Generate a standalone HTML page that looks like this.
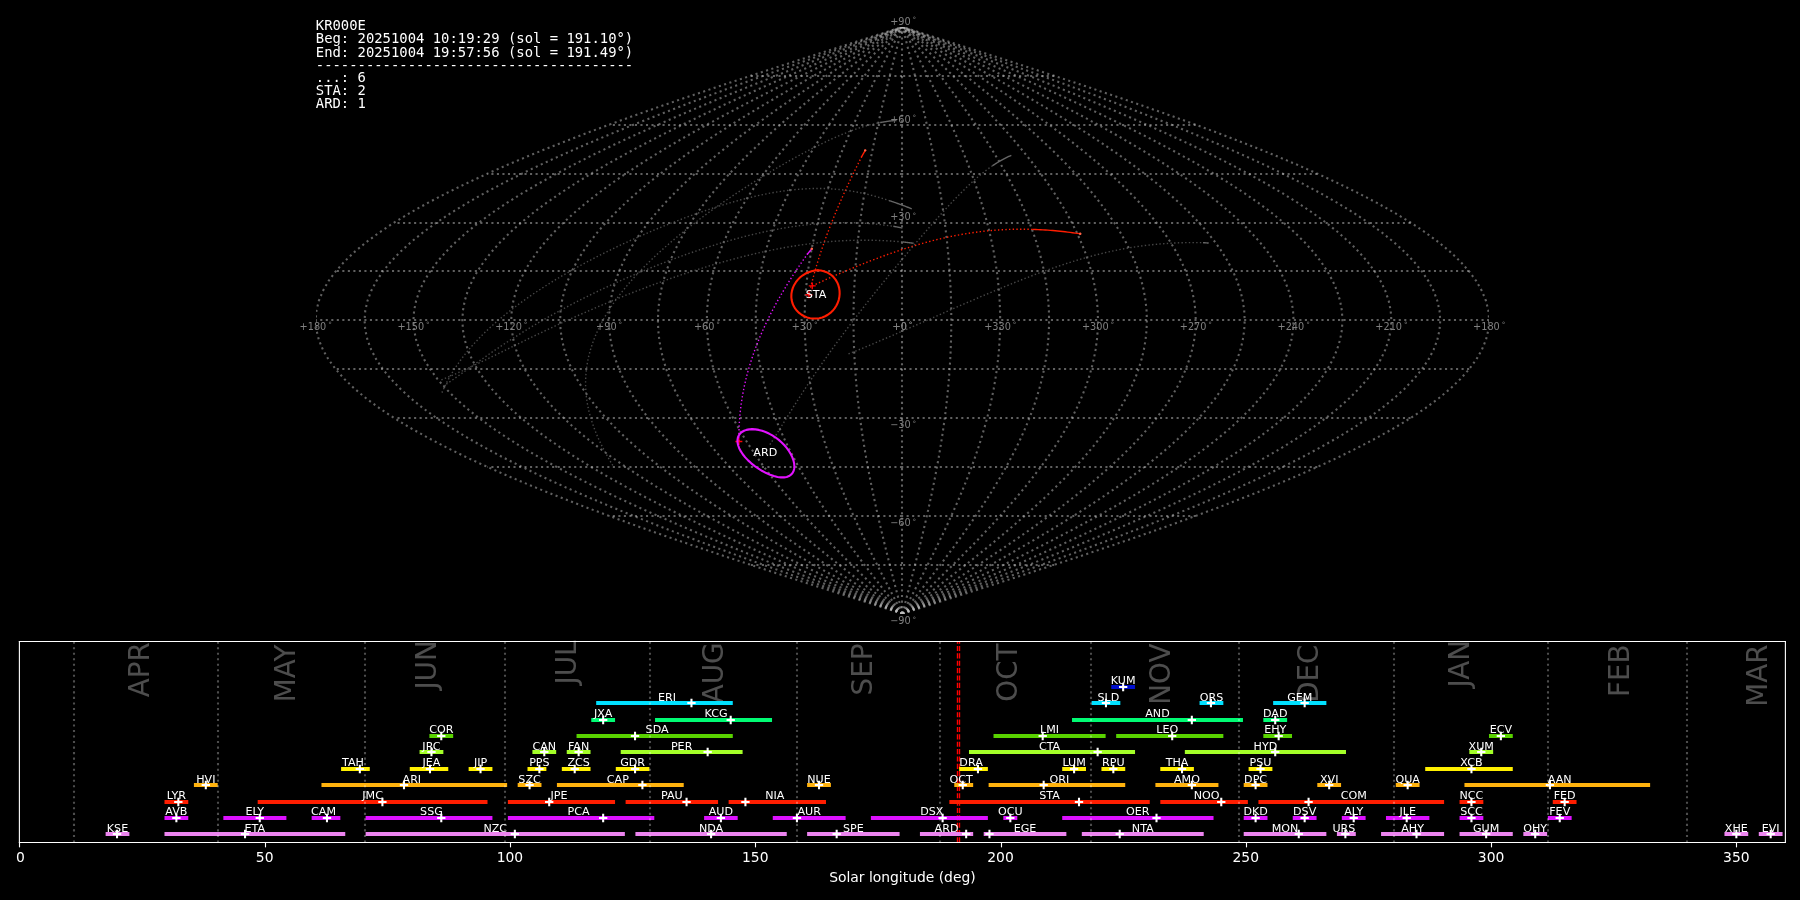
<!DOCTYPE html>
<html lang="en">
<head>
<meta charset="utf-8">
<title>Shower association</title>
<style>html,body{margin:0;padding:0;background:#000;overflow:hidden}svg{display:block;will-change:transform}</style>
</head>
<body>
<svg width="1800" height="900" viewBox="0 0 1296 648">
<defs>
<style type="text/css">*{stroke-linejoin: round; stroke-linecap: butt}</style>
</defs>
<g id="figure_1">
<g id="patch_1">
<path d="M 0 648 L 1296 648 L 1296 0 L 0 0 z
"/>
</g>
<g id="axes_1">
<g id="patch_2">
<path d="M 227.268 441.846 L 1072.188 441.846 L 1072.188 19.386 L 227.268 19.386 z
"/>
</g>
<g id="matplotlib.axis_1"/>
<g id="matplotlib.axis_2"/>
<g id="line2d_1">
<path d="M 649.44 441.846 L 649.44 434.805 L 649.44 427.764 L 649.44 420.723 L 649.44 413.682 L 649.44 406.641 L 649.44 399.6 L 649.44 392.559 L 649.44 385.518 L 649.44 378.477 L 649.44 371.436 L 649.44 364.395 L 649.44 357.354 L 649.44 350.313 L 649.44 343.272 L 649.44 336.231 L 649.44 329.19 L 649.44 322.149 L 649.44 315.108 L 649.44 308.067 L 649.44 301.026 L 649.44 293.985 L 649.44 286.944 L 649.44 279.903 L 649.44 272.862 L 649.44 265.821 L 649.44 258.78 L 649.44 251.739 L 649.44 244.698 L 649.44 237.657 L 649.44 230.616 L 649.44 223.575 L 649.44 216.534 L 649.44 209.493 L 649.44 202.452 L 649.44 195.411 L 649.44 188.37 L 649.44 181.329 L 649.44 174.288 L 649.44 167.247 L 649.44 160.206 L 649.44 153.165 L 649.44 146.124 L 649.44 139.083 L 649.44 132.042 L 649.44 125.001 L 649.44 117.96 L 649.44 110.919 L 649.44 103.878 L 649.44 96.837 L 649.44 89.796 L 649.44 82.755 L 649.44 75.714 L 649.44 68.673 L 649.44 61.632 L 649.44 54.591 L 649.44 47.55 L 649.44 40.509 L 649.44 33.468 L 649.44 26.427 L 649.44 19.386 " clip-path="url(#pd2f023da11)" style="fill: none; stroke-dasharray: 1.5,2.475; stroke-dashoffset: 0; stroke: #c0c0c0; stroke-opacity: 0.5; stroke-width: 1.5"/>
</g>
<g id="line2d_2">
<path d="M 649.728 441.846 L 647.885513 434.805 L 646.048075 427.764 L 644.220725 420.723 L 642.408469 413.682 L 640.616276 406.641 L 638.849057 399.6 L 637.111656 392.559 L 635.408836 385.518 L 633.745264 378.477 L 632.1255 371.436 L 630.553983 364.395 L 629.03502 357.354 L 627.572776 350.313 L 626.171257 343.272 L 624.834306 336.231 L 623.565586 329.19 L 622.368576 322.149 L 621.246557 315.108 L 620.202603 308.067 L 619.239576 301.026 L 618.360115 293.985 L 617.566632 286.944 L 616.861301 279.903 L 616.246055 272.862 L 615.722581 265.821 L 615.292314 258.78 L 614.956432 251.739 L 614.715857 244.698 L 614.571247 237.657 L 614.523 230.616 L 614.571247 223.575 L 614.715857 216.534 L 614.956432 209.493 L 615.292314 202.452 L 615.722581 195.411 L 616.246055 188.37 L 616.861301 181.329 L 617.566632 174.288 L 618.360115 167.247 L 619.239576 160.206 L 620.202603 153.165 L 621.246557 146.124 L 622.368576 139.083 L 623.565586 132.042 L 624.834306 125.001 L 626.171257 117.96 L 627.572776 110.919 L 629.03502 103.878 L 630.553983 96.837 L 632.1255 89.796 L 633.745264 82.755 L 635.408836 75.714 L 637.111656 68.673 L 638.849057 61.632 L 640.616276 54.591 L 642.408469 47.55 L 644.220725 40.509 L 646.048075 33.468 L 647.885513 26.427 L 649.728 19.386 " clip-path="url(#pd2f023da11)" style="fill: none; stroke-dasharray: 1.5,2.475; stroke-dashoffset: 0; stroke: #c0c0c0; stroke-opacity: 0.5; stroke-width: 1.5"/>
</g>
<g id="line2d_3">
<path d="M 649.728 441.846 L 646.043025 434.805 L 642.368151 427.764 L 638.713449 420.723 L 635.088938 413.682 L 631.504551 406.641 L 627.970113 399.6 L 624.495313 392.559 L 621.089673 385.518 L 617.762529 378.477 L 614.523 371.436 L 611.379966 364.395 L 608.34204 357.354 L 605.417551 350.313 L 602.614514 343.272 L 599.940612 336.231 L 597.403173 329.19 L 595.009153 322.149 L 592.765113 315.108 L 590.677205 308.067 L 588.751151 301.026 L 586.992231 293.985 L 585.405264 286.944 L 583.994602 279.903 L 582.764111 272.862 L 581.717163 265.821 L 580.856627 258.78 L 580.184864 251.739 L 579.703713 244.698 L 579.414494 237.657 L 579.318 230.616 L 579.414494 223.575 L 579.703713 216.534 L 580.184864 209.493 L 580.856627 202.452 L 581.717163 195.411 L 582.764111 188.37 L 583.994602 181.329 L 585.405264 174.288 L 586.992231 167.247 L 588.751151 160.206 L 590.677205 153.165 L 592.765113 146.124 L 595.009153 139.083 L 597.403173 132.042 L 599.940612 125.001 L 602.614514 117.96 L 605.417551 110.919 L 608.34204 103.878 L 611.379966 96.837 L 614.523 89.796 L 617.762529 82.755 L 621.089673 75.714 L 624.495313 68.673 L 627.970113 61.632 L 631.504551 54.591 L 635.088938 47.55 L 638.713449 40.509 L 642.368151 33.468 L 646.043025 26.427 L 649.728 19.386 " clip-path="url(#pd2f023da11)" style="fill: none; stroke-dasharray: 1.5,2.475; stroke-dashoffset: 0; stroke: #c0c0c0; stroke-opacity: 0.5; stroke-width: 1.5"/>
</g>
<g id="line2d_4">
<path d="M 649.728 441.846 L 644.200538 434.805 L 638.688226 427.764 L 633.206174 420.723 L 627.769407 413.682 L 622.392827 406.641 L 617.09117 399.6 L 611.878969 392.559 L 606.770509 385.518 L 601.779793 378.477 L 596.9205 371.436 L 592.205948 364.395 L 587.649061 357.354 L 583.262327 350.313 L 579.057771 343.272 L 575.046917 336.231 L 571.240759 329.19 L 567.649729 322.149 L 564.28367 315.108 L 561.151808 308.067 L 558.262727 301.026 L 555.624346 293.985 L 553.243896 286.944 L 551.127903 279.903 L 549.282166 272.862 L 547.711744 265.821 L 546.420941 258.78 L 545.413296 251.739 L 544.69157 244.698 L 544.257742 237.657 L 544.113 230.616 L 544.257742 223.575 L 544.69157 216.534 L 545.413296 209.493 L 546.420941 202.452 L 547.711744 195.411 L 549.282166 188.37 L 551.127903 181.329 L 553.243896 174.288 L 555.624346 167.247 L 558.262727 160.206 L 561.151808 153.165 L 564.28367 146.124 L 567.649729 139.083 L 571.240759 132.042 L 575.046917 125.001 L 579.057771 117.96 L 583.262327 110.919 L 587.649061 103.878 L 592.205948 96.837 L 596.9205 89.796 L 601.779793 82.755 L 606.770509 75.714 L 611.878969 68.673 L 617.09117 61.632 L 622.392827 54.591 L 627.769407 47.55 L 633.206174 40.509 L 638.688226 33.468 L 644.200538 26.427 L 649.728 19.386 " clip-path="url(#pd2f023da11)" style="fill: none; stroke-dasharray: 1.5,2.475; stroke-dashoffset: 0; stroke: #c0c0c0; stroke-opacity: 0.5; stroke-width: 1.5"/>
</g>
<g id="line2d_5">
<path d="M 649.728 441.846 L 642.358051 434.805 L 635.008302 427.764 L 627.698899 420.723 L 620.449876 413.682 L 613.281102 406.641 L 606.212227 399.6 L 599.262625 392.559 L 592.451346 385.518 L 585.797058 378.477 L 579.318 371.436 L 573.031931 364.395 L 566.956081 357.354 L 561.107103 350.313 L 555.501028 343.272 L 550.153223 336.231 L 545.078346 329.19 L 540.290306 322.149 L 535.802227 315.108 L 531.626411 308.067 L 527.774303 301.026 L 524.256461 293.985 L 521.082529 286.944 L 518.261204 279.903 L 515.800221 272.862 L 513.706325 265.821 L 511.985255 258.78 L 510.641728 251.739 L 509.679427 244.698 L 509.100989 237.657 L 508.908 230.616 L 509.100989 223.575 L 509.679427 216.534 L 510.641728 209.493 L 511.985255 202.452 L 513.706325 195.411 L 515.800221 188.37 L 518.261204 181.329 L 521.082529 174.288 L 524.256461 167.247 L 527.774303 160.206 L 531.626411 153.165 L 535.802227 146.124 L 540.290306 139.083 L 545.078346 132.042 L 550.153223 125.001 L 555.501028 117.96 L 561.107103 110.919 L 566.956081 103.878 L 573.031931 96.837 L 579.318 89.796 L 585.797058 82.755 L 592.451346 75.714 L 599.262625 68.673 L 606.212227 61.632 L 613.281102 54.591 L 620.449876 47.55 L 627.698899 40.509 L 635.008302 33.468 L 642.358051 26.427 L 649.728 19.386 " clip-path="url(#pd2f023da11)" style="fill: none; stroke-dasharray: 1.5,2.475; stroke-dashoffset: 0; stroke: #c0c0c0; stroke-opacity: 0.5; stroke-width: 1.5"/>
</g>
<g id="line2d_6">
<path d="M 649.728 441.846 L 640.515563 434.805 L 631.328377 427.764 L 622.191623 420.723 L 613.130345 413.682 L 604.169378 406.641 L 595.333284 399.6 L 586.646282 392.559 L 578.132182 385.518 L 569.814322 378.477 L 561.7155 371.436 L 553.857914 364.395 L 546.263101 357.354 L 538.951878 350.313 L 531.944285 343.272 L 525.259529 336.231 L 518.915932 329.19 L 512.930882 322.149 L 507.320784 315.108 L 502.101013 308.067 L 497.285878 301.026 L 492.888577 293.985 L 488.921161 286.944 L 485.394505 279.903 L 482.318277 272.862 L 479.700906 265.821 L 477.549569 258.78 L 475.87016 251.739 L 474.667283 244.698 L 473.944236 237.657 L 473.703 230.616 L 473.944236 223.575 L 474.667283 216.534 L 475.87016 209.493 L 477.549569 202.452 L 479.700906 195.411 L 482.318277 188.37 L 485.394505 181.329 L 488.921161 174.288 L 492.888577 167.247 L 497.285878 160.206 L 502.101013 153.165 L 507.320784 146.124 L 512.930882 139.083 L 518.915932 132.042 L 525.259529 125.001 L 531.944285 117.96 L 538.951878 110.919 L 546.263101 103.878 L 553.857914 96.837 L 561.7155 89.796 L 569.814322 82.755 L 578.132182 75.714 L 586.646282 68.673 L 595.333284 61.632 L 604.169378 54.591 L 613.130345 47.55 L 622.191623 40.509 L 631.328377 33.468 L 640.515563 26.427 L 649.728 19.386 " clip-path="url(#pd2f023da11)" style="fill: none; stroke-dasharray: 1.5,2.475; stroke-dashoffset: 0; stroke: #c0c0c0; stroke-opacity: 0.5; stroke-width: 1.5"/>
</g>
<g id="line2d_7">
<path d="M 649.728 441.846 L 638.673076 434.805 L 627.648453 427.764 L 616.684348 420.723 L 605.810814 413.682 L 595.057653 406.641 L 584.45434 399.6 L 574.029938 392.559 L 563.813019 385.518 L 553.831587 378.477 L 544.113 371.436 L 534.683897 364.395 L 525.570121 357.354 L 516.796654 350.313 L 508.387542 343.272 L 500.365835 336.231 L 492.753519 329.19 L 485.571459 322.149 L 478.83934 315.108 L 472.575616 308.067 L 466.797454 301.026 L 461.520692 293.985 L 456.759793 286.944 L 452.527807 279.903 L 448.836332 272.862 L 445.695488 265.821 L 443.113882 258.78 L 441.098592 251.739 L 439.65514 244.698 L 438.787483 237.657 L 438.498 230.616 L 438.787483 223.575 L 439.65514 216.534 L 441.098592 209.493 L 443.113882 202.452 L 445.695488 195.411 L 448.836332 188.37 L 452.527807 181.329 L 456.759793 174.288 L 461.520692 167.247 L 466.797454 160.206 L 472.575616 153.165 L 478.83934 146.124 L 485.571459 139.083 L 492.753519 132.042 L 500.365835 125.001 L 508.387542 117.96 L 516.796654 110.919 L 525.570121 103.878 L 534.683897 96.837 L 544.113 89.796 L 553.831587 82.755 L 563.813019 75.714 L 574.029938 68.673 L 584.45434 61.632 L 595.057653 54.591 L 605.810814 47.55 L 616.684348 40.509 L 627.648453 33.468 L 638.673076 26.427 L 649.728 19.386 " clip-path="url(#pd2f023da11)" style="fill: none; stroke-dasharray: 1.5,2.475; stroke-dashoffset: 0; stroke: #c0c0c0; stroke-opacity: 0.5; stroke-width: 1.5"/>
</g>
<g id="line2d_8">
<path d="M 649.728 441.846 L 636.830589 434.805 L 623.968528 427.764 L 611.177073 420.723 L 598.491282 413.682 L 585.945929 406.641 L 573.575397 399.6 L 561.413594 392.559 L 549.493855 385.518 L 537.848851 378.477 L 526.5105 371.436 L 515.509879 364.395 L 504.877141 357.354 L 494.641429 350.313 L 484.830799 343.272 L 475.47214 336.231 L 466.591105 329.19 L 458.212035 322.149 L 450.357897 315.108 L 443.050219 308.067 L 436.30903 301.026 L 430.152807 293.985 L 424.598425 286.944 L 419.661108 279.903 L 415.354387 272.862 L 411.690069 265.821 L 408.678196 258.78 L 406.327024 251.739 L 404.642997 244.698 L 403.630731 237.657 L 403.293 230.616 L 403.630731 223.575 L 404.642997 216.534 L 406.327024 209.493 L 408.678196 202.452 L 411.690069 195.411 L 415.354387 188.37 L 419.661108 181.329 L 424.598425 174.288 L 430.152807 167.247 L 436.30903 160.206 L 443.050219 153.165 L 450.357897 146.124 L 458.212035 139.083 L 466.591105 132.042 L 475.47214 125.001 L 484.830799 117.96 L 494.641429 110.919 L 504.877141 103.878 L 515.509879 96.837 L 526.5105 89.796 L 537.848851 82.755 L 549.493855 75.714 L 561.413594 68.673 L 573.575397 61.632 L 585.945929 54.591 L 598.491282 47.55 L 611.177073 40.509 L 623.968528 33.468 L 636.830589 26.427 L 649.728 19.386 " clip-path="url(#pd2f023da11)" style="fill: none; stroke-dasharray: 1.5,2.475; stroke-dashoffset: 0; stroke: #c0c0c0; stroke-opacity: 0.5; stroke-width: 1.5"/>
</g>
<g id="line2d_9">
<path d="M 649.728 441.846 L 634.988101 434.805 L 620.288604 427.764 L 605.669797 420.723 L 591.171751 413.682 L 576.834204 406.641 L 562.696454 399.6 L 548.797251 392.559 L 535.174692 385.518 L 521.866116 378.477 L 508.908 371.436 L 496.335862 364.395 L 484.184162 357.354 L 472.486205 350.313 L 461.274056 343.272 L 450.578446 336.231 L 440.428691 329.19 L 430.852611 322.149 L 421.876454 315.108 L 413.524821 308.067 L 405.820605 301.026 L 398.784923 293.985 L 392.437057 286.944 L 386.794409 279.903 L 381.872443 272.862 L 377.68465 265.821 L 374.24251 258.78 L 371.555456 251.739 L 369.630853 244.698 L 368.473978 237.657 L 368.088 230.616 L 368.473978 223.575 L 369.630853 216.534 L 371.555456 209.493 L 374.24251 202.452 L 377.68465 195.411 L 381.872443 188.37 L 386.794409 181.329 L 392.437057 174.288 L 398.784923 167.247 L 405.820605 160.206 L 413.524821 153.165 L 421.876454 146.124 L 430.852611 139.083 L 440.428691 132.042 L 450.578446 125.001 L 461.274056 117.96 L 472.486205 110.919 L 484.184162 103.878 L 496.335862 96.837 L 508.908 89.796 L 521.866116 82.755 L 535.174692 75.714 L 548.797251 68.673 L 562.696454 61.632 L 576.834204 54.591 L 591.171751 47.55 L 605.669797 40.509 L 620.288604 33.468 L 634.988101 26.427 L 649.728 19.386 " clip-path="url(#pd2f023da11)" style="fill: none; stroke-dasharray: 1.5,2.475; stroke-dashoffset: 0; stroke: #c0c0c0; stroke-opacity: 0.5; stroke-width: 1.5"/>
</g>
<g id="line2d_10">
<path d="M 649.728 441.846 L 633.145614 434.805 L 616.608679 427.764 L 600.162522 420.723 L 583.85222 413.682 L 567.72248 406.641 L 551.81751 399.6 L 536.180907 392.559 L 520.855528 385.518 L 505.88338 378.477 L 491.3055 371.436 L 477.161845 364.395 L 463.491182 357.354 L 450.330981 350.313 L 437.717313 343.272 L 425.684752 336.231 L 414.266278 329.19 L 403.493188 322.149 L 393.39501 315.108 L 383.999424 308.067 L 375.332181 301.026 L 367.417038 293.985 L 360.275689 286.944 L 353.92771 279.903 L 348.390498 272.862 L 343.679232 265.821 L 339.806823 258.78 L 336.783888 251.739 L 334.61871 244.698 L 333.317225 237.657 L 332.883 230.616 L 333.317225 223.575 L 334.61871 216.534 L 336.783888 209.493 L 339.806823 202.452 L 343.679232 195.411 L 348.390498 188.37 L 353.92771 181.329 L 360.275689 174.288 L 367.417038 167.247 L 375.332181 160.206 L 383.999424 153.165 L 393.39501 146.124 L 403.493188 139.083 L 414.266278 132.042 L 425.684752 125.001 L 437.717313 117.96 L 450.330981 110.919 L 463.491182 103.878 L 477.161845 96.837 L 491.3055 89.796 L 505.88338 82.755 L 520.855528 75.714 L 536.180907 68.673 L 551.81751 61.632 L 567.72248 54.591 L 583.85222 47.55 L 600.162522 40.509 L 616.608679 33.468 L 633.145614 26.427 L 649.728 19.386 " clip-path="url(#pd2f023da11)" style="fill: none; stroke-dasharray: 1.5,2.475; stroke-dashoffset: 0; stroke: #c0c0c0; stroke-opacity: 0.5; stroke-width: 1.5"/>
</g>
<g id="line2d_11">
<path d="M 649.728 441.846 L 631.303127 434.805 L 612.928755 427.764 L 594.655247 420.723 L 576.532689 413.682 L 558.610755 406.641 L 540.938567 399.6 L 523.564563 392.559 L 506.536365 385.518 L 489.900645 378.477 L 473.703 371.436 L 457.987828 364.395 L 442.798202 357.354 L 428.175756 350.313 L 414.16057 343.272 L 400.791058 336.231 L 388.103864 329.19 L 376.133764 322.149 L 364.913567 315.108 L 354.474027 308.067 L 344.843757 301.026 L 336.049153 293.985 L 328.114322 286.944 L 321.061011 279.903 L 314.908553 272.862 L 309.673813 265.821 L 305.371137 258.78 L 302.01232 251.739 L 299.606567 244.698 L 298.160472 237.657 L 297.678 230.616 L 298.160472 223.575 L 299.606567 216.534 L 302.01232 209.493 L 305.371137 202.452 L 309.673813 195.411 L 314.908553 188.37 L 321.061011 181.329 L 328.114322 174.288 L 336.049153 167.247 L 344.843757 160.206 L 354.474027 153.165 L 364.913567 146.124 L 376.133764 139.083 L 388.103864 132.042 L 400.791058 125.001 L 414.16057 117.96 L 428.175756 110.919 L 442.798202 103.878 L 457.987828 96.837 L 473.703 89.796 L 489.900645 82.755 L 506.536365 75.714 L 523.564563 68.673 L 540.938567 61.632 L 558.610755 54.591 L 576.532689 47.55 L 594.655247 40.509 L 612.928755 33.468 L 631.303127 26.427 L 649.728 19.386 " clip-path="url(#pd2f023da11)" style="fill: none; stroke-dasharray: 1.5,2.475; stroke-dashoffset: 0; stroke: #c0c0c0; stroke-opacity: 0.5; stroke-width: 1.5"/>
</g>
<g id="line2d_12">
<path d="M 649.728 441.846 L 629.460639 434.805 L 609.24883 427.764 L 589.147971 420.723 L 569.213158 413.682 L 549.499031 406.641 L 530.059624 399.6 L 510.94822 392.559 L 492.217201 385.518 L 473.917909 378.477 L 456.1005 371.436 L 438.81381 364.395 L 422.105222 357.354 L 406.020532 350.313 L 390.603827 343.272 L 375.897363 336.231 L 361.941451 329.19 L 348.774341 322.149 L 336.432124 315.108 L 324.948629 308.067 L 314.355332 301.026 L 304.681268 293.985 L 295.952954 286.944 L 288.194312 279.903 L 281.426609 272.862 L 275.668394 265.821 L 270.935451 258.78 L 267.240752 251.739 L 264.594423 244.698 L 263.00372 237.657 L 262.473 230.616 L 263.00372 223.575 L 264.594423 216.534 L 267.240752 209.493 L 270.935451 202.452 L 275.668394 195.411 L 281.426609 188.37 L 288.194312 181.329 L 295.952954 174.288 L 304.681268 167.247 L 314.355332 160.206 L 324.948629 153.165 L 336.432124 146.124 L 348.774341 139.083 L 361.941451 132.042 L 375.897363 125.001 L 390.603827 117.96 L 406.020532 110.919 L 422.105222 103.878 L 438.81381 96.837 L 456.1005 89.796 L 473.917909 82.755 L 492.217201 75.714 L 510.94822 68.673 L 530.059624 61.632 L 549.499031 54.591 L 569.213158 47.55 L 589.147971 40.509 L 609.24883 33.468 L 629.460639 26.427 L 649.728 19.386 " clip-path="url(#pd2f023da11)" style="fill: none; stroke-dasharray: 1.5,2.475; stroke-dashoffset: 0; stroke: #c0c0c0; stroke-opacity: 0.5; stroke-width: 1.5"/>
</g>
<g id="line2d_13">
<path d="M 649.728 441.846 L 627.618152 434.805 L 605.568905 427.764 L 583.640696 420.723 L 561.893627 413.682 L 540.387306 406.641 L 519.180681 399.6 L 498.331876 392.559 L 477.898038 385.518 L 457.935173 378.477 L 438.498 371.436 L 419.639793 364.395 L 401.412242 357.354 L 383.865308 350.313 L 367.047084 343.272 L 351.003669 336.231 L 335.779037 329.19 L 321.414917 322.149 L 307.950681 315.108 L 295.423232 308.067 L 283.866908 301.026 L 273.313384 293.985 L 263.791586 286.944 L 255.327613 279.903 L 247.944664 272.862 L 241.662975 265.821 L 236.499765 258.78 L 232.469184 251.739 L 229.58228 244.698 L 227.846967 237.657 L 227.268 230.616 L 227.846967 223.575 L 229.58228 216.534 L 232.469184 209.493 L 236.499765 202.452 L 241.662975 195.411 L 247.944664 188.37 L 255.327613 181.329 L 263.791586 174.288 L 273.313384 167.247 L 283.866908 160.206 L 295.423232 153.165 L 307.950681 146.124 L 321.414917 139.083 L 335.779037 132.042 L 351.003669 125.001 L 367.047084 117.96 L 383.865308 110.919 L 401.412242 103.878 L 419.639793 96.837 L 438.498 89.796 L 457.935173 82.755 L 477.898038 75.714 L 498.331876 68.673 L 519.180681 61.632 L 540.387306 54.591 L 561.893627 47.55 L 583.640696 40.509 L 605.568905 33.468 L 627.618152 26.427 L 649.728 19.386 " clip-path="url(#pd2f023da11)" style="fill: none; stroke-dasharray: 1.5,2.475; stroke-dashoffset: 0; stroke: #c0c0c0; stroke-opacity: 0.5; stroke-width: 1.5"/>
</g>
<g id="line2d_14">
<path d="M 649.728 441.846 L 671.837836 434.805 L 693.88707 427.764 L 715.815267 420.723 L 737.562324 413.682 L 759.068633 406.641 L 780.275247 399.6 L 801.12404 392.559 L 821.557867 385.518 L 841.52072 378.477 L 860.957883 371.436 L 879.816079 364.395 L 898.04362 357.354 L 915.590545 350.313 L 932.408759 343.272 L 948.452165 336.231 L 963.676789 329.19 L 978.0409 322.149 L 991.50513 315.108 L 1004.032571 308.067 L 1015.588889 301.026 L 1026.142407 293.985 L 1035.6642 286.944 L 1044.128168 279.903 L 1051.511113 272.862 L 1057.792798 265.821 L 1062.956006 258.78 L 1066.986585 251.739 L 1069.873487 244.698 L 1071.608799 237.657 L 1072.187765 230.616 L 1071.608799 223.575 L 1069.873487 216.534 L 1066.986585 209.493 L 1062.956006 202.452 L 1057.792798 195.411 L 1051.511113 188.37 L 1044.128168 181.329 L 1035.6642 174.288 L 1026.142407 167.247 L 1015.588889 160.206 L 1004.032571 153.165 L 991.50513 146.124 L 978.0409 139.083 L 963.676789 132.042 L 948.452165 125.001 L 932.408759 117.96 L 915.590545 110.919 L 898.04362 103.878 L 879.816079 96.837 L 860.957883 89.796 L 841.52072 82.755 L 821.557867 75.714 L 801.12404 68.673 L 780.275247 61.632 L 759.068633 54.591 L 737.562324 47.55 L 715.815267 40.509 L 693.88707 33.468 L 671.837836 26.427 L 649.728 19.386 " clip-path="url(#pd2f023da11)" style="fill: none; stroke-dasharray: 1.5,2.475; stroke-dashoffset: 0; stroke: #c0c0c0; stroke-opacity: 0.5; stroke-width: 1.5"/>
</g>
<g id="line2d_15">
<path d="M 649.728 441.846 L 669.995361 434.805 L 690.20717 427.764 L 710.308029 420.723 L 730.242842 413.682 L 749.956969 406.641 L 769.396376 399.6 L 788.50778 392.559 L 807.238799 385.518 L 825.538091 378.477 L 843.3555 371.436 L 860.64219 364.395 L 877.350778 357.354 L 893.435468 350.313 L 908.852173 343.272 L 923.558637 336.231 L 937.514549 329.19 L 950.681659 322.149 L 963.023876 315.108 L 974.507371 308.067 L 985.100668 301.026 L 994.774732 293.985 L 1003.503046 286.944 L 1011.261688 279.903 L 1018.029391 272.862 L 1023.787606 265.821 L 1028.520549 258.78 L 1032.215248 251.739 L 1034.861577 244.698 L 1036.45228 237.657 L 1036.983 230.616 L 1036.45228 223.575 L 1034.861577 216.534 L 1032.215248 209.493 L 1028.520549 202.452 L 1023.787606 195.411 L 1018.029391 188.37 L 1011.261688 181.329 L 1003.503046 174.288 L 994.774732 167.247 L 985.100668 160.206 L 974.507371 153.165 L 963.023876 146.124 L 950.681659 139.083 L 937.514549 132.042 L 923.558637 125.001 L 908.852173 117.96 L 893.435468 110.919 L 877.350778 103.878 L 860.64219 96.837 L 843.3555 89.796 L 825.538091 82.755 L 807.238799 75.714 L 788.50778 68.673 L 769.396376 61.632 L 749.956969 54.591 L 730.242842 47.55 L 710.308029 40.509 L 690.20717 33.468 L 669.995361 26.427 L 649.728 19.386 " clip-path="url(#pd2f023da11)" style="fill: none; stroke-dasharray: 1.5,2.475; stroke-dashoffset: 0; stroke: #c0c0c0; stroke-opacity: 0.5; stroke-width: 1.5"/>
</g>
<g id="line2d_16">
<path d="M 649.728 441.846 L 668.152873 434.805 L 686.527245 427.764 L 704.800753 420.723 L 722.923311 413.682 L 740.845245 406.641 L 758.517433 399.6 L 775.891437 392.559 L 792.919635 385.518 L 809.555355 378.477 L 825.753 371.436 L 841.468172 364.395 L 856.657798 357.354 L 871.280244 350.313 L 885.29543 343.272 L 898.664942 336.231 L 911.352136 329.19 L 923.322236 322.149 L 934.542433 315.108 L 944.981973 308.067 L 954.612243 301.026 L 963.406847 293.985 L 971.341678 286.944 L 978.394989 279.903 L 984.547447 272.862 L 989.782187 265.821 L 994.084863 258.78 L 997.44368 251.739 L 999.849433 244.698 L 1001.295528 237.657 L 1001.778 230.616 L 1001.295528 223.575 L 999.849433 216.534 L 997.44368 209.493 L 994.084863 202.452 L 989.782187 195.411 L 984.547447 188.37 L 978.394989 181.329 L 971.341678 174.288 L 963.406847 167.247 L 954.612243 160.206 L 944.981973 153.165 L 934.542433 146.124 L 923.322236 139.083 L 911.352136 132.042 L 898.664942 125.001 L 885.29543 117.96 L 871.280244 110.919 L 856.657798 103.878 L 841.468172 96.837 L 825.753 89.796 L 809.555355 82.755 L 792.919635 75.714 L 775.891437 68.673 L 758.517433 61.632 L 740.845245 54.591 L 722.923311 47.55 L 704.800753 40.509 L 686.527245 33.468 L 668.152873 26.427 L 649.728 19.386 " clip-path="url(#pd2f023da11)" style="fill: none; stroke-dasharray: 1.5,2.475; stroke-dashoffset: 0; stroke: #c0c0c0; stroke-opacity: 0.5; stroke-width: 1.5"/>
</g>
<g id="line2d_17">
<path d="M 649.728 441.846 L 666.310386 434.805 L 682.847321 427.764 L 699.293478 420.723 L 715.60378 413.682 L 731.73352 406.641 L 747.63849 399.6 L 763.275093 392.559 L 778.600472 385.518 L 793.57262 378.477 L 808.1505 371.436 L 822.294155 364.395 L 835.964818 357.354 L 849.125019 350.313 L 861.738687 343.272 L 873.771248 336.231 L 885.189722 329.19 L 895.962812 322.149 L 906.06099 315.108 L 915.456576 308.067 L 924.123819 301.026 L 932.038962 293.985 L 939.180311 286.944 L 945.52829 279.903 L 951.065502 272.862 L 955.776768 265.821 L 959.649177 258.78 L 962.672112 251.739 L 964.83729 244.698 L 966.138775 237.657 L 966.573 230.616 L 966.138775 223.575 L 964.83729 216.534 L 962.672112 209.493 L 959.649177 202.452 L 955.776768 195.411 L 951.065502 188.37 L 945.52829 181.329 L 939.180311 174.288 L 932.038962 167.247 L 924.123819 160.206 L 915.456576 153.165 L 906.06099 146.124 L 895.962812 139.083 L 885.189722 132.042 L 873.771248 125.001 L 861.738687 117.96 L 849.125019 110.919 L 835.964818 103.878 L 822.294155 96.837 L 808.1505 89.796 L 793.57262 82.755 L 778.600472 75.714 L 763.275093 68.673 L 747.63849 61.632 L 731.73352 54.591 L 715.60378 47.55 L 699.293478 40.509 L 682.847321 33.468 L 666.310386 26.427 L 649.728 19.386 " clip-path="url(#pd2f023da11)" style="fill: none; stroke-dasharray: 1.5,2.475; stroke-dashoffset: 0; stroke: #c0c0c0; stroke-opacity: 0.5; stroke-width: 1.5"/>
</g>
<g id="line2d_18">
<path d="M 649.728 441.846 L 664.467899 434.805 L 679.167396 427.764 L 693.786203 420.723 L 708.284249 413.682 L 722.621796 406.641 L 736.759546 399.6 L 750.658749 392.559 L 764.281308 385.518 L 777.589884 378.477 L 790.548 371.436 L 803.120138 364.395 L 815.271838 357.354 L 826.969795 350.313 L 838.181944 343.272 L 848.877554 336.231 L 859.027309 329.19 L 868.603389 322.149 L 877.579546 315.108 L 885.931179 308.067 L 893.635395 301.026 L 900.671077 293.985 L 907.018943 286.944 L 912.661591 279.903 L 917.583557 272.862 L 921.77135 265.821 L 925.21349 258.78 L 927.900544 251.739 L 929.825147 244.698 L 930.982022 237.657 L 931.368 230.616 L 930.982022 223.575 L 929.825147 216.534 L 927.900544 209.493 L 925.21349 202.452 L 921.77135 195.411 L 917.583557 188.37 L 912.661591 181.329 L 907.018943 174.288 L 900.671077 167.247 L 893.635395 160.206 L 885.931179 153.165 L 877.579546 146.124 L 868.603389 139.083 L 859.027309 132.042 L 848.877554 125.001 L 838.181944 117.96 L 826.969795 110.919 L 815.271838 103.878 L 803.120138 96.837 L 790.548 89.796 L 777.589884 82.755 L 764.281308 75.714 L 750.658749 68.673 L 736.759546 61.632 L 722.621796 54.591 L 708.284249 47.55 L 693.786203 40.509 L 679.167396 33.468 L 664.467899 26.427 L 649.728 19.386 " clip-path="url(#pd2f023da11)" style="fill: none; stroke-dasharray: 1.5,2.475; stroke-dashoffset: 0; stroke: #c0c0c0; stroke-opacity: 0.5; stroke-width: 1.5"/>
</g>
<g id="line2d_19">
<path d="M 649.728 441.846 L 662.625411 434.805 L 675.487472 427.764 L 688.278927 420.723 L 700.964718 413.682 L 713.510071 406.641 L 725.880603 399.6 L 738.042406 392.559 L 749.962145 385.518 L 761.607149 378.477 L 772.9455 371.436 L 783.946121 364.395 L 794.578859 357.354 L 804.814571 350.313 L 814.625201 343.272 L 823.98386 336.231 L 832.864895 329.19 L 841.243965 322.149 L 849.098103 315.108 L 856.405781 308.067 L 863.14697 301.026 L 869.303193 293.985 L 874.857575 286.944 L 879.794892 279.903 L 884.101613 272.862 L 887.765931 265.821 L 890.777804 258.78 L 893.128976 251.739 L 894.813003 244.698 L 895.825269 237.657 L 896.163 230.616 L 895.825269 223.575 L 894.813003 216.534 L 893.128976 209.493 L 890.777804 202.452 L 887.765931 195.411 L 884.101613 188.37 L 879.794892 181.329 L 874.857575 174.288 L 869.303193 167.247 L 863.14697 160.206 L 856.405781 153.165 L 849.098103 146.124 L 841.243965 139.083 L 832.864895 132.042 L 823.98386 125.001 L 814.625201 117.96 L 804.814571 110.919 L 794.578859 103.878 L 783.946121 96.837 L 772.9455 89.796 L 761.607149 82.755 L 749.962145 75.714 L 738.042406 68.673 L 725.880603 61.632 L 713.510071 54.591 L 700.964718 47.55 L 688.278927 40.509 L 675.487472 33.468 L 662.625411 26.427 L 649.728 19.386 " clip-path="url(#pd2f023da11)" style="fill: none; stroke-dasharray: 1.5,2.475; stroke-dashoffset: 0; stroke: #c0c0c0; stroke-opacity: 0.5; stroke-width: 1.5"/>
</g>
<g id="line2d_20">
<path d="M 649.728 441.846 L 660.782924 434.805 L 671.807547 427.764 L 682.771652 420.723 L 693.645186 413.682 L 704.398347 406.641 L 715.00166 399.6 L 725.426062 392.559 L 735.642981 385.518 L 745.624413 378.477 L 755.343 371.436 L 764.772103 364.395 L 773.885879 357.354 L 782.659346 350.313 L 791.068458 343.272 L 799.090165 336.231 L 806.702481 329.19 L 813.884541 322.149 L 820.61666 315.108 L 826.880384 308.067 L 832.658546 301.026 L 837.935308 293.985 L 842.696207 286.944 L 846.928193 279.903 L 850.619668 272.862 L 853.760512 265.821 L 856.342118 258.78 L 858.357408 251.739 L 859.80086 244.698 L 860.668517 237.657 L 860.958 230.616 L 860.668517 223.575 L 859.80086 216.534 L 858.357408 209.493 L 856.342118 202.452 L 853.760512 195.411 L 850.619668 188.37 L 846.928193 181.329 L 842.696207 174.288 L 837.935308 167.247 L 832.658546 160.206 L 826.880384 153.165 L 820.61666 146.124 L 813.884541 139.083 L 806.702481 132.042 L 799.090165 125.001 L 791.068458 117.96 L 782.659346 110.919 L 773.885879 103.878 L 764.772103 96.837 L 755.343 89.796 L 745.624413 82.755 L 735.642981 75.714 L 725.426062 68.673 L 715.00166 61.632 L 704.398347 54.591 L 693.645186 47.55 L 682.771652 40.509 L 671.807547 33.468 L 660.782924 26.427 L 649.728 19.386 " clip-path="url(#pd2f023da11)" style="fill: none; stroke-dasharray: 1.5,2.475; stroke-dashoffset: 0; stroke: #c0c0c0; stroke-opacity: 0.5; stroke-width: 1.5"/>
</g>
<g id="line2d_21">
<path d="M 649.728 441.846 L 658.940437 434.805 L 668.127623 427.764 L 677.264377 420.723 L 686.325655 413.682 L 695.286622 406.641 L 704.122716 399.6 L 712.809718 392.559 L 721.323818 385.518 L 729.641678 378.477 L 737.7405 371.436 L 745.598086 364.395 L 753.192899 357.354 L 760.504122 350.313 L 767.511715 343.272 L 774.196471 336.231 L 780.540068 329.19 L 786.525118 322.149 L 792.135216 315.108 L 797.354987 308.067 L 802.170122 301.026 L 806.567423 293.985 L 810.534839 286.944 L 814.061495 279.903 L 817.137723 272.862 L 819.755094 265.821 L 821.906431 258.78 L 823.58584 251.739 L 824.788717 244.698 L 825.511764 237.657 L 825.753 230.616 L 825.511764 223.575 L 824.788717 216.534 L 823.58584 209.493 L 821.906431 202.452 L 819.755094 195.411 L 817.137723 188.37 L 814.061495 181.329 L 810.534839 174.288 L 806.567423 167.247 L 802.170122 160.206 L 797.354987 153.165 L 792.135216 146.124 L 786.525118 139.083 L 780.540068 132.042 L 774.196471 125.001 L 767.511715 117.96 L 760.504122 110.919 L 753.192899 103.878 L 745.598086 96.837 L 737.7405 89.796 L 729.641678 82.755 L 721.323818 75.714 L 712.809718 68.673 L 704.122716 61.632 L 695.286622 54.591 L 686.325655 47.55 L 677.264377 40.509 L 668.127623 33.468 L 658.940437 26.427 L 649.728 19.386 " clip-path="url(#pd2f023da11)" style="fill: none; stroke-dasharray: 1.5,2.475; stroke-dashoffset: 0; stroke: #c0c0c0; stroke-opacity: 0.5; stroke-width: 1.5"/>
</g>
<g id="line2d_22">
<path d="M 649.728 441.846 L 657.097949 434.805 L 664.447698 427.764 L 671.757101 420.723 L 679.006124 413.682 L 686.174898 406.641 L 693.243773 399.6 L 700.193375 392.559 L 707.004654 385.518 L 713.658942 378.477 L 720.138 371.436 L 726.424069 364.395 L 732.499919 357.354 L 738.348897 350.313 L 743.954972 343.272 L 749.302777 336.231 L 754.377654 329.19 L 759.165694 322.149 L 763.653773 315.108 L 767.829589 308.067 L 771.681697 301.026 L 775.199539 293.985 L 778.373471 286.944 L 781.194796 279.903 L 783.655779 272.862 L 785.749675 265.821 L 787.470745 258.78 L 788.814272 251.739 L 789.776573 244.698 L 790.355011 237.657 L 790.548 230.616 L 790.355011 223.575 L 789.776573 216.534 L 788.814272 209.493 L 787.470745 202.452 L 785.749675 195.411 L 783.655779 188.37 L 781.194796 181.329 L 778.373471 174.288 L 775.199539 167.247 L 771.681697 160.206 L 767.829589 153.165 L 763.653773 146.124 L 759.165694 139.083 L 754.377654 132.042 L 749.302777 125.001 L 743.954972 117.96 L 738.348897 110.919 L 732.499919 103.878 L 726.424069 96.837 L 720.138 89.796 L 713.658942 82.755 L 707.004654 75.714 L 700.193375 68.673 L 693.243773 61.632 L 686.174898 54.591 L 679.006124 47.55 L 671.757101 40.509 L 664.447698 33.468 L 657.097949 26.427 L 649.728 19.386 " clip-path="url(#pd2f023da11)" style="fill: none; stroke-dasharray: 1.5,2.475; stroke-dashoffset: 0; stroke: #c0c0c0; stroke-opacity: 0.5; stroke-width: 1.5"/>
</g>
<g id="line2d_23">
<path d="M 649.728 441.846 L 655.255462 434.805 L 660.767774 427.764 L 666.249826 420.723 L 671.686593 413.682 L 677.063173 406.641 L 682.36483 399.6 L 687.577031 392.559 L 692.685491 385.518 L 697.676207 378.477 L 702.5355 371.436 L 707.250052 364.395 L 711.806939 357.354 L 716.193673 350.313 L 720.398229 343.272 L 724.409083 336.231 L 728.215241 329.19 L 731.806271 322.149 L 735.17233 315.108 L 738.304192 308.067 L 741.193273 301.026 L 743.831654 293.985 L 746.212104 286.944 L 748.328097 279.903 L 750.173834 272.862 L 751.744256 265.821 L 753.035059 258.78 L 754.042704 251.739 L 754.76443 244.698 L 755.198258 237.657 L 755.343 230.616 L 755.198258 223.575 L 754.76443 216.534 L 754.042704 209.493 L 753.035059 202.452 L 751.744256 195.411 L 750.173834 188.37 L 748.328097 181.329 L 746.212104 174.288 L 743.831654 167.247 L 741.193273 160.206 L 738.304192 153.165 L 735.17233 146.124 L 731.806271 139.083 L 728.215241 132.042 L 724.409083 125.001 L 720.398229 117.96 L 716.193673 110.919 L 711.806939 103.878 L 707.250052 96.837 L 702.5355 89.796 L 697.676207 82.755 L 692.685491 75.714 L 687.577031 68.673 L 682.36483 61.632 L 677.063173 54.591 L 671.686593 47.55 L 666.249826 40.509 L 660.767774 33.468 L 655.255462 26.427 L 649.728 19.386 " clip-path="url(#pd2f023da11)" style="fill: none; stroke-dasharray: 1.5,2.475; stroke-dashoffset: 0; stroke: #c0c0c0; stroke-opacity: 0.5; stroke-width: 1.5"/>
</g>
<g id="line2d_24">
<path d="M 649.728 441.846 L 653.412975 434.805 L 657.087849 427.764 L 660.742551 420.723 L 664.367062 413.682 L 667.951449 406.641 L 671.485887 399.6 L 674.960687 392.559 L 678.366327 385.518 L 681.693471 378.477 L 684.933 371.436 L 688.076034 364.395 L 691.11396 357.354 L 694.038449 350.313 L 696.841486 343.272 L 699.515388 336.231 L 702.052827 329.19 L 704.446847 322.149 L 706.690887 315.108 L 708.778795 308.067 L 710.704849 301.026 L 712.463769 293.985 L 714.050736 286.944 L 715.461398 279.903 L 716.691889 272.862 L 717.738837 265.821 L 718.599373 258.78 L 719.271136 251.739 L 719.752287 244.698 L 720.041506 237.657 L 720.138 230.616 L 720.041506 223.575 L 719.752287 216.534 L 719.271136 209.493 L 718.599373 202.452 L 717.738837 195.411 L 716.691889 188.37 L 715.461398 181.329 L 714.050736 174.288 L 712.463769 167.247 L 710.704849 160.206 L 708.778795 153.165 L 706.690887 146.124 L 704.446847 139.083 L 702.052827 132.042 L 699.515388 125.001 L 696.841486 117.96 L 694.038449 110.919 L 691.11396 103.878 L 688.076034 96.837 L 684.933 89.796 L 681.693471 82.755 L 678.366327 75.714 L 674.960687 68.673 L 671.485887 61.632 L 667.951449 54.591 L 664.367062 47.55 L 660.742551 40.509 L 657.087849 33.468 L 653.412975 26.427 L 649.728 19.386 " clip-path="url(#pd2f023da11)" style="fill: none; stroke-dasharray: 1.5,2.475; stroke-dashoffset: 0; stroke: #c0c0c0; stroke-opacity: 0.5; stroke-width: 1.5"/>
</g>
<g id="line2d_25">
<path d="M 649.728 441.846 L 651.570487 434.805 L 653.407925 427.764 L 655.235275 420.723 L 657.047531 413.682 L 658.839724 406.641 L 660.606943 399.6 L 662.344344 392.559 L 664.047164 385.518 L 665.710736 378.477 L 667.3305 371.436 L 668.902017 364.395 L 670.42098 357.354 L 671.883224 350.313 L 673.284743 343.272 L 674.621694 336.231 L 675.890414 329.19 L 677.087424 322.149 L 678.209443 315.108 L 679.253397 308.067 L 680.216424 301.026 L 681.095885 293.985 L 681.889368 286.944 L 682.594699 279.903 L 683.209945 272.862 L 683.733419 265.821 L 684.163686 258.78 L 684.499568 251.739 L 684.740143 244.698 L 684.884753 237.657 L 684.933 230.616 L 684.884753 223.575 L 684.740143 216.534 L 684.499568 209.493 L 684.163686 202.452 L 683.733419 195.411 L 683.209945 188.37 L 682.594699 181.329 L 681.889368 174.288 L 681.095885 167.247 L 680.216424 160.206 L 679.253397 153.165 L 678.209443 146.124 L 677.087424 139.083 L 675.890414 132.042 L 674.621694 125.001 L 673.284743 117.96 L 671.883224 110.919 L 670.42098 103.878 L 668.902017 96.837 L 667.3305 89.796 L 665.710736 82.755 L 664.047164 75.714 L 662.344344 68.673 L 660.606943 61.632 L 658.839724 54.591 L 657.047531 47.55 L 655.235275 40.509 L 653.407925 33.468 L 651.570487 26.427 L 649.728 19.386 " clip-path="url(#pd2f023da11)" style="fill: none; stroke-dasharray: 1.5,2.475; stroke-dashoffset: 0; stroke: #c0c0c0; stroke-opacity: 0.5; stroke-width: 1.5"/>
</g>
<g id="line2d_26">
<path d="M 649.44 442.08 L 649.728 442.08 " clip-path="url(#pd2f023da11)" style="fill: none; stroke-dasharray: 1.5,2.475; stroke-dashoffset: 0; stroke: #c0c0c0; stroke-opacity: 0.5; stroke-width: 1.5"/>
</g>
<g id="line2d_27">
<path d="M 649.728 442.08 L 649.44 442.08 " clip-path="url(#pd2f023da11)" style="fill: none; stroke-dasharray: 1.5,2.475; stroke-dashoffset: 0; stroke: #c0c0c0; stroke-opacity: 0.5; stroke-width: 1.5"/>
</g>
<g id="line2d_28">
<path d="M 649.44 406.8 L 540.387306 406.8 " clip-path="url(#pd2f023da11)" style="fill: none; stroke-dasharray: 1.5,2.475; stroke-dashoffset: 0; stroke: #c0c0c0; stroke-opacity: 0.5; stroke-width: 1.5"/>
</g>
<g id="line2d_29">
<path d="M 759.068694 406.8 L 649.44 406.8 " clip-path="url(#pd2f023da11)" style="fill: none; stroke-dasharray: 1.5,2.475; stroke-dashoffset: 0; stroke: #c0c0c0; stroke-opacity: 0.5; stroke-width: 1.5"/>
</g>
<g id="line2d_30">
<path d="M 649.44 371.52 L 438.498 371.52 " clip-path="url(#pd2f023da11)" style="fill: none; stroke-dasharray: 1.5,2.475; stroke-dashoffset: 0; stroke: #c0c0c0; stroke-opacity: 0.5; stroke-width: 1.5"/>
</g>
<g id="line2d_31">
<path d="M 860.958 371.52 L 649.44 371.52 " clip-path="url(#pd2f023da11)" style="fill: none; stroke-dasharray: 1.5,2.475; stroke-dashoffset: 0; stroke: #c0c0c0; stroke-opacity: 0.5; stroke-width: 1.5"/>
</g>
<g id="line2d_32">
<path d="M 649.44 336.24 L 351.003669 336.24 " clip-path="url(#pd2f023da11)" style="fill: none; stroke-dasharray: 1.5,2.475; stroke-dashoffset: 0; stroke: #c0c0c0; stroke-opacity: 0.5; stroke-width: 1.5"/>
</g>
<g id="line2d_33">
<path d="M 948.452331 336.24 L 649.44 336.24 " clip-path="url(#pd2f023da11)" style="fill: none; stroke-dasharray: 1.5,2.475; stroke-dashoffset: 0; stroke: #c0c0c0; stroke-opacity: 0.5; stroke-width: 1.5"/>
</g>
<g id="line2d_34">
<path d="M 649.44 300.96 L 283.866908 300.96 " clip-path="url(#pd2f023da11)" style="fill: none; stroke-dasharray: 1.5,2.475; stroke-dashoffset: 0; stroke: #c0c0c0; stroke-opacity: 0.5; stroke-width: 1.5"/>
</g>
<g id="line2d_35">
<path d="M 1015.589092 300.96 L 649.44 300.96 " clip-path="url(#pd2f023da11)" style="fill: none; stroke-dasharray: 1.5,2.475; stroke-dashoffset: 0; stroke: #c0c0c0; stroke-opacity: 0.5; stroke-width: 1.5"/>
</g>
<g id="line2d_36">
<path d="M 649.44 265.68 L 241.662975 265.68 " clip-path="url(#pd2f023da11)" style="fill: none; stroke-dasharray: 1.5,2.475; stroke-dashoffset: 0; stroke: #c0c0c0; stroke-opacity: 0.5; stroke-width: 1.5"/>
</g>
<g id="line2d_37">
<path d="M 1057.793025 265.68 L 649.44 265.68 " clip-path="url(#pd2f023da11)" style="fill: none; stroke-dasharray: 1.5,2.475; stroke-dashoffset: 0; stroke: #c0c0c0; stroke-opacity: 0.5; stroke-width: 1.5"/>
</g>
<g id="line2d_38">
<path d="M 649.44 230.4 L 227.268 230.4 " clip-path="url(#pd2f023da11)" style="fill: none; stroke-dasharray: 1.5,2.475; stroke-dashoffset: 0; stroke: #c0c0c0; stroke-opacity: 0.5; stroke-width: 1.5"/>
</g>
<g id="line2d_39">
<path d="M 1072.188 230.4 L 649.44 230.4 " clip-path="url(#pd2f023da11)" style="fill: none; stroke-dasharray: 1.5,2.475; stroke-dashoffset: 0; stroke: #c0c0c0; stroke-opacity: 0.5; stroke-width: 1.5"/>
</g>
<g id="line2d_40">
<path d="M 649.44 195.12 L 241.662975 195.12 " clip-path="url(#pd2f023da11)" style="fill: none; stroke-dasharray: 1.5,2.475; stroke-dashoffset: 0; stroke: #c0c0c0; stroke-opacity: 0.5; stroke-width: 1.5"/>
</g>
<g id="line2d_41">
<path d="M 1057.793025 195.12 L 649.44 195.12 " clip-path="url(#pd2f023da11)" style="fill: none; stroke-dasharray: 1.5,2.475; stroke-dashoffset: 0; stroke: #c0c0c0; stroke-opacity: 0.5; stroke-width: 1.5"/>
</g>
<g id="line2d_42">
<path d="M 649.44 160.56 L 283.866908 160.56 " clip-path="url(#pd2f023da11)" style="fill: none; stroke-dasharray: 1.5,2.475; stroke-dashoffset: 0; stroke: #c0c0c0; stroke-opacity: 0.5; stroke-width: 1.5"/>
</g>
<g id="line2d_43">
<path d="M 1015.589092 160.56 L 649.44 160.56 " clip-path="url(#pd2f023da11)" style="fill: none; stroke-dasharray: 1.5,2.475; stroke-dashoffset: 0; stroke: #c0c0c0; stroke-opacity: 0.5; stroke-width: 1.5"/>
</g>
<g id="line2d_44">
<path d="M 649.44 125.28 L 351.003669 125.28 " clip-path="url(#pd2f023da11)" style="fill: none; stroke-dasharray: 1.5,2.475; stroke-dashoffset: 0; stroke: #c0c0c0; stroke-opacity: 0.5; stroke-width: 1.5"/>
</g>
<g id="line2d_45">
<path d="M 948.452331 125.28 L 649.44 125.28 " clip-path="url(#pd2f023da11)" style="fill: none; stroke-dasharray: 1.5,2.475; stroke-dashoffset: 0; stroke: #c0c0c0; stroke-opacity: 0.5; stroke-width: 1.5"/>
</g>
<g id="line2d_46">
<path d="M 649.44 90 L 438.498 90 " clip-path="url(#pd2f023da11)" style="fill: none; stroke-dasharray: 1.5,2.475; stroke-dashoffset: 0; stroke: #c0c0c0; stroke-opacity: 0.5; stroke-width: 1.5"/>
</g>
<g id="line2d_47">
<path d="M 860.958 90 L 649.44 90 " clip-path="url(#pd2f023da11)" style="fill: none; stroke-dasharray: 1.5,2.475; stroke-dashoffset: 0; stroke: #c0c0c0; stroke-opacity: 0.5; stroke-width: 1.5"/>
</g>
<g id="line2d_48">
<path d="M 649.44 54.72 L 540.387306 54.72 " clip-path="url(#pd2f023da11)" style="fill: none; stroke-dasharray: 1.5,2.475; stroke-dashoffset: 0; stroke: #c0c0c0; stroke-opacity: 0.5; stroke-width: 1.5"/>
</g>
<g id="line2d_49">
<path d="M 759.068694 54.72 L 649.44 54.72 " clip-path="url(#pd2f023da11)" style="fill: none; stroke-dasharray: 1.5,2.475; stroke-dashoffset: 0; stroke: #c0c0c0; stroke-opacity: 0.5; stroke-width: 1.5"/>
</g>
<g id="line2d_50">
<path d="M 649.44 19.44 L 649.728 19.44 " clip-path="url(#pd2f023da11)" style="fill: none; stroke-dasharray: 1.5,2.475; stroke-dashoffset: 0; stroke: #c0c0c0; stroke-opacity: 0.5; stroke-width: 1.5"/>
</g>
<g id="line2d_51">
<path d="M 649.728 19.44 L 649.44 19.44 " clip-path="url(#pd2f023da11)" style="fill: none; stroke-dasharray: 1.5,2.475; stroke-dashoffset: 0; stroke: #c0c0c0; stroke-opacity: 0.5; stroke-width: 1.5"/>
</g>
<g id="line2d_52">
<path d="M 582.425001 212.243947 L 582.652889 211.235423 L 582.884549 210.226925 L 583.119966 209.218455 L 583.359126 208.210014 L 583.602016 207.201605 L 583.848622 206.193227 L 584.098929 205.184884 L 584.352923 204.176577 L 584.610589 203.168306 L 584.871911 202.160074 L 585.136875 201.151882 L 585.405465 200.143732 L 585.677665 199.135626 L 585.95346 198.127565 L 586.232833 197.11955 L 586.515767 196.111584 L 586.802247 195.103668 L 587.092255 194.095804 L 587.385775 193.087994 L 587.682788 192.08024 L 587.983278 191.072542 L 588.287227 190.064904 L 588.594617 189.057327 L 588.90543 188.049813 L 589.219647 187.042364 L 589.537249 186.034981 L 589.858219 185.027668 L 590.182537 184.020425 L 590.510184 183.013256 L 590.84114 182.006162 L 591.175386 180.999145 L 591.512901 179.992208 L 591.853667 178.985352 L 592.197662 177.978581 L 592.544866 176.971896 L 592.895259 175.9653 L 593.24882 174.958796 L 593.605526 173.952385 L 593.965358 172.94607 L 594.328294 171.939855 L 594.694312 170.933741 L 595.063389 169.927731 L 595.435505 168.921829 L 595.810637 167.916036 L 596.188761 166.910357 L 596.569856 165.904793 L 596.953899 164.899348 L 597.340866 163.894025 L 597.730734 162.888828 L 598.12348 161.883759 L 598.519079 160.878823 L 598.917509 159.874021 L 599.318745 158.869359 L 599.722763 157.864839 L 600.129537 156.860466 L 600.539045 155.856243 L 600.95126 154.852174 L 601.366158 153.848263 L 601.783713 152.844514 L 602.2039 151.840933 L 602.626694 150.837522 L 603.052068 149.834287 L 603.479997 148.831232 L 603.910454 147.828362 L 604.343413 146.825682 L 604.778848 145.823197 L 605.216731 144.820913 L 605.657036 143.818834 L 606.099736 142.816966 L 606.544803 141.815316 L 606.99221 140.813888 L 607.441929 139.812689 L 607.893932 138.811726 L 608.348192 137.811004 L 608.804679 136.810531 L 609.263366 135.810314 L 609.724223 134.810358 L 610.187223 133.810673 L 610.652336 132.811266 L 611.119532 131.812144 L 611.588783 130.813316 L 612.060059 129.81479 L 612.533331 128.816575 L 613.008567 127.818681 L 613.485739 126.821116 L 613.964815 125.82389 L 614.445765 124.827013 L 614.92856 123.830496 L 615.413166 122.83435 L 615.899555 121.838587 L 616.387694 120.843217 L 616.877551 119.848253 L 617.369096 118.853707 L 617.862297 117.859593 L 618.35712 116.865925 L 618.853535 115.872717 L 619.351508 114.879982 L 619.851008 113.887738 L 620.352 112.896 " clip-path="url(#pd2f023da11)" style="fill: none; stroke-dasharray: 1,1.65; stroke-dashoffset: 0; stroke: #ff1d00"/>
</g>
<g id="line2d_53">
<path d="M 582.425001 212.243947 " clip-path="url(#pd2f023da11)" style="fill: none; stroke: #ff0000; stroke-width: 1.5; stroke-linecap: square"/>
<g clip-path="url(#pd2f023da11)">
<path d="M -2.5 0 L 2.5 0 M 0 2.5 L 0 -2.5" transform="translate(582.425001 212.243947)" style="fill: #ff0000; stroke: #ff0000"/>
</g>
</g>
<g id="line2d_54">
<path d="M 584.824967 205.84144 L 586.395947 205.108573 L 587.968508 204.378943 L 589.542575 203.652651 L 591.118077 202.929801 L 592.694942 202.210494 L 594.273099 201.494834 L 595.852478 200.782924 L 597.433011 200.074869 L 599.01463 199.370772 L 600.597269 198.670737 L 602.180863 197.974871 L 603.765348 197.283277 L 605.350663 196.596061 L 606.936747 195.91333 L 608.523542 195.23519 L 610.110989 194.561747 L 611.699034 193.893108 L 613.287624 193.22938 L 614.876707 192.57067 L 616.466234 191.917087 L 618.056157 191.268739 L 619.646432 190.625733 L 621.237015 189.988178 L 622.827866 189.356183 L 624.418947 188.729856 L 626.010222 188.109307 L 627.601658 187.494644 L 629.193224 186.885978 L 630.784893 186.283416 L 632.376638 185.687069 L 633.968439 185.097046 L 635.560274 184.513457 L 637.152128 183.93641 L 638.743985 183.366016 L 640.335836 182.802383 L 641.927672 182.24562 L 643.519487 181.695836 L 645.111281 181.15314 L 646.703054 180.61764 L 648.294811 180.089445 L 649.886559 179.568661 L 651.478308 179.055397 L 653.070072 178.549759 L 654.661868 178.051853 L 656.253717 177.561785 L 657.845641 177.07966 L 659.437667 176.605583 L 661.029824 176.139658 L 662.622146 175.681987 L 664.214669 175.232673 L 665.807431 174.791817 L 667.400475 174.359519 L 668.993846 173.935878 L 670.587592 173.520993 L 672.181765 173.114961 L 673.776419 172.717877 L 675.371611 172.329836 L 676.967401 171.950931 L 678.563852 171.581253 L 680.161029 171.220894 L 681.758999 170.869942 L 683.357834 170.528484 L 684.957607 170.196604 L 686.558392 169.874388 L 688.160266 169.561917 L 689.763311 169.25927 L 691.367606 168.966525 L 692.973235 168.683759 L 694.580284 168.411046 L 696.18884 168.148456 L 697.79899 167.89606 L 699.410824 167.653924 L 701.024434 167.422114 L 702.63991 167.200691 L 704.257346 166.989716 L 705.876835 166.789246 L 707.498472 166.599335 L 709.12235 166.420037 L 710.748565 166.251399 L 712.377211 166.09347 L 714.008383 165.946292 L 715.642176 165.809907 L 717.278683 165.684354 L 718.917997 165.569666 L 720.560212 165.465878 L 722.205419 165.373017 L 723.853708 165.29111 L 725.505167 165.220181 L 727.159885 165.160249 L 728.817947 165.111332 L 730.479436 165.073444 L 732.144434 165.046594 L 733.81302 165.030792 L 735.485272 165.026042 L 737.161263 165.032344 L 738.841064 165.049698 L 740.524745 165.078098 L 742.212369 165.117535 L 743.904 165.168 " clip-path="url(#pd2f023da11)" style="fill: none; stroke-dasharray: 1,1.65; stroke-dashoffset: 0; stroke: #ff1d00"/>
</g>
<g id="line2d_55">
<path d="M 584.824967 205.84144 " clip-path="url(#pd2f023da11)" style="fill: none; stroke: #ff0000; stroke-width: 1.5; stroke-linecap: square"/>
<g clip-path="url(#pd2f023da11)">
<path d="M -2.5 0 L 2.5 0 M 0 2.5 L 0 -2.5" transform="translate(584.824967 205.84144)" style="fill: #ff0000; stroke: #ff0000"/>
</g>
</g>
<g id="line2d_56">
<path d="M 531.994728 317.847686 L 531.986003 316.558119 L 531.985626 315.26469 L 531.993794 313.967531 L 532.010695 312.666768 L 532.036507 311.36252 L 532.071401 310.054905 L 532.115539 308.744037 L 532.169074 307.430023 L 532.232151 306.11297 L 532.30491 304.79298 L 532.387482 303.47015 L 532.479992 302.144577 L 532.582556 300.816352 L 532.695287 299.485564 L 532.81829 298.152301 L 532.951663 296.816644 L 533.0955 295.478677 L 533.249888 294.138477 L 533.41491 292.79612 L 533.590642 291.45168 L 533.777156 290.10523 L 533.974518 288.756838 L 534.182791 287.406573 L 534.402031 286.054501 L 534.63229 284.700685 L 534.873618 283.345188 L 535.126057 281.98807 L 535.389647 280.62939 L 535.664423 279.269206 L 535.950417 277.907574 L 536.247655 276.544549 L 536.556162 275.180184 L 536.875956 273.814531 L 537.207055 272.447641 L 537.54947 271.079563 L 537.90321 269.710347 L 538.268282 268.34004 L 538.644687 266.968689 L 539.032424 265.596339 L 539.431489 264.223035 L 539.841874 262.848821 L 540.263569 261.47374 L 540.69656 260.097835 L 541.140831 258.721148 L 541.596361 257.343718 L 542.063129 255.965587 L 542.541109 254.586794 L 543.030273 253.207379 L 543.530591 251.82738 L 544.042028 250.446835 L 544.564549 249.065782 L 545.098115 247.684258 L 545.642684 246.3023 L 546.198214 244.919944 L 546.764657 243.537227 L 547.341964 242.154185 L 547.930085 240.770852 L 548.528966 239.387265 L 549.138551 238.003458 L 549.758781 236.619467 L 550.389597 235.235326 L 551.030935 233.851069 L 551.682731 232.466732 L 552.344917 231.082349 L 553.017424 229.697955 L 553.700181 228.313583 L 554.393114 226.929269 L 555.096147 225.545046 L 555.809203 224.16095 L 556.532202 222.777015 L 557.265063 221.393276 L 558.007702 220.009768 L 558.760032 218.626526 L 559.521968 217.243586 L 560.293419 215.860983 L 561.074295 214.478753 L 561.864502 213.096932 L 562.663945 211.715558 L 563.472528 210.334667 L 564.290153 208.954296 L 565.116719 207.574483 L 565.952125 206.195266 L 566.796266 204.816685 L 567.649038 203.438779 L 568.510335 202.061587 L 569.380046 200.68515 L 570.258064 199.309509 L 571.144275 197.934707 L 572.038567 196.560785 L 572.940826 195.187787 L 573.850934 193.815758 L 574.768775 192.444742 L 575.69423 191.074786 L 576.627177 189.705936 L 577.567496 188.338241 L 578.515063 186.971749 L 579.469753 185.60651 L 580.431441 184.242576 L 581.4 182.88 " clip-path="url(#pd2f023da11)" style="fill: none; stroke-dasharray: 1,1.65; stroke-dashoffset: 0; stroke: #e312ff"/>
</g>
<g id="line2d_57">
<path d="M 531.994728 317.847686 " clip-path="url(#pd2f023da11)" style="fill: none; stroke: #ff0000; stroke-width: 1.5; stroke-linecap: square"/>
<g clip-path="url(#pd2f023da11)">
<path d="M -2.5 0 L 2.5 0 M 0 2.5 L 0 -2.5" transform="translate(531.994728 317.847686)" style="fill: #ff0000; stroke: #ff0000"/>
</g>
</g>
<g id="line2d_58">
<path d="M 441.210537 335.107152 L 439.755251 332.685641 L 438.319969 330.231039 L 436.911678 327.745602 L 435.536853 325.231427 L 434.201488 322.690458 L 432.911138 320.124506 L 431.670949 317.535251 L 430.485685 314.924257 L 429.35976 312.292982 L 428.297259 309.642781 L 427.301962 306.97492 L 426.377363 304.290581 L 425.52669 301.590868 L 424.752922 298.876815 L 424.058803 296.14939 L 423.446855 293.409502 L 422.919392 290.658006 L 422.478532 287.895706 L 422.126205 285.123361 L 421.864163 282.341688 L 421.69399 279.551365 L 421.617108 276.753035 L 421.634782 273.94731 L 421.748132 271.134772 L 421.958132 268.315978 L 422.265621 265.49146 L 422.671303 262.661728 L 423.175755 259.827273 L 423.77943 256.988569 L 424.482657 254.146074 L 425.285651 251.300231 L 426.18851 248.451474 L 427.191221 245.600225 L 428.293663 242.746895 L 429.495605 239.891891 L 430.796715 237.035613 L 432.196556 234.178455 L 433.694591 231.320811 L 435.290183 228.463071 L 436.982599 225.605625 L 438.771008 222.748864 L 440.654486 219.893182 L 442.632015 217.038976 L 444.702484 214.186649 L 446.864691 211.33661 L 449.117343 208.489277 L 451.45906 205.645076 L 453.888369 202.804445 L 456.403714 199.967836 L 459.003447 197.135714 L 461.685835 194.308562 L 464.44906 191.486879 L 467.291217 188.671188 L 470.210313 185.862031 L 473.204273 183.059979 L 476.270936 180.265628 L 479.408054 177.479605 L 482.613295 174.702572 L 485.884244 171.935225 L 489.218398 169.178302 L 492.613171 166.432585 L 496.065889 163.698903 L 499.573795 160.978136 L 503.134046 158.271225 L 506.743714 155.579169 L 510.399783 152.903038 L 514.099153 150.243973 L 517.83864 147.603199 L 521.614974 144.982025 L 525.4248 142.381859 L 529.264683 139.80421 L 533.131104 137.2507 L 537.020468 134.723074 L 540.929105 132.223209 L 544.853272 129.753126 L 548.789163 127.315 L 552.732914 124.911172 L 556.680613 122.544164 L 560.628312 120.216689 L 564.572038 117.931663 L 568.507819 115.69222 L 572.431696 113.501725 L 576.339756 111.363778 L 580.228161 109.282231 L 584.093184 107.261191 L 587.931251 105.305021 L 591.738992 103.418341 L 595.513296 101.606021 L 599.251372 99.873168 L 602.950815 98.225098 L 606.60968 96.66731 L 610.226551 95.205436 L 613.80062 93.845191 L 617.33175 92.592298 L 620.820541 91.452412 L 624.26837 90.43102 L 627.677425 89.533343 L 631.050705 88.76422 L 634.392 88.128 " clip-path="url(#pd2f023da11)" style="fill: none; stroke-dasharray: 1,1.65; stroke-dashoffset: 0; stroke: #666666; stroke-opacity: 0.7"/>
</g>
<g id="line2d_59">
<path d="M 318.205288 282.706774 L 319.10733 280.686991 L 320.061732 278.643134 L 321.072338 276.57654 L 322.142734 274.488513 L 323.276251 272.380319 L 324.47597 270.253191 L 325.744727 268.108328 L 327.085118 265.946901 L 328.499503 263.770049 L 329.990012 261.578884 L 331.558554 259.374493 L 333.206814 257.15794 L 334.936264 254.930262 L 336.748169 252.692481 L 338.643585 250.445597 L 340.623372 248.190593 L 342.688193 245.928438 L 344.83852 243.660086 L 347.074641 241.386481 L 349.39666 239.108555 L 351.804506 236.827233 L 354.297934 234.543434 L 356.876528 232.258071 L 359.539711 229.972055 L 362.286743 227.686295 L 365.116726 225.401701 L 368.02861 223.119185 L 371.021197 220.839663 L 374.093141 218.564057 L 377.242957 216.293296 L 380.469022 214.028318 L 383.769576 211.770074 L 387.142732 209.519524 L 390.586476 207.277646 L 394.098673 205.045433 L 397.677067 202.823896 L 401.319291 200.614065 L 405.022866 198.416993 L 408.78521 196.233756 L 412.603638 194.065455 L 416.475372 191.913218 L 420.397542 189.778201 L 424.367192 187.661589 L 428.381286 185.564603 L 432.436714 183.488493 L 436.530301 181.434546 L 440.658808 179.404084 L 444.818942 177.398468 L 449.007365 175.419096 L 453.220698 173.467406 L 457.455535 171.544877 L 461.708446 169.653027 L 465.975991 167.793416 L 470.254728 165.967646 L 474.541225 164.177357 L 478.83207 162.42423 L 483.123884 160.709984 L 487.413334 159.036374 L 491.697146 157.405192 L 495.972118 155.818257 L 500.235135 154.277421 L 504.483183 152.784555 L 508.713366 151.341553 L 512.922918 149.95032 L 517.109223 148.612767 L 521.269825 147.330809 L 525.402446 146.106349 L 529.505001 144.941274 L 533.57561 143.837447 L 537.61261 142.796691 L 541.61457 141.820787 L 545.580296 140.911454 L 549.508843 140.070343 L 553.39952 139.299025 L 557.251892 138.598976 L 561.065783 137.97157 L 564.841272 137.418063 L 568.578692 136.939586 L 572.278619 136.537133 L 575.941865 136.21155 L 579.56946 135.963534 L 583.162644 135.793618 L 586.722838 135.70217 L 590.251635 135.689389 L 593.750768 135.755303 L 597.222092 135.899769 L 600.667557 136.122473 L 604.089181 136.422934 L 607.489028 136.800509 L 610.869182 137.2544 L 614.231717 137.783658 L 617.578682 138.387197 L 620.912072 139.0638 L 624.233813 139.812131 L 627.545738 140.630744 L 630.849577 141.518099 L 634.146939 142.47257 L 637.439301 143.492457 L 640.728 144.576 " clip-path="url(#pd2f023da11)" style="fill: none; stroke-dasharray: 1,1.65; stroke-dashoffset: 0; stroke: #666666; stroke-opacity: 0.7"/>
</g>
<g id="line2d_60">
<path d="M 319.171234 278.080027 L 321.208818 276.70897 L 323.256817 275.309884 L 325.318285 273.883884 L 327.396143 272.432077 L 329.493181 270.955566 L 331.61205 269.455441 L 333.755267 267.932786 L 335.925204 266.388673 L 338.124096 264.824166 L 340.354033 263.240317 L 342.616964 261.638168 L 344.914696 260.018752 L 347.248894 258.383089 L 349.62108 256.732191 L 352.032639 255.067058 L 354.484814 253.388681 L 356.978713 251.698042 L 359.515308 249.996115 L 362.095436 248.283862 L 364.719803 246.562241 L 367.388987 244.832201 L 370.103437 243.094685 L 372.863479 241.350627 L 375.669317 239.60096 L 378.521035 237.84661 L 381.418602 236.088499 L 384.361873 234.327546 L 387.350595 232.564667 L 390.384405 230.800779 L 393.462838 229.036795 L 396.585329 227.27363 L 399.751215 225.512198 L 402.959739 223.753415 L 406.210057 221.998201 L 409.501234 220.247476 L 412.832257 218.502166 L 416.202032 216.763202 L 419.60939 215.031518 L 423.053091 213.308055 L 426.531829 211.593761 L 430.044236 209.889591 L 433.588884 208.196507 L 437.164293 206.515481 L 440.768931 204.847491 L 444.401224 203.193528 L 448.059556 201.554591 L 451.742278 199.931687 L 455.447707 198.325836 L 459.17414 196.738067 L 462.919848 195.169421 L 466.683094 193.620948 L 470.462125 192.09371 L 474.25519 190.588775 L 478.060537 189.107227 L 481.876422 187.650155 L 485.701115 186.218657 L 489.532904 184.81384 L 493.370104 183.436818 L 497.211061 182.088711 L 501.054156 180.770644 L 504.897816 179.483743 L 508.740514 178.229138 L 512.580782 177.007958 L 516.417207 175.82133 L 520.248447 174.670377 L 524.073229 173.556216 L 527.890357 172.479952 L 531.698716 171.442682 L 535.497278 170.445485 L 539.285103 169.489425 L 543.061349 168.575542 L 546.825266 167.704855 L 550.576208 166.878352 L 554.313627 166.096991 L 558.037081 165.361697 L 561.746232 164.673354 L 565.440845 164.032804 L 569.120789 163.440845 L 572.786036 162.898225 L 576.436656 162.405639 L 580.07282 161.963725 L 583.69479 161.573066 L 587.302915 161.234178 L 590.897632 160.947516 L 594.479454 160.713466 L 598.048965 160.532348 L 601.606815 160.404408 L 605.153709 160.329822 L 608.690403 160.308692 L 612.217691 160.341048 L 615.736401 160.426844 L 619.247382 160.565964 L 622.751499 160.758216 L 626.249621 161.003338 L 629.742613 161.300997 L 633.231329 161.650792 L 636.716602 162.052256 L 640.199236 162.504856 L 643.68 163.008 " clip-path="url(#pd2f023da11)" style="fill: none; stroke-dasharray: 1,1.65; stroke-dashoffset: 0; stroke: #666666; stroke-opacity: 0.7"/>
</g>
<g id="line2d_61">
<path d="M 317.797193 273.469268 L 320.379193 272.425699 L 322.959652 271.354291 L 325.540915 270.255941 L 328.125261 269.131551 L 330.714893 267.982029 L 333.311939 266.808284 L 335.918444 265.611232 L 338.536368 264.391788 L 341.167582 263.150868 L 343.813867 261.889389 L 346.476908 260.608269 L 349.158298 259.308421 L 351.85953 257.990761 L 354.581999 256.6562 L 357.327003 255.305648 L 360.095739 253.94001 L 362.889304 252.560192 L 365.708694 251.167094 L 368.554808 249.761613 L 371.428444 248.344644 L 374.330302 246.917079 L 377.260985 245.479806 L 380.220999 244.03371 L 383.210758 242.579673 L 386.230578 241.118576 L 389.280689 239.651296 L 392.361227 238.178707 L 395.472242 236.701683 L 398.6137 235.221096 L 401.785482 233.737816 L 404.987388 232.25271 L 408.219143 230.766649 L 411.480393 229.2805 L 414.770713 227.795131 L 418.089608 226.311411 L 421.436516 224.830207 L 424.810812 223.352391 L 428.211809 221.878832 L 431.638763 220.410405 L 435.090877 218.947984 L 438.567303 217.492445 L 442.067144 216.044668 L 445.589461 214.605535 L 449.133277 213.17593 L 452.697574 211.756741 L 456.281306 210.348859 L 459.883395 208.953178 L 463.502741 207.570595 L 467.138222 206.20201 L 470.788699 204.848326 L 474.453021 203.510449 L 478.130026 202.18929 L 481.818552 200.885758 L 485.517432 199.600767 L 489.225506 198.335232 L 492.941619 197.090071 L 496.664631 195.866199 L 500.393416 194.664533 L 504.12687 193.485989 L 507.863911 192.331483 L 511.603486 191.201924 L 515.344576 190.098223 L 519.086196 189.021281 L 522.8274 187.971995 L 526.567285 186.951257 L 530.304997 185.959947 L 534.039729 184.998937 L 537.770726 184.069084 L 541.49729 183.171236 L 545.218778 182.306223 L 548.93461 181.474857 L 552.644264 180.677933 L 556.347284 179.916226 L 560.043277 179.190486 L 563.731913 178.501438 L 567.412932 177.849781 L 571.086136 177.236187 L 574.751393 176.661293 L 578.408635 176.125707 L 582.057859 175.629999 L 585.69912 175.174704 L 589.332537 174.760318 L 592.958282 174.387296 L 596.576583 174.056053 L 600.187718 173.766958 L 603.792014 173.520336 L 607.389839 173.316466 L 610.981601 173.15558 L 614.567743 173.037861 L 618.148737 172.963445 L 621.725079 172.932416 L 625.297287 172.944811 L 628.865891 173.000614 L 632.43143 173.099763 L 635.994448 173.242143 L 639.555487 173.427592 L 643.115079 173.655898 L 646.673749 173.926802 L 650.232 174.24 " clip-path="url(#pd2f023da11)" style="fill: none; stroke-dasharray: 1,1.65; stroke-dashoffset: 0; stroke: #666666; stroke-opacity: 0.7"/>
</g>
<g id="line2d_62">
<path d="M 554.320531 320.126691 L 555.487981 318.315264 L 556.658785 316.477697 L 557.834414 314.615237 L 559.016219 312.729085 L 560.205436 310.820386 L 561.403196 308.89024 L 562.610524 306.939698 L 563.828353 304.969765 L 565.057521 302.981404 L 566.298782 300.975537 L 567.552808 298.953046 L 568.820194 296.914774 L 570.101463 294.86153 L 571.39707 292.794088 L 572.707403 290.713191 L 574.032793 288.61955 L 575.373511 286.513849 L 576.729774 284.396743 L 578.101749 282.268863 L 579.489554 280.130815 L 580.893261 277.983182 L 582.3129 275.826527 L 583.748459 273.661392 L 585.199891 271.488301 L 586.667109 269.307759 L 588.149994 267.120258 L 589.648395 264.926272 L 591.162129 262.726263 L 592.690986 260.520677 L 594.234729 258.309952 L 595.793095 256.094512 L 597.365796 253.874773 L 598.952525 251.65114 L 600.55295 249.424013 L 602.166722 247.193781 L 603.793473 244.960828 L 605.432816 242.725533 L 607.08435 240.48827 L 608.747658 238.249408 L 610.42231 236.009313 L 612.107863 233.768349 L 613.803863 231.526878 L 615.509844 229.28526 L 617.225331 227.043857 L 618.949843 224.803028 L 620.682888 222.563136 L 622.42397 220.324546 L 624.172587 218.087623 L 625.928234 215.852738 L 627.6904 213.620266 L 629.458574 211.390586 L 631.232244 209.164083 L 633.010899 206.94115 L 634.794026 204.722185 L 636.581117 202.507596 L 638.371667 200.297801 L 640.165176 198.093226 L 641.961151 195.89431 L 643.759104 193.701503 L 645.558558 191.515269 L 647.359047 189.336086 L 649.160115 187.164446 L 650.96132 185.000859 L 652.762236 182.845852 L 654.562454 180.699971 L 656.361584 178.563782 L 658.159256 176.437873 L 659.955125 174.322855 L 661.74887 172.219362 L 663.540198 170.128055 L 665.328846 168.049623 L 667.114586 165.984783 L 668.897224 163.934283 L 670.676607 161.898905 L 672.452622 159.879462 L 674.225206 157.876805 L 675.994342 155.891825 L 677.760068 153.92545 L 679.52248 151.97865 L 681.281738 150.052439 L 683.038067 148.147879 L 684.791766 146.266075 L 686.54321 144.408186 L 688.292859 142.575417 L 690.04126 140.769031 L 691.789056 138.990341 L 693.536991 137.240717 L 695.285918 135.521586 L 697.036801 133.834431 L 698.790727 132.180792 L 700.548909 130.562269 L 702.312696 128.980517 L 704.083573 127.437247 L 705.863175 125.934224 L 707.653285 124.473266 L 709.455842 123.056238 L 711.272946 121.685047 L 713.106857 120.361641 L 714.96 119.088 " clip-path="url(#pd2f023da11)" style="fill: none; stroke-dasharray: 1,1.65; stroke-dashoffset: 0; stroke: #666666; stroke-opacity: 0.7"/>
</g>
<g id="line2d_63">
<path d="M 610.923944 254.848057 L 613.50406 253.799866 L 616.085974 252.742716 L 618.669629 251.677044 L 621.254954 250.60329 L 623.841864 249.521891 L 626.430262 248.433282 L 629.020039 247.337899 L 631.611075 246.236177 L 634.203241 245.128548 L 636.796396 244.015445 L 639.390392 242.897299 L 641.985073 241.774542 L 644.580275 240.647602 L 647.175829 239.516909 L 649.771559 238.382891 L 652.367285 237.245976 L 654.962825 236.10659 L 657.557992 234.965161 L 660.152596 233.822115 L 662.746448 232.677877 L 665.339358 231.532873 L 667.931137 230.387529 L 670.521595 229.242269 L 673.110546 228.09752 L 675.697807 226.953707 L 678.283199 225.811254 L 680.866547 224.67059 L 683.447681 223.532139 L 686.02644 222.396328 L 688.602667 221.263585 L 691.176215 220.134338 L 693.746945 219.009015 L 696.314728 217.888046 L 698.879446 216.771861 L 701.44099 215.66089 L 703.999266 214.555565 L 706.55419 213.45632 L 709.105694 212.363588 L 711.653721 211.277803 L 714.198231 210.199401 L 716.739199 209.128819 L 719.276617 208.066494 L 721.810492 207.012865 L 724.340849 205.968372 L 726.867732 204.933453 L 729.391202 203.908551 L 731.911339 202.894107 L 734.428243 201.890562 L 736.942034 200.898361 L 739.452852 199.917945 L 741.960856 198.949757 L 744.466228 197.994242 L 746.969169 197.051841 L 749.469903 196.122997 L 751.968674 195.208152 L 754.465748 194.307748 L 756.961412 193.422222 L 759.455975 192.552015 L 761.949765 191.697562 L 764.443134 190.859298 L 766.936453 190.037655 L 769.430113 189.233061 L 771.924526 188.445943 L 774.420121 187.676723 L 776.917349 186.925818 L 779.416678 186.193643 L 781.918591 185.480605 L 784.42359 184.787107 L 786.932193 184.113547 L 789.444929 183.460314 L 791.962343 182.827791 L 794.484993 182.216354 L 797.013444 181.62637 L 799.548275 181.058197 L 802.090069 180.512185 L 804.639417 179.988672 L 807.196916 179.487987 L 809.763163 179.010446 L 812.338759 178.556357 L 814.924303 178.126012 L 817.520391 177.719691 L 820.127616 177.337662 L 822.746563 176.980177 L 825.377809 176.647477 L 828.02192 176.339783 L 830.67945 176.057306 L 833.350938 175.800236 L 836.036904 175.568751 L 838.737852 175.363009 L 841.454261 175.183153 L 844.186591 175.029308 L 846.935274 174.901581 L 849.700713 174.800062 L 852.483286 174.724822 L 855.283335 174.675912 L 858.101173 174.653369 L 860.937076 174.657207 L 863.791285 174.687425 L 866.664 174.744 " clip-path="url(#pd2f023da11)" style="fill: none; stroke-dasharray: 1,1.65; stroke-dashoffset: 0; stroke: #666666; stroke-opacity: 0.7"/>
</g>
<g id="line2d_64">
<path d="M 588.801445 194.6722 L 586.568483 194.818203 L 584.335861 195.253557 L 582.141051 195.970375 L 580.021867 196.955747 L 578.015739 198.192078 L 576.158921 199.657524 L 574.485647 201.326512 L 573.027283 203.170297 L 571.811507 205.157556 L 570.861565 207.254973 L 570.195631 209.427818 L 569.826311 211.640506 L 569.760322 213.857133 L 569.998333 216.041984 L 570.535003 218.160032 L 571.359192 220.177412 L 572.454328 222.061894 L 573.798926 223.78334 L 575.367202 225.314151 L 577.129776 226.629704 L 579.054413 227.708753 L 581.106781 228.533806 L 583.251185 229.091439 L 585.451263 229.372553 L 587.670623 229.372553 L 589.873419 229.091439 L 592.024849 228.533806 L 594.091597 227.708753 L 596.042216 226.629704 L 597.847466 225.314151 L 599.48061 223.78334 L 600.917686 222.061894 L 602.137748 220.177412 L 603.123086 218.160032 L 603.859413 216.041984 L 604.336025 213.857133 L 604.545924 211.640506 L 604.485898 209.427818 L 604.156563 207.254973 L 603.562354 205.157556 L 602.711478 203.170297 L 601.615834 201.326512 L 600.290891 199.657524 L 598.755547 198.192078 L 597.031966 196.955747 L 595.145385 195.970375 L 593.123907 195.253557 L 590.998249 194.818203 L 588.801445 194.6722 " clip-path="url(#pd2f023da11)" style="fill: none; stroke: #ff1d00; stroke-width: 1.5; stroke-linecap: square"/>
</g>
<g id="line2d_65">
<path d="M 541.57826 309.0082 L 539.431788 309.137174 L 537.457464 309.522464 L 535.689476 310.159189 L 534.160354 311.039251 L 532.900316 312.151384 L 531.936548 313.481225 L 531.292448 315.011398 L 530.986836 316.721611 L 531.033182 318.588762 L 531.438854 320.587066 L 532.204454 322.688188 L 533.323257 324.861414 L 534.780824 327.073845 L 536.554817 329.290659 L 538.615079 331.475447 L 540.924012 333.590643 L 543.437298 335.598095 L 546.104962 337.459776 L 548.872781 339.138663 L 551.68398 340.599769 L 554.481123 341.811295 L 557.208083 342.745845 L 559.811925 343.381609 L 562.244547 343.703392 L 564.463939 343.703392 L 566.434988 343.381609 L 568.129797 342.745845 L 569.527581 341.811295 L 570.614239 340.599769 L 571.381726 339.138663 L 571.827348 337.459776 L 571.953078 335.598095 L 571.764937 333.590643 L 571.272496 331.475447 L 570.488465 329.290659 L 569.428386 327.073845 L 568.110388 324.861414 L 566.55499 322.688188 L 564.784941 320.587066 L 562.825072 318.588762 L 560.70215 316.721611 L 558.444739 315.011398 L 556.083055 313.481225 L 553.648798 312.151384 L 551.174986 311.039251 L 548.695747 310.159189 L 546.246089 309.522464 L 543.861627 309.137174 L 541.57826 309.0082 " clip-path="url(#pd2f023da11)" style="fill: none; stroke: #e312ff; stroke-width: 1.5; stroke-linecap: square"/>
</g>
<g id="text_1">
<g style="fill: #808080" transform="translate(640.938 450.045)">
<text x="0" y="-0.796875" style="font-size: 7px; font-family: 'DejaVu Sans', 'Liberation Sans', sans-serif; fill: #808080; font-kerning: none">−90<tspan x="15.794092" y="-3.9" style="font-size: 5.3px; font-family: 'DejaVu Sans', 'Liberation Sans', sans-serif; fill: #808080">∘</tspan></text>
</g>
</g>
<g id="text_2">
<g style="fill: #808080" transform="translate(640.938 379.635)">
<text x="0" y="-0.796875" style="font-size: 7px; font-family: 'DejaVu Sans', 'Liberation Sans', sans-serif; fill: #808080; font-kerning: none">−60<tspan x="15.794092" y="-3.9" style="font-size: 5.3px; font-family: 'DejaVu Sans', 'Liberation Sans', sans-serif; fill: #808080">∘</tspan></text>
</g>
</g>
<g id="text_3">
<g style="fill: #808080" transform="translate(640.938 309.225)">
<text x="0" y="-0.796875" style="font-size: 7px; font-family: 'DejaVu Sans', 'Liberation Sans', sans-serif; fill: #808080; font-kerning: none">−30<tspan x="15.794092" y="-3.9" style="font-size: 5.3px; font-family: 'DejaVu Sans', 'Liberation Sans', sans-serif; fill: #808080">∘</tspan></text>
</g>
</g>
<g id="text_4">
<g style="fill: #808080" transform="translate(642.623 238.095)">
<text x="0" y="-0.796875" style="font-size: 7px; font-family: 'DejaVu Sans', 'Liberation Sans', sans-serif; fill: #808080; font-kerning: none">+0<tspan x="11.340479" y="-3.9" style="font-size: 5.3px; font-family: 'DejaVu Sans', 'Liberation Sans', sans-serif; fill: #808080">∘</tspan></text>
</g>
</g>
<g id="text_5">
<g style="fill: #808080" transform="translate(640.938 159.470)">
<text x="0" y="-0.796875" style="font-size: 7px; font-family: 'DejaVu Sans', 'Liberation Sans', sans-serif; fill: #808080; font-kerning: none">+30<tspan x="15.794092" y="-3.9" style="font-size: 5.3px; font-family: 'DejaVu Sans', 'Liberation Sans', sans-serif; fill: #808080">∘</tspan></text>
</g>
</g>
<g id="text_6">
<g style="fill: #808080" transform="translate(640.938 89.060)">
<text x="0" y="-0.796875" style="font-size: 7px; font-family: 'DejaVu Sans', 'Liberation Sans', sans-serif; fill: #808080; font-kerning: none">+60<tspan x="15.794092" y="-3.9" style="font-size: 5.3px; font-family: 'DejaVu Sans', 'Liberation Sans', sans-serif; fill: #808080">∘</tspan></text>
</g>
</g>
<g id="text_7">
<g style="fill: #808080" transform="translate(640.938 18.650)">
<text x="0" y="-0.796875" style="font-size: 7px; font-family: 'DejaVu Sans', 'Liberation Sans', sans-serif; fill: #808080; font-kerning: none">+90<tspan x="15.794092" y="-3.9" style="font-size: 5.3px; font-family: 'DejaVu Sans', 'Liberation Sans', sans-serif; fill: #808080">∘</tspan></text>
</g>
</g>
<g id="text_8">
<g style="fill: #808080" transform="translate(642.623 238.095)">
<text x="0" y="-0.796875" style="font-size: 7px; font-family: 'DejaVu Sans', 'Liberation Sans', sans-serif; fill: #808080; font-kerning: none">+0<tspan x="11.340479" y="-3.9" style="font-size: 5.3px; font-family: 'DejaVu Sans', 'Liberation Sans', sans-serif; fill: #808080">∘</tspan></text>
</g>
</g>
<g id="text_9">
<g style="fill: #808080" transform="translate(570.008 238.095)">
<text x="0" y="-0.796875" style="font-size: 7px; font-family: 'DejaVu Sans', 'Liberation Sans', sans-serif; fill: #808080; font-kerning: none">+30<tspan x="15.794092" y="-3.9" style="font-size: 5.3px; font-family: 'DejaVu Sans', 'Liberation Sans', sans-serif; fill: #808080">∘</tspan></text>
</g>
</g>
<g id="text_10">
<g style="fill: #808080" transform="translate(499.598 238.095)">
<text x="0" y="-0.796875" style="font-size: 7px; font-family: 'DejaVu Sans', 'Liberation Sans', sans-serif; fill: #808080; font-kerning: none">+60<tspan x="15.794092" y="-3.9" style="font-size: 5.3px; font-family: 'DejaVu Sans', 'Liberation Sans', sans-serif; fill: #808080">∘</tspan></text>
</g>
</g>
<g id="text_11">
<g style="fill: #808080" transform="translate(429.188 238.095)">
<text x="0" y="-0.796875" style="font-size: 7px; font-family: 'DejaVu Sans', 'Liberation Sans', sans-serif; fill: #808080; font-kerning: none">+90<tspan x="15.794092" y="-3.9" style="font-size: 5.3px; font-family: 'DejaVu Sans', 'Liberation Sans', sans-serif; fill: #808080">∘</tspan></text>
</g>
</g>
<g id="text_12">
<g style="fill: #808080" transform="translate(356.538 238.095)">
<text x="0" y="-0.796875" style="font-size: 7px; font-family: 'DejaVu Sans', 'Liberation Sans', sans-serif; fill: #808080; font-kerning: none">+120<tspan x="20.247705" y="-3.9" style="font-size: 5.3px; font-family: 'DejaVu Sans', 'Liberation Sans', sans-serif; fill: #808080">∘</tspan></text>
</g>
</g>
<g id="text_13">
<g style="fill: #808080" transform="translate(286.128 238.095)">
<text x="0" y="-0.796875" style="font-size: 7px; font-family: 'DejaVu Sans', 'Liberation Sans', sans-serif; fill: #808080; font-kerning: none">+150<tspan x="20.247705" y="-3.9" style="font-size: 5.3px; font-family: 'DejaVu Sans', 'Liberation Sans', sans-serif; fill: #808080">∘</tspan></text>
</g>
</g>
<g id="text_14">
<g style="fill: #808080" transform="translate(215.718 238.095)">
<text x="0" y="-0.796875" style="font-size: 7px; font-family: 'DejaVu Sans', 'Liberation Sans', sans-serif; fill: #808080; font-kerning: none">+180<tspan x="20.247705" y="-3.9" style="font-size: 5.3px; font-family: 'DejaVu Sans', 'Liberation Sans', sans-serif; fill: #808080">∘</tspan></text>
</g>
</g>
<g id="text_15">
<g style="fill: #808080" transform="translate(1060.638 238.095)">
<text x="0" y="-0.796875" style="font-size: 7px; font-family: 'DejaVu Sans', 'Liberation Sans', sans-serif; fill: #808080; font-kerning: none">+180<tspan x="20.247705" y="-3.9" style="font-size: 5.3px; font-family: 'DejaVu Sans', 'Liberation Sans', sans-serif; fill: #808080">∘</tspan></text>
</g>
</g>
<g id="text_16">
<g style="fill: #808080" transform="translate(990.228 238.095)">
<text x="0" y="-0.796875" style="font-size: 7px; font-family: 'DejaVu Sans', 'Liberation Sans', sans-serif; fill: #808080; font-kerning: none">+210<tspan x="20.247705" y="-3.9" style="font-size: 5.3px; font-family: 'DejaVu Sans', 'Liberation Sans', sans-serif; fill: #808080">∘</tspan></text>
</g>
</g>
<g id="text_17">
<g style="fill: #808080" transform="translate(919.818 238.095)">
<text x="0" y="-0.796875" style="font-size: 7px; font-family: 'DejaVu Sans', 'Liberation Sans', sans-serif; fill: #808080; font-kerning: none">+240<tspan x="20.247705" y="-3.9" style="font-size: 5.3px; font-family: 'DejaVu Sans', 'Liberation Sans', sans-serif; fill: #808080">∘</tspan></text>
</g>
</g>
<g id="text_18">
<g style="fill: #808080" transform="translate(849.408 238.095)">
<text x="0" y="-0.796875" style="font-size: 7px; font-family: 'DejaVu Sans', 'Liberation Sans', sans-serif; fill: #808080; font-kerning: none">+270<tspan x="20.247705" y="-3.9" style="font-size: 5.3px; font-family: 'DejaVu Sans', 'Liberation Sans', sans-serif; fill: #808080">∘</tspan></text>
</g>
</g>
<g id="text_19">
<g style="fill: #808080" transform="translate(778.998 238.095)">
<text x="0" y="-0.796875" style="font-size: 7px; font-family: 'DejaVu Sans', 'Liberation Sans', sans-serif; fill: #808080; font-kerning: none">+300<tspan x="20.247705" y="-3.9" style="font-size: 5.3px; font-family: 'DejaVu Sans', 'Liberation Sans', sans-serif; fill: #808080">∘</tspan></text>
</g>
</g>
<g id="text_20">
<g style="fill: #808080" transform="translate(708.588 238.095)">
<text x="0" y="-0.796875" style="font-size: 7px; font-family: 'DejaVu Sans', 'Liberation Sans', sans-serif; fill: #808080; font-kerning: none">+330<tspan x="20.247705" y="-3.9" style="font-size: 5.3px; font-family: 'DejaVu Sans', 'Liberation Sans', sans-serif; fill: #808080">∘</tspan></text>
</g>
</g>
<g id="text_21">
<text style="font-size: 10px; font-family: 'DejaVu Sans Mono', 'Liberation Mono', monospace; text-anchor: start; fill: #ffffff" x="227.376" y="21.528" transform="rotate(-0 227.376 21.528)">KR000E</text>
</g>
<g id="text_22">
<text style="font-size: 10px; font-family: 'DejaVu Sans Mono', 'Liberation Mono', monospace; text-anchor: start; fill: #ffffff" x="227.376" y="30.888" transform="rotate(-0 227.376 30.888)">Beg: 20251004 10:19:29 (sol = 191.10°)</text>
</g>
<g id="text_23">
<text style="font-size: 10px; font-family: 'DejaVu Sans Mono', 'Liberation Mono', monospace; text-anchor: start; fill: #ffffff" x="227.376" y="40.968" transform="rotate(-0 227.376 40.968)">End: 20251004 19:57:56 (sol = 191.49°)</text>
</g>
<g id="text_24">
<text style="font-size: 10px; font-family: 'DejaVu Sans Mono', 'Liberation Mono', monospace; text-anchor: start; fill: #ffffff" x="227.376" y="50.328" transform="rotate(-0 227.376 50.328)">--------------------------------------</text>
</g>
<g id="text_25">
<text style="font-size: 10px; font-family: 'DejaVu Sans Mono', 'Liberation Mono', monospace; text-anchor: start; fill: #ffffff" x="227.376" y="58.968" transform="rotate(-0 227.376 58.968)">...: 6</text>
</g>
<g id="text_26">
<text style="font-size: 10px; font-family: 'DejaVu Sans Mono', 'Liberation Mono', monospace; text-anchor: start; fill: #ffffff" x="227.376" y="68.328" transform="rotate(-0 227.376 68.328)">STA: 2</text>
</g>
<g id="text_27">
<text style="font-size: 10px; font-family: 'DejaVu Sans Mono', 'Liberation Mono', monospace; text-anchor: start; fill: #ffffff" x="227.376" y="77.688" transform="rotate(-0 227.376 77.688)">ARD: 1</text>
</g>
<g id="line2d_66">
<path d="M 620.352 112.896 L 620.487701 112.653034 L 620.623485 112.410115 L 620.759352 112.167242 L 620.895301 111.924417 L 621.031331 111.68164 L 621.167443 111.438911 L 621.303635 111.196231 L 621.439906 110.953599 L 621.576257 110.711017 L 621.712687 110.468485 L 621.849195 110.226002 L 621.98578 109.983571 L 622.122442 109.74119 L 622.259181 109.498861 L 622.395995 109.256583 L 622.532885 109.014358 L 622.669849 108.772185 L 622.806888 108.530066 L 622.944 108.288 " clip-path="url(#pd2f023da11)" style="fill: none; stroke: #ff1d00; stroke-linecap: square"/>
</g>
<g id="line2d_67">
<path d="M 743.904 165.168 L 745.644212 165.232416 L 747.38876 165.308404 L 749.137699 165.395941 L 750.891079 165.495002 L 752.648946 165.605557 L 754.411342 165.727574 L 756.178301 165.861015 L 757.949856 166.005841 L 759.726033 166.162011 L 761.506853 166.329478 L 763.292333 166.508193 L 765.082482 166.698105 L 766.877306 166.899158 L 768.676804 167.111294 L 770.480971 167.334453 L 772.289794 167.568571 L 774.103257 167.813581 L 775.921335 168.069415 L 777.744 168.336 " clip-path="url(#pd2f023da11)" style="fill: none; stroke: #ff1d00; stroke-linecap: square"/>
</g>
<g id="line2d_68">
<path d="M 581.4 182.88 L 581.561722 182.682548 L 581.723583 182.48514 L 581.885583 182.287775 L 582.04772 182.090453 L 582.209995 181.893174 L 582.372406 181.69594 L 582.534954 181.49875 L 582.697639 181.301604 L 582.860458 181.104503 L 583.023413 180.907446 L 583.186502 180.710435 L 583.349725 180.513469 L 583.513082 180.316549 L 583.676571 180.119675 L 583.840194 179.922846 L 584.003948 179.726065 L 584.167835 179.529329 L 584.331852 179.332641 L 584.496 179.136 " clip-path="url(#pd2f023da11)" style="fill: none; stroke: #e312ff; stroke-linecap: square"/>
</g>
<g id="line2d_69">
<path d="M 634.392 88.128 L 634.954554 88.020175 L 635.516352 87.916244 L 636.07742 87.816223 L 636.63778 87.720131 L 637.197456 87.627984 L 637.756475 87.539797 L 638.314861 87.455588 L 638.87264 87.37537 L 639.429839 87.299157 L 639.986484 87.226964 L 640.542603 87.158803 L 641.098223 87.094686 L 641.653373 87.034626 L 642.20808 86.978632 L 642.762374 86.926716 L 643.316283 86.878886 L 643.869838 86.835152 L 644.423067 86.795521 L 644.976 86.76 " clip-path="url(#pd2f023da11)" style="fill: none; stroke: #666666; stroke-linecap: square"/>
</g>
<g id="line2d_70">
<path d="M 640.728 144.576 L 641.531887 144.839909 L 642.335641 145.107486 L 643.139276 145.378706 L 643.942809 145.653543 L 644.746252 145.93197 L 645.549621 146.213961 L 646.352929 146.49949 L 647.156189 146.78853 L 647.959412 147.081053 L 648.762612 147.377035 L 649.565799 147.676446 L 650.368983 147.979262 L 651.172176 148.285454 L 651.975386 148.594996 L 652.778623 148.90786 L 653.581895 149.22402 L 654.38521 149.543448 L 655.188576 149.866117 L 655.992 150.192 " clip-path="url(#pd2f023da11)" style="fill: none; stroke: #666666; stroke-linecap: square"/>
</g>
<g id="line2d_71">
<path d="M 643.68 163.008 L 643.971836 163.061709 L 644.263664 163.115769 L 644.555485 163.170179 L 644.8473 163.224939 L 645.139109 163.280049 L 645.430912 163.335508 L 645.722709 163.391315 L 646.014502 163.44747 L 646.30629 163.503973 L 646.598074 163.560823 L 646.889854 163.618019 L 647.18163 163.675561 L 647.473404 163.733449 L 647.765174 163.791681 L 648.056943 163.850258 L 648.348709 163.909179 L 648.640474 163.968444 L 648.932237 164.028051 L 649.224 164.088 " clip-path="url(#pd2f023da11)" style="fill: none; stroke: #666666; stroke-linecap: square"/>
</g>
<g id="line2d_72">
<path d="M 650.232 174.24 L 650.603332 174.281394 L 650.974664 174.323244 L 651.345999 174.36555 L 651.717336 174.408312 L 652.088676 174.451528 L 652.460019 174.495198 L 652.831365 174.539322 L 653.202716 174.583899 L 653.574072 174.628929 L 653.945433 174.674411 L 654.3168 174.720344 L 654.688173 174.766729 L 655.059553 174.813564 L 655.43094 174.860848 L 655.802335 174.908582 L 656.173738 174.956765 L 656.545149 175.005396 L 656.91657 175.054475 L 657.288 175.104 " clip-path="url(#pd2f023da11)" style="fill: none; stroke: #666666; stroke-linecap: square"/>
</g>
<g id="line2d_73">
<path d="M 714.96 119.088 L 715.600405 118.656382 L 716.243491 118.230985 L 716.889371 117.811893 L 717.53816 117.39919 L 718.189975 116.992959 L 718.844937 116.593284 L 719.503168 116.200249 L 720.164791 115.813938 L 720.829932 115.434434 L 721.49872 115.061821 L 722.171285 114.696182 L 722.847759 114.3376 L 723.528276 113.986158 L 724.212972 113.641938 L 724.901984 113.305021 L 725.595452 112.975489 L 726.293515 112.653422 L 726.996317 112.338899 L 727.704 112.032 " clip-path="url(#pd2f023da11)" style="fill: none; stroke: #666666; stroke-linecap: square"/>
</g>
<g id="line2d_74">
<path d="M 866.664 174.744 L 866.826456 174.754662 L 866.988967 174.765402 L 867.151532 174.776221 L 867.314152 174.787118 L 867.476827 174.798095 L 867.639556 174.809149 L 867.80234 174.820283 L 867.965178 174.831494 L 868.128071 174.842785 L 868.291019 174.854153 L 868.454021 174.865601 L 868.617077 174.877126 L 868.780188 174.88873 L 868.943354 174.900413 L 869.106574 174.912174 L 869.269849 174.924013 L 869.433178 174.93593 L 869.596562 174.947926 L 869.76 174.96 " clip-path="url(#pd2f023da11)" style="fill: none; stroke: #666666; stroke-linecap: square"/>
</g>
<g id="PathCollection_1">
<g clip-path="url(#pd2f023da11)">
<path d="M -0.866025 0 L 0.866025 0 M 0 0.866025 L 0 -0.866025" transform="translate(622.944 108.288)" style="fill: #ff6347; stroke: #ff6347"/>
</g>
</g>
<g id="PathCollection_2">
<g clip-path="url(#pd2f023da11)">
<path d="M -0.866025 0 L 0.866025 0 M 0 0.866025 L 0 -0.866025" transform="translate(777.744 168.336)" style="fill: #ff6347; stroke: #ff6347"/>
</g>
</g>
<g id="PathCollection_3">
<g clip-path="url(#pd2f023da11)">
<path d="M -0.866025 0 L 0.866025 0 M 0 0.866025 L 0 -0.866025" transform="translate(584.496 179.136)" style="fill: #ff6347; stroke: #ff6347"/>
</g>
</g>
<g id="text_28">
<text style="font-size: 8px; font-family: 'DejaVu Sans', 'Liberation Sans', sans-serif; text-anchor: middle; fill: #ffffff" x="587.52" y="214.6075" transform="rotate(-0 587.52 214.6075)">STA</text>
</g>
<g id="text_29">
<text style="font-size: 8px; font-family: 'DejaVu Sans', 'Liberation Sans', sans-serif; text-anchor: middle; fill: #ffffff" x="551.016" y="328.3675" transform="rotate(-0 551.016 328.3675)">ARD</text>
</g>
</g>
<g id="axes_2">
<g id="patch_3">
<path d="M 13.968 606.6 L 1285.488 606.6 L 1285.488 461.88 L 13.968 461.88 z
"/>
</g>
<g id="text_30">
<text style="font-size: 20px; font-family: 'DejaVu Sans', 'Liberation Sans', sans-serif; fill: #ffffff; opacity: 0.3" transform="translate(1057.623456 494.99375) rotate(-90)">JAN</text>
</g>
<g id="text_31">
<text style="font-size: 20px; font-family: 'DejaVu Sans', 'Liberation Sans', sans-serif; fill: #ffffff; opacity: 0.3" transform="translate(1173.086915 501.9025) rotate(-90)">FEB</text>
</g>
<g id="text_32">
<text style="font-size: 20px; font-family: 'DejaVu Sans', 'Liberation Sans', sans-serif; fill: #ffffff; opacity: 0.3" transform="translate(1272.351742 508.874375) rotate(-90)">MAR</text>
</g>
<g id="text_33">
<text style="font-size: 20px; font-family: 'DejaVu Sans', 'Liberation Sans', sans-serif; fill: #ffffff; opacity: 0.3" transform="translate(107.562151 502.0215) rotate(-90)">APR</text>
</g>
<g id="text_34">
<text style="font-size: 20px; font-family: 'DejaVu Sans', 'Liberation Sans', sans-serif; fill: #ffffff; opacity: 0.3" transform="translate(212.665567 505.643125) rotate(-90)">MAY</text>
</g>
<g id="text_35">
<text style="font-size: 20px; font-family: 'DejaVu Sans', 'Liberation Sans', sans-serif; fill: #ffffff; opacity: 0.3" transform="translate(314.093398 496.516) rotate(-90)">JUN</text>
</g>
<g id="text_36">
<text style="font-size: 20px; font-family: 'DejaVu Sans', 'Liberation Sans', sans-serif; fill: #ffffff; opacity: 0.3" transform="translate(414.440118 492.84125) rotate(-90)">JUL</text>
</g>
<g id="text_37">
<text style="font-size: 20px; font-family: 'DejaVu Sans', 'Liberation Sans', sans-serif; fill: #ffffff; opacity: 0.3" transform="translate(520.614736 506.415625) rotate(-90)">AUG</text>
</g>
<g id="text_38">
<text style="font-size: 20px; font-family: 'DejaVu Sans', 'Liberation Sans', sans-serif; fill: #ffffff; opacity: 0.3" transform="translate(627.932647 500.71375) rotate(-90)">SEP</text>
</g>
<g id="text_39">
<text style="font-size: 20px; font-family: 'DejaVu Sans', 'Liberation Sans', sans-serif; fill: #ffffff; opacity: 0.3" transform="translate(732.036018 505.245) rotate(-90)">OCT</text>
</g>
<g id="text_40">
<text style="font-size: 20px; font-family: 'DejaVu Sans', 'Liberation Sans', sans-serif; fill: #ffffff; opacity: 0.3" transform="translate(842.169505 507.3575) rotate(-90)">NOV</text>
</g>
<g id="text_41">
<text style="font-size: 20px; font-family: 'DejaVu Sans', 'Liberation Sans', sans-serif; fill: #ffffff; opacity: 0.3" transform="translate(949.12045 506.043125) rotate(-90)">DEC</text>
</g>
<g id="matplotlib.axis_3">
<g id="xtick_1">
<g id="line2d_75"/>
<g id="text_42">
<text style="font-size: 10px; font-family: 'DejaVu Sans', 'Liberation Sans', sans-serif; text-anchor: middle; fill: #ffffff" x="14.688" y="620.478438" transform="rotate(-0 14.688 620.478438)">0</text>
</g>
</g>
<g id="xtick_2">
<g id="line2d_76"/>
<g id="text_43">
<text style="font-size: 10px; font-family: 'DejaVu Sans', 'Liberation Sans', sans-serif; text-anchor: middle; fill: #ffffff" x="190.568" y="620.478438" transform="rotate(-0 190.568 620.478438)">50</text>
</g>
</g>
<g id="xtick_3">
<g id="line2d_77"/>
<g id="text_44">
<text style="font-size: 10px; font-family: 'DejaVu Sans', 'Liberation Sans', sans-serif; text-anchor: middle; fill: #ffffff" x="367.168" y="620.478438" transform="rotate(-0 367.168 620.478438)">100</text>
</g>
</g>
<g id="xtick_4">
<g id="line2d_78"/>
<g id="text_45">
<text style="font-size: 10px; font-family: 'DejaVu Sans', 'Liberation Sans', sans-serif; text-anchor: middle; fill: #ffffff" x="543.768" y="620.478438" transform="rotate(-0 543.768 620.478438)">150</text>
</g>
</g>
<g id="xtick_5">
<g id="line2d_79"/>
<g id="text_46">
<text style="font-size: 10px; font-family: 'DejaVu Sans', 'Liberation Sans', sans-serif; text-anchor: middle; fill: #ffffff" x="720.368" y="620.478438" transform="rotate(-0 720.368 620.478438)">200</text>
</g>
</g>
<g id="xtick_6">
<g id="line2d_80"/>
<g id="text_47">
<text style="font-size: 10px; font-family: 'DejaVu Sans', 'Liberation Sans', sans-serif; text-anchor: middle; fill: #ffffff" x="896.968" y="620.478438" transform="rotate(-0 896.968 620.478438)">250</text>
</g>
</g>
<g id="xtick_7">
<g id="line2d_81"/>
<g id="text_48">
<text style="font-size: 10px; font-family: 'DejaVu Sans', 'Liberation Sans', sans-serif; text-anchor: middle; fill: #ffffff" x="1073.568" y="620.478438" transform="rotate(-0 1073.568 620.478438)">300</text>
</g>
</g>
<g id="xtick_8">
<g id="line2d_82"/>
<g id="text_49">
<text style="font-size: 10px; font-family: 'DejaVu Sans', 'Liberation Sans', sans-serif; text-anchor: middle; fill: #ffffff" x="1250.168" y="620.478438" transform="rotate(-0 1250.168 620.478438)">350</text>
</g>
</g>
<g id="text_50">
<text style="font-size: 10px; font-family: 'DejaVu Sans', 'Liberation Sans', sans-serif; text-anchor: middle; fill: #ffffff" x="649.728" y="634.876562" transform="rotate(-0 649.728 634.876562)">Solar longitude (deg)</text>
</g>
</g>
<g id="line2d_83">
<path d="M 689.4 606.6 L 689.4 570.42 L 689.4 534.24 L 689.4 498.06 L 689.4 461.88 " clip-path="url(#p28123b45c0)" style="fill: none; stroke-dasharray: 3.7,1.6; stroke-dashoffset: 0; stroke: #ff0000"/>
</g>
<g id="line2d_84">
<path d="M 690.84 606.6 L 690.84 570.42 L 690.84 534.24 L 690.84 498.06 L 690.84 461.88 " clip-path="url(#p28123b45c0)" style="fill: none; stroke-dasharray: 3.7,1.6; stroke-dashoffset: 0; stroke: #ff0000"/>
</g>
<g id="patch_4">
<path d="M 13.968 606.6 L 13.968 461.88 " style="fill: none; stroke: #ffffff; stroke-width: 0.8; stroke-linejoin: miter; stroke-linecap: square"/>
</g>
<g id="patch_5">
<path d="M 1285.488 606.6 L 1285.488 461.88 " style="fill: none; stroke: #ffffff; stroke-width: 0.8; stroke-linejoin: miter; stroke-linecap: square"/>
</g>
<g id="patch_6">
<path d="M 13.968 606.6 L 1285.488 606.6 " style="fill: none; stroke: #ffffff; stroke-width: 0.8; stroke-linejoin: miter; stroke-linecap: square"/>
</g>
<g id="patch_7">
<path d="M 13.968 461.88 L 1285.488 461.88 " style="fill: none; stroke: #ffffff; stroke-width: 0.8; stroke-linejoin: miter; stroke-linecap: square"/>
</g>
<g id="line2d_85">
<path d="M 77.544 600.48 L 81.076 600.48 L 84.608 600.48 L 88.14 600.48 L 91.672 600.48 " clip-path="url(#p28123b45c0)" style="fill: none; stroke: #ec84ef; stroke-width: 3; stroke-linecap: square"/>
</g>
<g id="text_51">
<text style="font-size: 8px; font-family: 'DejaVu Sans', 'Liberation Sans', sans-serif; text-anchor: middle; fill: #ffffff" x="84.608" y="599.323418" transform="rotate(-0 84.608 599.323418)">KSE</text>
</g>
<g id="line2d_86">
<path d="M 119.928 600.48 L 123.46 600.48 L 126.992 600.48 L 130.524 600.48 L 134.056 600.48 L 137.588 600.48 L 141.12 600.48 L 144.652 600.48 L 148.184 600.48 L 151.716 600.48 L 155.248 600.48 L 158.78 600.48 L 162.312 600.48 L 165.844 600.48 L 169.376 600.48 L 172.908 600.48 L 176.44 600.48 L 179.972 600.48 L 183.504 600.48 L 187.036 600.48 L 190.568 600.48 L 194.1 600.48 L 197.632 600.48 L 201.164 600.48 L 204.696 600.48 L 208.228 600.48 L 211.76 600.48 L 215.292 600.48 L 218.824 600.48 L 222.356 600.48 L 225.888 600.48 L 229.42 600.48 L 232.952 600.48 L 236.484 600.48 L 240.016 600.48 L 243.548 600.48 L 247.08 600.48 " clip-path="url(#p28123b45c0)" style="fill: none; stroke: #ec84ef; stroke-width: 3; stroke-linecap: square"/>
</g>
<g id="text_52">
<text style="font-size: 8px; font-family: 'DejaVu Sans', 'Liberation Sans', sans-serif; text-anchor: middle; fill: #ffffff" x="183.504" y="599.323418" transform="rotate(-0 183.504 599.323418)">ETA</text>
</g>
<g id="line2d_87">
<path d="M 264.74 600.48 L 268.272 600.48 L 271.804 600.48 L 275.336 600.48 L 278.868 600.48 L 282.4 600.48 L 285.932 600.48 L 289.464 600.48 L 292.996 600.48 L 296.528 600.48 L 300.06 600.48 L 303.592 600.48 L 307.124 600.48 L 310.656 600.48 L 314.188 600.48 L 317.72 600.48 L 321.252 600.48 L 324.784 600.48 L 328.316 600.48 L 331.848 600.48 L 335.38 600.48 L 338.912 600.48 L 342.444 600.48 L 345.976 600.48 L 349.508 600.48 L 353.04 600.48 L 356.572 600.48 L 360.104 600.48 L 363.636 600.48 L 367.168 600.48 L 370.7 600.48 L 374.232 600.48 L 377.764 600.48 L 381.296 600.48 L 384.828 600.48 L 388.36 600.48 L 391.892 600.48 L 395.424 600.48 L 398.956 600.48 L 402.488 600.48 L 406.02 600.48 L 409.552 600.48 L 413.084 600.48 L 416.616 600.48 L 420.148 600.48 L 423.68 600.48 L 427.212 600.48 L 430.744 600.48 L 434.276 600.48 L 437.808 600.48 L 441.34 600.48 L 444.872 600.48 L 448.404 600.48 " clip-path="url(#p28123b45c0)" style="fill: none; stroke: #ec84ef; stroke-width: 3; stroke-linecap: square"/>
</g>
<g id="text_53">
<text style="font-size: 8px; font-family: 'DejaVu Sans', 'Liberation Sans', sans-serif; text-anchor: middle; fill: #ffffff" x="356.572" y="599.323418" transform="rotate(-0 356.572 599.323418)">NZC</text>
</g>
<g id="line2d_88">
<path d="M 459 600.48 L 462.532 600.48 L 466.064 600.48 L 469.596 600.48 L 473.128 600.48 L 476.66 600.48 L 480.192 600.48 L 483.724 600.48 L 487.256 600.48 L 490.788 600.48 L 494.32 600.48 L 497.852 600.48 L 501.384 600.48 L 504.916 600.48 L 508.448 600.48 L 511.98 600.48 L 515.512 600.48 L 519.044 600.48 L 522.576 600.48 L 526.108 600.48 L 529.64 600.48 L 533.172 600.48 L 536.704 600.48 L 540.236 600.48 L 543.768 600.48 L 547.3 600.48 L 550.832 600.48 L 554.364 600.48 L 557.896 600.48 L 561.428 600.48 L 564.96 600.48 " clip-path="url(#p28123b45c0)" style="fill: none; stroke: #ec84ef; stroke-width: 3; stroke-linecap: square"/>
</g>
<g id="text_54">
<text style="font-size: 8px; font-family: 'DejaVu Sans', 'Liberation Sans', sans-serif; text-anchor: middle; fill: #ffffff" x="511.98" y="599.323418" transform="rotate(-0 511.98 599.323418)">NDA</text>
</g>
<g id="line2d_89">
<path d="M 582.62 600.48 L 586.152 600.48 L 589.684 600.48 L 593.216 600.48 L 596.748 600.48 L 600.28 600.48 L 603.812 600.48 L 607.344 600.48 L 610.876 600.48 L 614.408 600.48 L 617.94 600.48 L 621.472 600.48 L 625.004 600.48 L 628.536 600.48 L 632.068 600.48 L 635.6 600.48 L 639.132 600.48 L 642.664 600.48 L 646.196 600.48 " clip-path="url(#p28123b45c0)" style="fill: none; stroke: #ec84ef; stroke-width: 3; stroke-linecap: square"/>
</g>
<g id="text_55">
<text style="font-size: 8px; font-family: 'DejaVu Sans', 'Liberation Sans', sans-serif; text-anchor: middle; fill: #ffffff" x="614.408" y="599.323418" transform="rotate(-0 614.408 599.323418)">SPE</text>
</g>
<g id="line2d_90">
<path d="M 663.856 600.48 L 667.388 600.48 L 670.92 600.48 L 674.452 600.48 L 677.984 600.48 L 681.516 600.48 L 685.048 600.48 L 688.58 600.48 L 692.112 600.48 L 695.644 600.48 L 699.176 600.48 " clip-path="url(#p28123b45c0)" style="fill: none; stroke: #ec84ef; stroke-width: 3; stroke-linecap: square"/>
</g>
<g id="text_56">
<text style="font-size: 8px; font-family: 'DejaVu Sans', 'Liberation Sans', sans-serif; text-anchor: middle; fill: #ffffff" x="681.516" y="599.323418" transform="rotate(-0 681.516 599.323418)">ARD</text>
</g>
<g id="line2d_91">
<path d="M 709.772 600.48 L 713.304 600.48 L 716.836 600.48 L 720.368 600.48 L 723.9 600.48 L 727.432 600.48 L 730.964 600.48 L 734.496 600.48 L 738.028 600.48 L 741.56 600.48 L 745.092 600.48 L 748.624 600.48 L 752.156 600.48 L 755.688 600.48 L 759.22 600.48 L 762.752 600.48 L 766.284 600.48 " clip-path="url(#p28123b45c0)" style="fill: none; stroke: #ec84ef; stroke-width: 3; stroke-linecap: square"/>
</g>
<g id="text_57">
<text style="font-size: 8px; font-family: 'DejaVu Sans', 'Liberation Sans', sans-serif; text-anchor: middle; fill: #ffffff" x="738.028" y="599.323418" transform="rotate(-0 738.028 599.323418)">EGE</text>
</g>
<g id="line2d_92">
<path d="M 780.412 600.48 L 783.944 600.48 L 787.476 600.48 L 791.008 600.48 L 794.54 600.48 L 798.072 600.48 L 801.604 600.48 L 805.136 600.48 L 808.668 600.48 L 812.2 600.48 L 815.732 600.48 L 819.264 600.48 L 822.796 600.48 L 826.328 600.48 L 829.86 600.48 L 833.392 600.48 L 836.924 600.48 L 840.456 600.48 L 843.988 600.48 L 847.52 600.48 L 851.052 600.48 L 854.584 600.48 L 858.116 600.48 L 861.648 600.48 L 865.18 600.48 " clip-path="url(#p28123b45c0)" style="fill: none; stroke: #ec84ef; stroke-width: 3; stroke-linecap: square"/>
</g>
<g id="text_58">
<text style="font-size: 8px; font-family: 'DejaVu Sans', 'Liberation Sans', sans-serif; text-anchor: middle; fill: #ffffff" x="822.796" y="599.323418" transform="rotate(-0 822.796 599.323418)">NTA</text>
</g>
<g id="line2d_93">
<path d="M 896.968 600.48 L 900.5 600.48 L 904.032 600.48 L 907.564 600.48 L 911.096 600.48 L 914.628 600.48 L 918.16 600.48 L 921.692 600.48 L 925.224 600.48 L 928.756 600.48 L 932.288 600.48 L 935.82 600.48 L 939.352 600.48 L 942.884 600.48 L 946.416 600.48 L 949.948 600.48 L 953.48 600.48 " clip-path="url(#p28123b45c0)" style="fill: none; stroke: #ec84ef; stroke-width: 3; stroke-linecap: square"/>
</g>
<g id="text_59">
<text style="font-size: 8px; font-family: 'DejaVu Sans', 'Liberation Sans', sans-serif; text-anchor: middle; fill: #ffffff" x="925.224" y="599.323418" transform="rotate(-0 925.224 599.323418)">MON</text>
</g>
<g id="line2d_94">
<path d="M 964.076 600.48 L 967.608 600.48 L 971.14 600.48 L 974.672 600.48 " clip-path="url(#p28123b45c0)" style="fill: none; stroke: #ec84ef; stroke-width: 3; stroke-linecap: square"/>
</g>
<g id="text_60">
<text style="font-size: 8px; font-family: 'DejaVu Sans', 'Liberation Sans', sans-serif; text-anchor: middle; fill: #ffffff" x="967.608" y="599.323418" transform="rotate(-0 967.608 599.323418)">URS</text>
</g>
<g id="line2d_95">
<path d="M 995.864 600.48 L 999.396 600.48 L 1002.928 600.48 L 1006.46 600.48 L 1009.992 600.48 L 1013.524 600.48 L 1017.056 600.48 L 1020.588 600.48 L 1024.12 600.48 L 1027.652 600.48 L 1031.184 600.48 L 1034.716 600.48 L 1038.248 600.48 " clip-path="url(#p28123b45c0)" style="fill: none; stroke: #ec84ef; stroke-width: 3; stroke-linecap: square"/>
</g>
<g id="text_61">
<text style="font-size: 8px; font-family: 'DejaVu Sans', 'Liberation Sans', sans-serif; text-anchor: middle; fill: #ffffff" x="1017.056" y="599.323418" transform="rotate(-0 1017.056 599.323418)">AHY</text>
</g>
<g id="line2d_96">
<path d="M 1052.376 600.48 L 1055.908 600.48 L 1059.44 600.48 L 1062.972 600.48 L 1066.504 600.48 L 1070.036 600.48 L 1073.568 600.48 L 1077.1 600.48 L 1080.632 600.48 L 1084.164 600.48 L 1087.696 600.48 " clip-path="url(#p28123b45c0)" style="fill: none; stroke: #ec84ef; stroke-width: 3; stroke-linecap: square"/>
</g>
<g id="text_62">
<text style="font-size: 8px; font-family: 'DejaVu Sans', 'Liberation Sans', sans-serif; text-anchor: middle; fill: #ffffff" x="1070.036" y="599.323418" transform="rotate(-0 1070.036 599.323418)">GUM</text>
</g>
<g id="line2d_97">
<path d="M 1098.292 600.48 L 1101.824 600.48 L 1105.356 600.48 L 1108.888 600.48 L 1112.42 600.48 " clip-path="url(#p28123b45c0)" style="fill: none; stroke: #ec84ef; stroke-width: 3; stroke-linecap: square"/>
</g>
<g id="text_63">
<text style="font-size: 8px; font-family: 'DejaVu Sans', 'Liberation Sans', sans-serif; text-anchor: middle; fill: #ffffff" x="1105.356" y="599.323418" transform="rotate(-0 1105.356 599.323418)">OHY</text>
</g>
<g id="line2d_98">
<path d="M 1243.104 600.48 L 1246.636 600.48 L 1250.168 600.48 L 1253.7 600.48 L 1257.232 600.48 " clip-path="url(#p28123b45c0)" style="fill: none; stroke: #ec84ef; stroke-width: 3; stroke-linecap: square"/>
</g>
<g id="text_64">
<text style="font-size: 8px; font-family: 'DejaVu Sans', 'Liberation Sans', sans-serif; text-anchor: middle; fill: #ffffff" x="1250.168" y="599.323418" transform="rotate(-0 1250.168 599.323418)">XHE</text>
</g>
<g id="line2d_99">
<path d="M 1267.828 600.48 L 1271.36 600.48 L 1274.892 600.48 L 1278.424 600.48 L 1281.956 600.48 " clip-path="url(#p28123b45c0)" style="fill: none; stroke: #ec84ef; stroke-width: 3; stroke-linecap: square"/>
</g>
<g id="text_65">
<text style="font-size: 8px; font-family: 'DejaVu Sans', 'Liberation Sans', sans-serif; text-anchor: middle; fill: #ffffff" x="1274.892" y="599.323418" transform="rotate(-0 1274.892 599.323418)">EVI</text>
</g>
<g id="line2d_100">
<path d="M 119.928 588.96 L 123.46 588.96 L 126.992 588.96 L 130.524 588.96 L 134.056 588.96 " clip-path="url(#p28123b45c0)" style="fill: none; stroke: #dd11ff; stroke-width: 3; stroke-linecap: square"/>
</g>
<g id="text_66">
<text style="font-size: 8px; font-family: 'DejaVu Sans', 'Liberation Sans', sans-serif; text-anchor: middle; fill: #ffffff" x="126.992" y="586.802618" transform="rotate(-0 126.992 586.802618)">AVB</text>
</g>
<g id="line2d_101">
<path d="M 162.312 588.96 L 165.844 588.96 L 169.376 588.96 L 172.908 588.96 L 176.44 588.96 L 179.972 588.96 L 183.504 588.96 L 187.036 588.96 L 190.568 588.96 L 194.1 588.96 L 197.632 588.96 L 201.164 588.96 L 204.696 588.96 " clip-path="url(#p28123b45c0)" style="fill: none; stroke: #dd11ff; stroke-width: 3; stroke-linecap: square"/>
</g>
<g id="text_67">
<text style="font-size: 8px; font-family: 'DejaVu Sans', 'Liberation Sans', sans-serif; text-anchor: middle; fill: #ffffff" x="183.504" y="586.802618" transform="rotate(-0 183.504 586.802618)">ELY</text>
</g>
<g id="line2d_102">
<path d="M 225.888 588.96 L 229.42 588.96 L 232.952 588.96 L 236.484 588.96 L 240.016 588.96 L 243.548 588.96 " clip-path="url(#p28123b45c0)" style="fill: none; stroke: #dd11ff; stroke-width: 3; stroke-linecap: square"/>
</g>
<g id="text_68">
<text style="font-size: 8px; font-family: 'DejaVu Sans', 'Liberation Sans', sans-serif; text-anchor: middle; fill: #ffffff" x="232.952" y="586.802618" transform="rotate(-0 232.952 586.802618)">CAM</text>
</g>
<g id="line2d_103">
<path d="M 264.74 588.96 L 268.272 588.96 L 271.804 588.96 L 275.336 588.96 L 278.868 588.96 L 282.4 588.96 L 285.932 588.96 L 289.464 588.96 L 292.996 588.96 L 296.528 588.96 L 300.06 588.96 L 303.592 588.96 L 307.124 588.96 L 310.656 588.96 L 314.188 588.96 L 317.72 588.96 L 321.252 588.96 L 324.784 588.96 L 328.316 588.96 L 331.848 588.96 L 335.38 588.96 L 338.912 588.96 L 342.444 588.96 L 345.976 588.96 L 349.508 588.96 L 353.04 588.96 " clip-path="url(#p28123b45c0)" style="fill: none; stroke: #dd11ff; stroke-width: 3; stroke-linecap: square"/>
</g>
<g id="text_69">
<text style="font-size: 8px; font-family: 'DejaVu Sans', 'Liberation Sans', sans-serif; text-anchor: middle; fill: #ffffff" x="310.656" y="586.802618" transform="rotate(-0 310.656 586.802618)">SSG</text>
</g>
<g id="line2d_104">
<path d="M 367.168 588.96 L 370.7 588.96 L 374.232 588.96 L 377.764 588.96 L 381.296 588.96 L 384.828 588.96 L 388.36 588.96 L 391.892 588.96 L 395.424 588.96 L 398.956 588.96 L 402.488 588.96 L 406.02 588.96 L 409.552 588.96 L 413.084 588.96 L 416.616 588.96 L 420.148 588.96 L 423.68 588.96 L 427.212 588.96 L 430.744 588.96 L 434.276 588.96 L 437.808 588.96 L 441.34 588.96 L 444.872 588.96 L 448.404 588.96 L 451.936 588.96 L 455.468 588.96 L 459 588.96 L 462.532 588.96 L 466.064 588.96 L 469.596 588.96 " clip-path="url(#p28123b45c0)" style="fill: none; stroke: #dd11ff; stroke-width: 3; stroke-linecap: square"/>
</g>
<g id="text_70">
<text style="font-size: 8px; font-family: 'DejaVu Sans', 'Liberation Sans', sans-serif; text-anchor: middle; fill: #ffffff" x="416.616" y="586.802618" transform="rotate(-0 416.616 586.802618)">PCA</text>
</g>
<g id="line2d_105">
<path d="M 508.448 588.96 L 511.98 588.96 L 515.512 588.96 L 519.044 588.96 L 522.576 588.96 L 526.108 588.96 L 529.64 588.96 " clip-path="url(#p28123b45c0)" style="fill: none; stroke: #dd11ff; stroke-width: 3; stroke-linecap: square"/>
</g>
<g id="text_71">
<text style="font-size: 8px; font-family: 'DejaVu Sans', 'Liberation Sans', sans-serif; text-anchor: middle; fill: #ffffff" x="519.044" y="586.802618" transform="rotate(-0 519.044 586.802618)">AUD</text>
</g>
<g id="line2d_106">
<path d="M 557.896 588.96 L 561.428 588.96 L 564.96 588.96 L 568.492 588.96 L 572.024 588.96 L 575.556 588.96 L 579.088 588.96 L 582.62 588.96 L 586.152 588.96 L 589.684 588.96 L 593.216 588.96 L 596.748 588.96 L 600.28 588.96 L 603.812 588.96 L 607.344 588.96 " clip-path="url(#p28123b45c0)" style="fill: none; stroke: #dd11ff; stroke-width: 3; stroke-linecap: square"/>
</g>
<g id="text_72">
<text style="font-size: 8px; font-family: 'DejaVu Sans', 'Liberation Sans', sans-serif; text-anchor: middle; fill: #ffffff" x="582.62" y="586.802618" transform="rotate(-0 582.62 586.802618)">AUR</text>
</g>
<g id="line2d_107">
<path d="M 628.536 588.96 L 632.068 588.96 L 635.6 588.96 L 639.132 588.96 L 642.664 588.96 L 646.196 588.96 L 649.728 588.96 L 653.26 588.96 L 656.792 588.96 L 660.324 588.96 L 663.856 588.96 L 667.388 588.96 L 670.92 588.96 L 674.452 588.96 L 677.984 588.96 L 681.516 588.96 L 685.048 588.96 L 688.58 588.96 L 692.112 588.96 L 695.644 588.96 L 699.176 588.96 L 702.708 588.96 L 706.24 588.96 L 709.772 588.96 " clip-path="url(#p28123b45c0)" style="fill: none; stroke: #dd11ff; stroke-width: 3; stroke-linecap: square"/>
</g>
<g id="text_73">
<text style="font-size: 8px; font-family: 'DejaVu Sans', 'Liberation Sans', sans-serif; text-anchor: middle; fill: #ffffff" x="670.92" y="586.802618" transform="rotate(-0 670.92 586.802618)">DSX</text>
</g>
<g id="line2d_108">
<path d="M 723.9 588.96 L 727.432 588.96 L 730.964 588.96 " clip-path="url(#p28123b45c0)" style="fill: none; stroke: #dd11ff; stroke-width: 3; stroke-linecap: square"/>
</g>
<g id="text_74">
<text style="font-size: 8px; font-family: 'DejaVu Sans', 'Liberation Sans', sans-serif; text-anchor: middle; fill: #ffffff" x="727.432" y="586.802618" transform="rotate(-0 727.432 586.802618)">OCU</text>
</g>
<g id="line2d_109">
<path d="M 766.284 588.96 L 769.816 588.96 L 773.348 588.96 L 776.88 588.96 L 780.412 588.96 L 783.944 588.96 L 787.476 588.96 L 791.008 588.96 L 794.54 588.96 L 798.072 588.96 L 801.604 588.96 L 805.136 588.96 L 808.668 588.96 L 812.2 588.96 L 815.732 588.96 L 819.264 588.96 L 822.796 588.96 L 826.328 588.96 L 829.86 588.96 L 833.392 588.96 L 836.924 588.96 L 840.456 588.96 L 843.988 588.96 L 847.52 588.96 L 851.052 588.96 L 854.584 588.96 L 858.116 588.96 L 861.648 588.96 L 865.18 588.96 L 868.712 588.96 L 872.244 588.96 " clip-path="url(#p28123b45c0)" style="fill: none; stroke: #dd11ff; stroke-width: 3; stroke-linecap: square"/>
</g>
<g id="text_75">
<text style="font-size: 8px; font-family: 'DejaVu Sans', 'Liberation Sans', sans-serif; text-anchor: middle; fill: #ffffff" x="819.264" y="586.802618" transform="rotate(-0 819.264 586.802618)">OER</text>
</g>
<g id="line2d_110">
<path d="M 896.968 588.96 L 900.5 588.96 L 904.032 588.96 L 907.564 588.96 L 911.096 588.96 " clip-path="url(#p28123b45c0)" style="fill: none; stroke: #dd11ff; stroke-width: 3; stroke-linecap: square"/>
</g>
<g id="text_76">
<text style="font-size: 8px; font-family: 'DejaVu Sans', 'Liberation Sans', sans-serif; text-anchor: middle; fill: #ffffff" x="904.032" y="586.802618" transform="rotate(-0 904.032 586.802618)">DKD</text>
</g>
<g id="line2d_111">
<path d="M 932.288 588.96 L 935.82 588.96 L 939.352 588.96 L 942.884 588.96 L 946.416 588.96 " clip-path="url(#p28123b45c0)" style="fill: none; stroke: #dd11ff; stroke-width: 3; stroke-linecap: square"/>
</g>
<g id="text_77">
<text style="font-size: 8px; font-family: 'DejaVu Sans', 'Liberation Sans', sans-serif; text-anchor: middle; fill: #ffffff" x="939.352" y="586.802618" transform="rotate(-0 939.352 586.802618)">DSV</text>
</g>
<g id="line2d_112">
<path d="M 967.608 588.96 L 971.14 588.96 L 974.672 588.96 L 978.204 588.96 L 981.736 588.96 " clip-path="url(#p28123b45c0)" style="fill: none; stroke: #dd11ff; stroke-width: 3; stroke-linecap: square"/>
</g>
<g id="text_78">
<text style="font-size: 8px; font-family: 'DejaVu Sans', 'Liberation Sans', sans-serif; text-anchor: middle; fill: #ffffff" x="974.672" y="586.802618" transform="rotate(-0 974.672 586.802618)">ALY</text>
</g>
<g id="line2d_113">
<path d="M 999.396 588.96 L 1002.928 588.96 L 1006.46 588.96 L 1009.992 588.96 L 1013.524 588.96 L 1017.056 588.96 L 1020.588 588.96 L 1024.12 588.96 L 1027.652 588.96 " clip-path="url(#p28123b45c0)" style="fill: none; stroke: #dd11ff; stroke-width: 3; stroke-linecap: square"/>
</g>
<g id="text_79">
<text style="font-size: 8px; font-family: 'DejaVu Sans', 'Liberation Sans', sans-serif; text-anchor: middle; fill: #ffffff" x="1013.524" y="586.802618" transform="rotate(-0 1013.524 586.802618)">JLE</text>
</g>
<g id="line2d_114">
<path d="M 1052.376 588.96 L 1055.908 588.96 L 1059.44 588.96 L 1062.972 588.96 L 1066.504 588.96 " clip-path="url(#p28123b45c0)" style="fill: none; stroke: #dd11ff; stroke-width: 3; stroke-linecap: square"/>
</g>
<g id="text_80">
<text style="font-size: 8px; font-family: 'DejaVu Sans', 'Liberation Sans', sans-serif; text-anchor: middle; fill: #ffffff" x="1059.44" y="586.802618" transform="rotate(-0 1059.44 586.802618)">SCC</text>
</g>
<g id="line2d_115">
<path d="M 1115.952 588.96 L 1119.484 588.96 L 1123.016 588.96 L 1126.548 588.96 L 1130.08 588.96 " clip-path="url(#p28123b45c0)" style="fill: none; stroke: #dd11ff; stroke-width: 3; stroke-linecap: square"/>
</g>
<g id="text_81">
<text style="font-size: 8px; font-family: 'DejaVu Sans', 'Liberation Sans', sans-serif; text-anchor: middle; fill: #ffffff" x="1123.016" y="586.802618" transform="rotate(-0 1123.016 586.802618)">FEV</text>
</g>
<g id="line2d_116">
<path d="M 119.928 577.44 L 123.46 577.44 L 126.992 577.44 L 130.524 577.44 L 134.056 577.44 " clip-path="url(#p28123b45c0)" style="fill: none; stroke: #ff1d00; stroke-width: 3; stroke-linecap: square"/>
</g>
<g id="text_82">
<text style="font-size: 8px; font-family: 'DejaVu Sans', 'Liberation Sans', sans-serif; text-anchor: middle; fill: #ffffff" x="126.992" y="575.001818" transform="rotate(-0 126.992 575.001818)">LYR</text>
</g>
<g id="line2d_117">
<path d="M 187.036 577.44 L 190.568 577.44 L 194.1 577.44 L 197.632 577.44 L 201.164 577.44 L 204.696 577.44 L 208.228 577.44 L 211.76 577.44 L 215.292 577.44 L 218.824 577.44 L 222.356 577.44 L 225.888 577.44 L 229.42 577.44 L 232.952 577.44 L 236.484 577.44 L 240.016 577.44 L 243.548 577.44 L 247.08 577.44 L 250.612 577.44 L 254.144 577.44 L 257.676 577.44 L 261.208 577.44 L 264.74 577.44 L 268.272 577.44 L 271.804 577.44 L 275.336 577.44 L 278.868 577.44 L 282.4 577.44 L 285.932 577.44 L 289.464 577.44 L 292.996 577.44 L 296.528 577.44 L 300.06 577.44 L 303.592 577.44 L 307.124 577.44 L 310.656 577.44 L 314.188 577.44 L 317.72 577.44 L 321.252 577.44 L 324.784 577.44 L 328.316 577.44 L 331.848 577.44 L 335.38 577.44 L 338.912 577.44 L 342.444 577.44 L 345.976 577.44 L 349.508 577.44 " clip-path="url(#p28123b45c0)" style="fill: none; stroke: #ff1d00; stroke-width: 3; stroke-linecap: square"/>
</g>
<g id="text_83">
<text style="font-size: 8px; font-family: 'DejaVu Sans', 'Liberation Sans', sans-serif; text-anchor: middle; fill: #ffffff" x="268.272" y="575.001818" transform="rotate(-0 268.272 575.001818)">JMC</text>
</g>
<g id="line2d_118">
<path d="M 367.168 577.44 L 370.7 577.44 L 374.232 577.44 L 377.764 577.44 L 381.296 577.44 L 384.828 577.44 L 388.36 577.44 L 391.892 577.44 L 395.424 577.44 L 398.956 577.44 L 402.488 577.44 L 406.02 577.44 L 409.552 577.44 L 413.084 577.44 L 416.616 577.44 L 420.148 577.44 L 423.68 577.44 L 427.212 577.44 L 430.744 577.44 L 434.276 577.44 L 437.808 577.44 L 441.34 577.44 " clip-path="url(#p28123b45c0)" style="fill: none; stroke: #ff1d00; stroke-width: 3; stroke-linecap: square"/>
</g>
<g id="text_84">
<text style="font-size: 8px; font-family: 'DejaVu Sans', 'Liberation Sans', sans-serif; text-anchor: middle; fill: #ffffff" x="402.488" y="575.001818" transform="rotate(-0 402.488 575.001818)">JPE</text>
</g>
<g id="line2d_119">
<path d="M 451.936 577.44 L 455.468 577.44 L 459 577.44 L 462.532 577.44 L 466.064 577.44 L 469.596 577.44 L 473.128 577.44 L 476.66 577.44 L 480.192 577.44 L 483.724 577.44 L 487.256 577.44 L 490.788 577.44 L 494.32 577.44 L 497.852 577.44 L 501.384 577.44 L 504.916 577.44 L 508.448 577.44 L 511.98 577.44 L 515.512 577.44 " clip-path="url(#p28123b45c0)" style="fill: none; stroke: #ff1d00; stroke-width: 3; stroke-linecap: square"/>
</g>
<g id="text_85">
<text style="font-size: 8px; font-family: 'DejaVu Sans', 'Liberation Sans', sans-serif; text-anchor: middle; fill: #ffffff" x="483.724" y="575.001818" transform="rotate(-0 483.724 575.001818)">PAU</text>
</g>
<g id="line2d_120">
<path d="M 526.108 577.44 L 529.64 577.44 L 533.172 577.44 L 536.704 577.44 L 540.236 577.44 L 543.768 577.44 L 547.3 577.44 L 550.832 577.44 L 554.364 577.44 L 557.896 577.44 L 561.428 577.44 L 564.96 577.44 L 568.492 577.44 L 572.024 577.44 L 575.556 577.44 L 579.088 577.44 L 582.62 577.44 L 586.152 577.44 L 589.684 577.44 L 593.216 577.44 " clip-path="url(#p28123b45c0)" style="fill: none; stroke: #ff1d00; stroke-width: 3; stroke-linecap: square"/>
</g>
<g id="text_86">
<text style="font-size: 8px; font-family: 'DejaVu Sans', 'Liberation Sans', sans-serif; text-anchor: middle; fill: #ffffff" x="557.896" y="575.001818" transform="rotate(-0 557.896 575.001818)">NIA</text>
</g>
<g id="line2d_121">
<path d="M 685.048 577.44 L 688.58 577.44 L 692.112 577.44 L 695.644 577.44 L 699.176 577.44 L 702.708 577.44 L 706.24 577.44 L 709.772 577.44 L 713.304 577.44 L 716.836 577.44 L 720.368 577.44 L 723.9 577.44 L 727.432 577.44 L 730.964 577.44 L 734.496 577.44 L 738.028 577.44 L 741.56 577.44 L 745.092 577.44 L 748.624 577.44 L 752.156 577.44 L 755.688 577.44 L 759.22 577.44 L 762.752 577.44 L 766.284 577.44 L 769.816 577.44 L 773.348 577.44 L 776.88 577.44 L 780.412 577.44 L 783.944 577.44 L 787.476 577.44 L 791.008 577.44 L 794.54 577.44 L 798.072 577.44 L 801.604 577.44 L 805.136 577.44 L 808.668 577.44 L 812.2 577.44 L 815.732 577.44 L 819.264 577.44 L 822.796 577.44 L 826.328 577.44 " clip-path="url(#p28123b45c0)" style="fill: none; stroke: #ff1d00; stroke-width: 3; stroke-linecap: square"/>
</g>
<g id="text_87">
<text style="font-size: 8px; font-family: 'DejaVu Sans', 'Liberation Sans', sans-serif; text-anchor: middle; fill: #ffffff" x="755.688" y="575.001818" transform="rotate(-0 755.688 575.001818)">STA</text>
</g>
<g id="line2d_122">
<path d="M 836.924 577.44 L 840.456 577.44 L 843.988 577.44 L 847.52 577.44 L 851.052 577.44 L 854.584 577.44 L 858.116 577.44 L 861.648 577.44 L 865.18 577.44 L 868.712 577.44 L 872.244 577.44 L 875.776 577.44 L 879.308 577.44 L 882.84 577.44 L 886.372 577.44 L 889.904 577.44 L 893.436 577.44 L 896.968 577.44 " clip-path="url(#p28123b45c0)" style="fill: none; stroke: #ff1d00; stroke-width: 3; stroke-linecap: square"/>
</g>
<g id="text_88">
<text style="font-size: 8px; font-family: 'DejaVu Sans', 'Liberation Sans', sans-serif; text-anchor: middle; fill: #ffffff" x="868.712" y="575.001818" transform="rotate(-0 868.712 575.001818)">NOO</text>
</g>
<g id="line2d_123">
<path d="M 907.564 577.44 L 911.096 577.44 L 914.628 577.44 L 918.16 577.44 L 921.692 577.44 L 925.224 577.44 L 928.756 577.44 L 932.288 577.44 L 935.82 577.44 L 939.352 577.44 L 942.884 577.44 L 946.416 577.44 L 949.948 577.44 L 953.48 577.44 L 957.012 577.44 L 960.544 577.44 L 964.076 577.44 L 967.608 577.44 L 971.14 577.44 L 974.672 577.44 L 978.204 577.44 L 981.736 577.44 L 985.268 577.44 L 988.8 577.44 L 992.332 577.44 L 995.864 577.44 L 999.396 577.44 L 1002.928 577.44 L 1006.46 577.44 L 1009.992 577.44 L 1013.524 577.44 L 1017.056 577.44 L 1020.588 577.44 L 1024.12 577.44 L 1027.652 577.44 L 1031.184 577.44 L 1034.716 577.44 L 1038.248 577.44 " clip-path="url(#p28123b45c0)" style="fill: none; stroke: #ff1d00; stroke-width: 3; stroke-linecap: square"/>
</g>
<g id="text_89">
<text style="font-size: 8px; font-family: 'DejaVu Sans', 'Liberation Sans', sans-serif; text-anchor: middle; fill: #ffffff" x="974.672" y="575.001818" transform="rotate(-0 974.672 575.001818)">COM</text>
</g>
<g id="line2d_124">
<path d="M 1052.376 577.44 L 1055.908 577.44 L 1059.44 577.44 L 1062.972 577.44 L 1066.504 577.44 " clip-path="url(#p28123b45c0)" style="fill: none; stroke: #ff1d00; stroke-width: 3; stroke-linecap: square"/>
</g>
<g id="text_90">
<text style="font-size: 8px; font-family: 'DejaVu Sans', 'Liberation Sans', sans-serif; text-anchor: middle; fill: #ffffff" x="1059.44" y="575.001818" transform="rotate(-0 1059.44 575.001818)">NCC</text>
</g>
<g id="line2d_125">
<path d="M 1119.484 577.44 L 1123.016 577.44 L 1126.548 577.44 L 1130.08 577.44 L 1133.612 577.44 " clip-path="url(#p28123b45c0)" style="fill: none; stroke: #ff1d00; stroke-width: 3; stroke-linecap: square"/>
</g>
<g id="text_91">
<text style="font-size: 8px; font-family: 'DejaVu Sans', 'Liberation Sans', sans-serif; text-anchor: middle; fill: #ffffff" x="1126.548" y="575.001818" transform="rotate(-0 1126.548 575.001818)">FED</text>
</g>
<g id="line2d_126">
<path d="M 141.12 565.2 L 144.652 565.2 L 148.184 565.2 L 151.716 565.2 L 155.248 565.2 " clip-path="url(#p28123b45c0)" style="fill: none; stroke: #ffb20d; stroke-width: 3; stroke-linecap: square"/>
</g>
<g id="text_92">
<text style="font-size: 8px; font-family: 'DejaVu Sans', 'Liberation Sans', sans-serif; text-anchor: middle; fill: #ffffff" x="148.184" y="563.921018" transform="rotate(-0 148.184 563.921018)">HVI</text>
</g>
<g id="line2d_127">
<path d="M 232.952 565.2 L 236.484 565.2 L 240.016 565.2 L 243.548 565.2 L 247.08 565.2 L 250.612 565.2 L 254.144 565.2 L 257.676 565.2 L 261.208 565.2 L 264.74 565.2 L 268.272 565.2 L 271.804 565.2 L 275.336 565.2 L 278.868 565.2 L 282.4 565.2 L 285.932 565.2 L 289.464 565.2 L 292.996 565.2 L 296.528 565.2 L 300.06 565.2 L 303.592 565.2 L 307.124 565.2 L 310.656 565.2 L 314.188 565.2 L 317.72 565.2 L 321.252 565.2 L 324.784 565.2 L 328.316 565.2 L 331.848 565.2 L 335.38 565.2 L 338.912 565.2 L 342.444 565.2 L 345.976 565.2 L 349.508 565.2 L 353.04 565.2 L 356.572 565.2 L 360.104 565.2 L 363.636 565.2 " clip-path="url(#p28123b45c0)" style="fill: none; stroke: #ffb20d; stroke-width: 3; stroke-linecap: square"/>
</g>
<g id="text_93">
<text style="font-size: 8px; font-family: 'DejaVu Sans', 'Liberation Sans', sans-serif; text-anchor: middle; fill: #ffffff" x="296.528" y="563.921018" transform="rotate(-0 296.528 563.921018)">ARI</text>
</g>
<g id="line2d_128">
<path d="M 374.232 565.2 L 377.764 565.2 L 381.296 565.2 L 384.828 565.2 L 388.36 565.2 " clip-path="url(#p28123b45c0)" style="fill: none; stroke: #ffb20d; stroke-width: 3; stroke-linecap: square"/>
</g>
<g id="text_94">
<text style="font-size: 8px; font-family: 'DejaVu Sans', 'Liberation Sans', sans-serif; text-anchor: middle; fill: #ffffff" x="381.296" y="563.921018" transform="rotate(-0 381.296 563.921018)">SZC</text>
</g>
<g id="line2d_129">
<path d="M 402.488 565.2 L 406.02 565.2 L 409.552 565.2 L 413.084 565.2 L 416.616 565.2 L 420.148 565.2 L 423.68 565.2 L 427.212 565.2 L 430.744 565.2 L 434.276 565.2 L 437.808 565.2 L 441.34 565.2 L 444.872 565.2 L 448.404 565.2 L 451.936 565.2 L 455.468 565.2 L 459 565.2 L 462.532 565.2 L 466.064 565.2 L 469.596 565.2 L 473.128 565.2 L 476.66 565.2 L 480.192 565.2 L 483.724 565.2 L 487.256 565.2 L 490.788 565.2 " clip-path="url(#p28123b45c0)" style="fill: none; stroke: #ffb20d; stroke-width: 3; stroke-linecap: square"/>
</g>
<g id="text_95">
<text style="font-size: 8px; font-family: 'DejaVu Sans', 'Liberation Sans', sans-serif; text-anchor: middle; fill: #ffffff" x="444.872" y="563.921018" transform="rotate(-0 444.872 563.921018)">CAP</text>
</g>
<g id="line2d_130">
<path d="M 582.62 565.2 L 586.152 565.2 L 589.684 565.2 L 593.216 565.2 L 596.748 565.2 " clip-path="url(#p28123b45c0)" style="fill: none; stroke: #ffb20d; stroke-width: 3; stroke-linecap: square"/>
</g>
<g id="text_96">
<text style="font-size: 8px; font-family: 'DejaVu Sans', 'Liberation Sans', sans-serif; text-anchor: middle; fill: #ffffff" x="589.684" y="563.921018" transform="rotate(-0 589.684 563.921018)">NUE</text>
</g>
<g id="line2d_131">
<path d="M 688.58 565.2 L 692.112 565.2 L 695.644 565.2 L 699.176 565.2 " clip-path="url(#p28123b45c0)" style="fill: none; stroke: #ffb20d; stroke-width: 3; stroke-linecap: square"/>
</g>
<g id="text_97">
<text style="font-size: 8px; font-family: 'DejaVu Sans', 'Liberation Sans', sans-serif; text-anchor: middle; fill: #ffffff" x="692.112" y="563.921018" transform="rotate(-0 692.112 563.921018)">OCT</text>
</g>
<g id="line2d_132">
<path d="M 713.304 565.2 L 716.836 565.2 L 720.368 565.2 L 723.9 565.2 L 727.432 565.2 L 730.964 565.2 L 734.496 565.2 L 738.028 565.2 L 741.56 565.2 L 745.092 565.2 L 748.624 565.2 L 752.156 565.2 L 755.688 565.2 L 759.22 565.2 L 762.752 565.2 L 766.284 565.2 L 769.816 565.2 L 773.348 565.2 L 776.88 565.2 L 780.412 565.2 L 783.944 565.2 L 787.476 565.2 L 791.008 565.2 L 794.54 565.2 L 798.072 565.2 L 801.604 565.2 L 805.136 565.2 L 808.668 565.2 " clip-path="url(#p28123b45c0)" style="fill: none; stroke: #ffb20d; stroke-width: 3; stroke-linecap: square"/>
</g>
<g id="text_98">
<text style="font-size: 8px; font-family: 'DejaVu Sans', 'Liberation Sans', sans-serif; text-anchor: middle; fill: #ffffff" x="762.752" y="563.921018" transform="rotate(-0 762.752 563.921018)">ORI</text>
</g>
<g id="line2d_133">
<path d="M 833.392 565.2 L 836.924 565.2 L 840.456 565.2 L 843.988 565.2 L 847.52 565.2 L 851.052 565.2 L 854.584 565.2 L 858.116 565.2 L 861.648 565.2 L 865.18 565.2 L 868.712 565.2 L 872.244 565.2 L 875.776 565.2 " clip-path="url(#p28123b45c0)" style="fill: none; stroke: #ffb20d; stroke-width: 3; stroke-linecap: square"/>
</g>
<g id="text_99">
<text style="font-size: 8px; font-family: 'DejaVu Sans', 'Liberation Sans', sans-serif; text-anchor: middle; fill: #ffffff" x="854.584" y="563.921018" transform="rotate(-0 854.584 563.921018)">AMO</text>
</g>
<g id="line2d_134">
<path d="M 896.968 565.2 L 900.5 565.2 L 904.032 565.2 L 907.564 565.2 L 911.096 565.2 " clip-path="url(#p28123b45c0)" style="fill: none; stroke: #ffb20d; stroke-width: 3; stroke-linecap: square"/>
</g>
<g id="text_100">
<text style="font-size: 8px; font-family: 'DejaVu Sans', 'Liberation Sans', sans-serif; text-anchor: middle; fill: #ffffff" x="904.032" y="563.921018" transform="rotate(-0 904.032 563.921018)">DPC</text>
</g>
<g id="line2d_135">
<path d="M 949.948 565.2 L 953.48 565.2 L 957.012 565.2 L 960.544 565.2 L 964.076 565.2 " clip-path="url(#p28123b45c0)" style="fill: none; stroke: #ffb20d; stroke-width: 3; stroke-linecap: square"/>
</g>
<g id="text_101">
<text style="font-size: 8px; font-family: 'DejaVu Sans', 'Liberation Sans', sans-serif; text-anchor: middle; fill: #ffffff" x="957.012" y="563.921018" transform="rotate(-0 957.012 563.921018)">XVI</text>
</g>
<g id="line2d_136">
<path d="M 1006.46 565.2 L 1009.992 565.2 L 1013.524 565.2 L 1017.056 565.2 L 1020.588 565.2 " clip-path="url(#p28123b45c0)" style="fill: none; stroke: #ffb20d; stroke-width: 3; stroke-linecap: square"/>
</g>
<g id="text_102">
<text style="font-size: 8px; font-family: 'DejaVu Sans', 'Liberation Sans', sans-serif; text-anchor: middle; fill: #ffffff" x="1013.524" y="563.921018" transform="rotate(-0 1013.524 563.921018)">QUA</text>
</g>
<g id="line2d_137">
<path d="M 1055.908 565.2 L 1059.44 565.2 L 1062.972 565.2 L 1066.504 565.2 L 1070.036 565.2 L 1073.568 565.2 L 1077.1 565.2 L 1080.632 565.2 L 1084.164 565.2 L 1087.696 565.2 L 1091.228 565.2 L 1094.76 565.2 L 1098.292 565.2 L 1101.824 565.2 L 1105.356 565.2 L 1108.888 565.2 L 1112.42 565.2 L 1115.952 565.2 L 1119.484 565.2 L 1123.016 565.2 L 1126.548 565.2 L 1130.08 565.2 L 1133.612 565.2 L 1137.144 565.2 L 1140.676 565.2 L 1144.208 565.2 L 1147.74 565.2 L 1151.272 565.2 L 1154.804 565.2 L 1158.336 565.2 L 1161.868 565.2 L 1165.4 565.2 L 1168.932 565.2 L 1172.464 565.2 L 1175.996 565.2 L 1179.528 565.2 L 1183.06 565.2 L 1186.592 565.2 " clip-path="url(#p28123b45c0)" style="fill: none; stroke: #ffb20d; stroke-width: 3; stroke-linecap: square"/>
</g>
<g id="text_103">
<text style="font-size: 8px; font-family: 'DejaVu Sans', 'Liberation Sans', sans-serif; text-anchor: middle; fill: #ffffff" x="1123.016" y="563.921018" transform="rotate(-0 1123.016 563.921018)">AAN</text>
</g>
<g id="line2d_138">
<path d="M 247.08 553.68 L 250.612 553.68 L 254.144 553.68 L 257.676 553.68 L 261.208 553.68 L 264.74 553.68 " clip-path="url(#p28123b45c0)" style="fill: none; stroke: #fff000; stroke-width: 3; stroke-linecap: square"/>
</g>
<g id="text_104">
<text style="font-size: 8px; font-family: 'DejaVu Sans', 'Liberation Sans', sans-serif; text-anchor: middle; fill: #ffffff" x="254.144" y="551.400218" transform="rotate(-0 254.144 551.400218)">TAH</text>
</g>
<g id="line2d_139">
<path d="M 296.528 553.68 L 300.06 553.68 L 303.592 553.68 L 307.124 553.68 L 310.656 553.68 L 314.188 553.68 L 317.72 553.68 L 321.252 553.68 " clip-path="url(#p28123b45c0)" style="fill: none; stroke: #fff000; stroke-width: 3; stroke-linecap: square"/>
</g>
<g id="text_105">
<text style="font-size: 8px; font-family: 'DejaVu Sans', 'Liberation Sans', sans-serif; text-anchor: middle; fill: #ffffff" x="310.656" y="551.400218" transform="rotate(-0 310.656 551.400218)">JEA</text>
</g>
<g id="line2d_140">
<path d="M 338.912 553.68 L 342.444 553.68 L 345.976 553.68 L 349.508 553.68 L 353.04 553.68 " clip-path="url(#p28123b45c0)" style="fill: none; stroke: #fff000; stroke-width: 3; stroke-linecap: square"/>
</g>
<g id="text_106">
<text style="font-size: 8px; font-family: 'DejaVu Sans', 'Liberation Sans', sans-serif; text-anchor: middle; fill: #ffffff" x="345.976" y="551.400218" transform="rotate(-0 345.976 551.400218)">JIP</text>
</g>
<g id="line2d_141">
<path d="M 381.296 553.68 L 384.828 553.68 L 388.36 553.68 L 391.892 553.68 " clip-path="url(#p28123b45c0)" style="fill: none; stroke: #fff000; stroke-width: 3; stroke-linecap: square"/>
</g>
<g id="text_107">
<text style="font-size: 8px; font-family: 'DejaVu Sans', 'Liberation Sans', sans-serif; text-anchor: middle; fill: #ffffff" x="388.36" y="551.400218" transform="rotate(-0 388.36 551.400218)">PPS</text>
</g>
<g id="line2d_142">
<path d="M 406.02 553.68 L 409.552 553.68 L 413.084 553.68 L 416.616 553.68 L 420.148 553.68 L 423.68 553.68 " clip-path="url(#p28123b45c0)" style="fill: none; stroke: #fff000; stroke-width: 3; stroke-linecap: square"/>
</g>
<g id="text_108">
<text style="font-size: 8px; font-family: 'DejaVu Sans', 'Liberation Sans', sans-serif; text-anchor: middle; fill: #ffffff" x="416.616" y="551.400218" transform="rotate(-0 416.616 551.400218)">ZCS</text>
</g>
<g id="line2d_143">
<path d="M 444.872 553.68 L 448.404 553.68 L 451.936 553.68 L 455.468 553.68 L 459 553.68 L 462.532 553.68 L 466.064 553.68 " clip-path="url(#p28123b45c0)" style="fill: none; stroke: #fff000; stroke-width: 3; stroke-linecap: square"/>
</g>
<g id="text_109">
<text style="font-size: 8px; font-family: 'DejaVu Sans', 'Liberation Sans', sans-serif; text-anchor: middle; fill: #ffffff" x="455.468" y="551.400218" transform="rotate(-0 455.468 551.400218)">GDR</text>
</g>
<g id="line2d_144">
<path d="M 692.112 553.68 L 695.644 553.68 L 699.176 553.68 L 702.708 553.68 L 706.24 553.68 L 709.772 553.68 " clip-path="url(#p28123b45c0)" style="fill: none; stroke: #fff000; stroke-width: 3; stroke-linecap: square"/>
</g>
<g id="text_110">
<text style="font-size: 8px; font-family: 'DejaVu Sans', 'Liberation Sans', sans-serif; text-anchor: middle; fill: #ffffff" x="699.176" y="551.400218" transform="rotate(-0 699.176 551.400218)">DRA</text>
</g>
<g id="line2d_145">
<path d="M 766.284 553.68 L 769.816 553.68 L 773.348 553.68 L 776.88 553.68 L 780.412 553.68 " clip-path="url(#p28123b45c0)" style="fill: none; stroke: #fff000; stroke-width: 3; stroke-linecap: square"/>
</g>
<g id="text_111">
<text style="font-size: 8px; font-family: 'DejaVu Sans', 'Liberation Sans', sans-serif; text-anchor: middle; fill: #ffffff" x="773.348" y="551.400218" transform="rotate(-0 773.348 551.400218)">LUM</text>
</g>
<g id="line2d_146">
<path d="M 794.54 553.68 L 798.072 553.68 L 801.604 553.68 L 805.136 553.68 L 808.668 553.68 " clip-path="url(#p28123b45c0)" style="fill: none; stroke: #fff000; stroke-width: 3; stroke-linecap: square"/>
</g>
<g id="text_112">
<text style="font-size: 8px; font-family: 'DejaVu Sans', 'Liberation Sans', sans-serif; text-anchor: middle; fill: #ffffff" x="801.604" y="551.400218" transform="rotate(-0 801.604 551.400218)">RPU</text>
</g>
<g id="line2d_147">
<path d="M 836.924 553.68 L 840.456 553.68 L 843.988 553.68 L 847.52 553.68 L 851.052 553.68 L 854.584 553.68 L 858.116 553.68 " clip-path="url(#p28123b45c0)" style="fill: none; stroke: #fff000; stroke-width: 3; stroke-linecap: square"/>
</g>
<g id="text_113">
<text style="font-size: 8px; font-family: 'DejaVu Sans', 'Liberation Sans', sans-serif; text-anchor: middle; fill: #ffffff" x="847.52" y="551.400218" transform="rotate(-0 847.52 551.400218)">THA</text>
</g>
<g id="line2d_148">
<path d="M 900.5 553.68 L 904.032 553.68 L 907.564 553.68 L 911.096 553.68 L 914.628 553.68 " clip-path="url(#p28123b45c0)" style="fill: none; stroke: #fff000; stroke-width: 3; stroke-linecap: square"/>
</g>
<g id="text_114">
<text style="font-size: 8px; font-family: 'DejaVu Sans', 'Liberation Sans', sans-serif; text-anchor: middle; fill: #ffffff" x="907.564" y="551.400218" transform="rotate(-0 907.564 551.400218)">PSU</text>
</g>
<g id="line2d_149">
<path d="M 1027.652 553.68 L 1031.184 553.68 L 1034.716 553.68 L 1038.248 553.68 L 1041.78 553.68 L 1045.312 553.68 L 1048.844 553.68 L 1052.376 553.68 L 1055.908 553.68 L 1059.44 553.68 L 1062.972 553.68 L 1066.504 553.68 L 1070.036 553.68 L 1073.568 553.68 L 1077.1 553.68 L 1080.632 553.68 L 1084.164 553.68 L 1087.696 553.68 " clip-path="url(#p28123b45c0)" style="fill: none; stroke: #fff000; stroke-width: 3; stroke-linecap: square"/>
</g>
<g id="text_115">
<text style="font-size: 8px; font-family: 'DejaVu Sans', 'Liberation Sans', sans-serif; text-anchor: middle; fill: #ffffff" x="1059.44" y="551.400218" transform="rotate(-0 1059.44 551.400218)">XCB</text>
</g>
<g id="line2d_150">
<path d="M 303.592 541.44 L 307.124 541.44 L 310.656 541.44 L 314.188 541.44 L 317.72 541.44 " clip-path="url(#p28123b45c0)" style="fill: none; stroke: #a4ff28; stroke-width: 3; stroke-linecap: square"/>
</g>
<g id="text_116">
<text style="font-size: 8px; font-family: 'DejaVu Sans', 'Liberation Sans', sans-serif; text-anchor: middle; fill: #ffffff" x="310.656" y="540.319418" transform="rotate(-0 310.656 540.319418)">JRC</text>
</g>
<g id="line2d_151">
<path d="M 384.828 541.44 L 388.36 541.44 L 391.892 541.44 L 395.424 541.44 L 398.956 541.44 " clip-path="url(#p28123b45c0)" style="fill: none; stroke: #a4ff28; stroke-width: 3; stroke-linecap: square"/>
</g>
<g id="text_117">
<text style="font-size: 8px; font-family: 'DejaVu Sans', 'Liberation Sans', sans-serif; text-anchor: middle; fill: #ffffff" x="391.892" y="540.319418" transform="rotate(-0 391.892 540.319418)">CAN</text>
</g>
<g id="line2d_152">
<path d="M 409.552 541.44 L 413.084 541.44 L 416.616 541.44 L 420.148 541.44 L 423.68 541.44 " clip-path="url(#p28123b45c0)" style="fill: none; stroke: #a4ff28; stroke-width: 3; stroke-linecap: square"/>
</g>
<g id="text_118">
<text style="font-size: 8px; font-family: 'DejaVu Sans', 'Liberation Sans', sans-serif; text-anchor: middle; fill: #ffffff" x="416.616" y="540.319418" transform="rotate(-0 416.616 540.319418)">FAN</text>
</g>
<g id="line2d_153">
<path d="M 448.404 541.44 L 451.936 541.44 L 455.468 541.44 L 459 541.44 L 462.532 541.44 L 466.064 541.44 L 469.596 541.44 L 473.128 541.44 L 476.66 541.44 L 480.192 541.44 L 483.724 541.44 L 487.256 541.44 L 490.788 541.44 L 494.32 541.44 L 497.852 541.44 L 501.384 541.44 L 504.916 541.44 L 508.448 541.44 L 511.98 541.44 L 515.512 541.44 L 519.044 541.44 L 522.576 541.44 L 526.108 541.44 L 529.64 541.44 L 533.172 541.44 " clip-path="url(#p28123b45c0)" style="fill: none; stroke: #a4ff28; stroke-width: 3; stroke-linecap: square"/>
</g>
<g id="text_119">
<text style="font-size: 8px; font-family: 'DejaVu Sans', 'Liberation Sans', sans-serif; text-anchor: middle; fill: #ffffff" x="490.788" y="540.319418" transform="rotate(-0 490.788 540.319418)">PER</text>
</g>
<g id="line2d_154">
<path d="M 699.176 541.44 L 702.708 541.44 L 706.24 541.44 L 709.772 541.44 L 713.304 541.44 L 716.836 541.44 L 720.368 541.44 L 723.9 541.44 L 727.432 541.44 L 730.964 541.44 L 734.496 541.44 L 738.028 541.44 L 741.56 541.44 L 745.092 541.44 L 748.624 541.44 L 752.156 541.44 L 755.688 541.44 L 759.22 541.44 L 762.752 541.44 L 766.284 541.44 L 769.816 541.44 L 773.348 541.44 L 776.88 541.44 L 780.412 541.44 L 783.944 541.44 L 787.476 541.44 L 791.008 541.44 L 794.54 541.44 L 798.072 541.44 L 801.604 541.44 L 805.136 541.44 L 808.668 541.44 L 812.2 541.44 L 815.732 541.44 " clip-path="url(#p28123b45c0)" style="fill: none; stroke: #a4ff28; stroke-width: 3; stroke-linecap: square"/>
</g>
<g id="text_120">
<text style="font-size: 8px; font-family: 'DejaVu Sans', 'Liberation Sans', sans-serif; text-anchor: middle; fill: #ffffff" x="755.688" y="540.319418" transform="rotate(-0 755.688 540.319418)">CTA</text>
</g>
<g id="line2d_155">
<path d="M 854.584 541.44 L 858.116 541.44 L 861.648 541.44 L 865.18 541.44 L 868.712 541.44 L 872.244 541.44 L 875.776 541.44 L 879.308 541.44 L 882.84 541.44 L 886.372 541.44 L 889.904 541.44 L 893.436 541.44 L 896.968 541.44 L 900.5 541.44 L 904.032 541.44 L 907.564 541.44 L 911.096 541.44 L 914.628 541.44 L 918.16 541.44 L 921.692 541.44 L 925.224 541.44 L 928.756 541.44 L 932.288 541.44 L 935.82 541.44 L 939.352 541.44 L 942.884 541.44 L 946.416 541.44 L 949.948 541.44 L 953.48 541.44 L 957.012 541.44 L 960.544 541.44 L 964.076 541.44 L 967.608 541.44 " clip-path="url(#p28123b45c0)" style="fill: none; stroke: #a4ff28; stroke-width: 3; stroke-linecap: square"/>
</g>
<g id="text_121">
<text style="font-size: 8px; font-family: 'DejaVu Sans', 'Liberation Sans', sans-serif; text-anchor: middle; fill: #ffffff" x="911.096" y="540.319418" transform="rotate(-0 911.096 540.319418)">HYD</text>
</g>
<g id="line2d_156">
<path d="M 1059.44 541.44 L 1062.972 541.44 L 1066.504 541.44 L 1070.036 541.44 L 1073.568 541.44 " clip-path="url(#p28123b45c0)" style="fill: none; stroke: #a4ff28; stroke-width: 3; stroke-linecap: square"/>
</g>
<g id="text_122">
<text style="font-size: 8px; font-family: 'DejaVu Sans', 'Liberation Sans', sans-serif; text-anchor: middle; fill: #ffffff" x="1066.504" y="540.319418" transform="rotate(-0 1066.504 540.319418)">XUM</text>
</g>
<g id="line2d_157">
<path d="M 310.656 529.92 L 314.188 529.92 L 317.72 529.92 L 321.252 529.92 L 324.784 529.92 " clip-path="url(#p28123b45c0)" style="fill: none; stroke: #59d200; stroke-width: 3; stroke-linecap: square"/>
</g>
<g id="text_123">
<text style="font-size: 8px; font-family: 'DejaVu Sans', 'Liberation Sans', sans-serif; text-anchor: middle; fill: #ffffff" x="317.72" y="527.798618" transform="rotate(-0 317.72 527.798618)">COR</text>
</g>
<g id="line2d_158">
<path d="M 416.616 529.92 L 420.148 529.92 L 423.68 529.92 L 427.212 529.92 L 430.744 529.92 L 434.276 529.92 L 437.808 529.92 L 441.34 529.92 L 444.872 529.92 L 448.404 529.92 L 451.936 529.92 L 455.468 529.92 L 459 529.92 L 462.532 529.92 L 466.064 529.92 L 469.596 529.92 L 473.128 529.92 L 476.66 529.92 L 480.192 529.92 L 483.724 529.92 L 487.256 529.92 L 490.788 529.92 L 494.32 529.92 L 497.852 529.92 L 501.384 529.92 L 504.916 529.92 L 508.448 529.92 L 511.98 529.92 L 515.512 529.92 L 519.044 529.92 L 522.576 529.92 L 526.108 529.92 " clip-path="url(#p28123b45c0)" style="fill: none; stroke: #59d200; stroke-width: 3; stroke-linecap: square"/>
</g>
<g id="text_124">
<text style="font-size: 8px; font-family: 'DejaVu Sans', 'Liberation Sans', sans-serif; text-anchor: middle; fill: #ffffff" x="473.128" y="527.798618" transform="rotate(-0 473.128 527.798618)">SDA</text>
</g>
<g id="line2d_159">
<path d="M 716.836 529.92 L 720.368 529.92 L 723.9 529.92 L 727.432 529.92 L 730.964 529.92 L 734.496 529.92 L 738.028 529.92 L 741.56 529.92 L 745.092 529.92 L 748.624 529.92 L 752.156 529.92 L 755.688 529.92 L 759.22 529.92 L 762.752 529.92 L 766.284 529.92 L 769.816 529.92 L 773.348 529.92 L 776.88 529.92 L 780.412 529.92 L 783.944 529.92 L 787.476 529.92 L 791.008 529.92 L 794.54 529.92 " clip-path="url(#p28123b45c0)" style="fill: none; stroke: #59d200; stroke-width: 3; stroke-linecap: square"/>
</g>
<g id="text_125">
<text style="font-size: 8px; font-family: 'DejaVu Sans', 'Liberation Sans', sans-serif; text-anchor: middle; fill: #ffffff" x="755.688" y="527.798618" transform="rotate(-0 755.688 527.798618)">LMI</text>
</g>
<g id="line2d_160">
<path d="M 805.136 529.92 L 808.668 529.92 L 812.2 529.92 L 815.732 529.92 L 819.264 529.92 L 822.796 529.92 L 826.328 529.92 L 829.86 529.92 L 833.392 529.92 L 836.924 529.92 L 840.456 529.92 L 843.988 529.92 L 847.52 529.92 L 851.052 529.92 L 854.584 529.92 L 858.116 529.92 L 861.648 529.92 L 865.18 529.92 L 868.712 529.92 L 872.244 529.92 L 875.776 529.92 L 879.308 529.92 " clip-path="url(#p28123b45c0)" style="fill: none; stroke: #59d200; stroke-width: 3; stroke-linecap: square"/>
</g>
<g id="text_126">
<text style="font-size: 8px; font-family: 'DejaVu Sans', 'Liberation Sans', sans-serif; text-anchor: middle; fill: #ffffff" x="840.456" y="527.798618" transform="rotate(-0 840.456 527.798618)">LEO</text>
</g>
<g id="line2d_161">
<path d="M 911.096 529.92 L 914.628 529.92 L 918.16 529.92 L 921.692 529.92 L 925.224 529.92 L 928.756 529.92 " clip-path="url(#p28123b45c0)" style="fill: none; stroke: #59d200; stroke-width: 3; stroke-linecap: square"/>
</g>
<g id="text_127">
<text style="font-size: 8px; font-family: 'DejaVu Sans', 'Liberation Sans', sans-serif; text-anchor: middle; fill: #ffffff" x="918.16" y="527.798618" transform="rotate(-0 918.16 527.798618)">EHY</text>
</g>
<g id="line2d_162">
<path d="M 1073.568 529.92 L 1077.1 529.92 L 1080.632 529.92 L 1084.164 529.92 L 1087.696 529.92 " clip-path="url(#p28123b45c0)" style="fill: none; stroke: #59d200; stroke-width: 3; stroke-linecap: square"/>
</g>
<g id="text_128">
<text style="font-size: 8px; font-family: 'DejaVu Sans', 'Liberation Sans', sans-serif; text-anchor: middle; fill: #ffffff" x="1080.632" y="527.798618" transform="rotate(-0 1080.632 527.798618)">ECV</text>
</g>
<g id="line2d_163">
<path d="M 427.212 518.4 L 430.744 518.4 L 434.276 518.4 L 437.808 518.4 L 441.34 518.4 " clip-path="url(#p28123b45c0)" style="fill: none; stroke: #00fb73; stroke-width: 3; stroke-linecap: square"/>
</g>
<g id="text_129">
<text style="font-size: 8px; font-family: 'DejaVu Sans', 'Liberation Sans', sans-serif; text-anchor: middle; fill: #ffffff" x="434.276" y="515.997818" transform="rotate(-0 434.276 515.997818)">JXA</text>
</g>
<g id="line2d_164">
<path d="M 473.128 518.4 L 476.66 518.4 L 480.192 518.4 L 483.724 518.4 L 487.256 518.4 L 490.788 518.4 L 494.32 518.4 L 497.852 518.4 L 501.384 518.4 L 504.916 518.4 L 508.448 518.4 L 511.98 518.4 L 515.512 518.4 L 519.044 518.4 L 522.576 518.4 L 526.108 518.4 L 529.64 518.4 L 533.172 518.4 L 536.704 518.4 L 540.236 518.4 L 543.768 518.4 L 547.3 518.4 L 550.832 518.4 L 554.364 518.4 " clip-path="url(#p28123b45c0)" style="fill: none; stroke: #00fb73; stroke-width: 3; stroke-linecap: square"/>
</g>
<g id="text_130">
<text style="font-size: 8px; font-family: 'DejaVu Sans', 'Liberation Sans', sans-serif; text-anchor: middle; fill: #ffffff" x="515.512" y="515.997818" transform="rotate(-0 515.512 515.997818)">KCG</text>
</g>
<g id="line2d_165">
<path d="M 773.348 518.4 L 776.88 518.4 L 780.412 518.4 L 783.944 518.4 L 787.476 518.4 L 791.008 518.4 L 794.54 518.4 L 798.072 518.4 L 801.604 518.4 L 805.136 518.4 L 808.668 518.4 L 812.2 518.4 L 815.732 518.4 L 819.264 518.4 L 822.796 518.4 L 826.328 518.4 L 829.86 518.4 L 833.392 518.4 L 836.924 518.4 L 840.456 518.4 L 843.988 518.4 L 847.52 518.4 L 851.052 518.4 L 854.584 518.4 L 858.116 518.4 L 861.648 518.4 L 865.18 518.4 L 868.712 518.4 L 872.244 518.4 L 875.776 518.4 L 879.308 518.4 L 882.84 518.4 L 886.372 518.4 L 889.904 518.4 L 893.436 518.4 " clip-path="url(#p28123b45c0)" style="fill: none; stroke: #00fb73; stroke-width: 3; stroke-linecap: square"/>
</g>
<g id="text_131">
<text style="font-size: 8px; font-family: 'DejaVu Sans', 'Liberation Sans', sans-serif; text-anchor: middle; fill: #ffffff" x="833.392" y="515.997818" transform="rotate(-0 833.392 515.997818)">AND</text>
</g>
<g id="line2d_166">
<path d="M 911.096 518.4 L 914.628 518.4 L 918.16 518.4 L 921.692 518.4 L 925.224 518.4 " clip-path="url(#p28123b45c0)" style="fill: none; stroke: #00fb73; stroke-width: 3; stroke-linecap: square"/>
</g>
<g id="text_132">
<text style="font-size: 8px; font-family: 'DejaVu Sans', 'Liberation Sans', sans-serif; text-anchor: middle; fill: #ffffff" x="918.16" y="515.997818" transform="rotate(-0 918.16 515.997818)">DAD</text>
</g>
<g id="line2d_167">
<path d="M 430.744 506.16 L 434.276 506.16 L 437.808 506.16 L 441.34 506.16 L 444.872 506.16 L 448.404 506.16 L 451.936 506.16 L 455.468 506.16 L 459 506.16 L 462.532 506.16 L 466.064 506.16 L 469.596 506.16 L 473.128 506.16 L 476.66 506.16 L 480.192 506.16 L 483.724 506.16 L 487.256 506.16 L 490.788 506.16 L 494.32 506.16 L 497.852 506.16 L 501.384 506.16 L 504.916 506.16 L 508.448 506.16 L 511.98 506.16 L 515.512 506.16 L 519.044 506.16 L 522.576 506.16 L 526.108 506.16 " clip-path="url(#p28123b45c0)" style="fill: none; stroke: #00e0ff; stroke-width: 3; stroke-linecap: square"/>
</g>
<g id="text_133">
<text style="font-size: 8px; font-family: 'DejaVu Sans', 'Liberation Sans', sans-serif; text-anchor: middle; fill: #ffffff" x="480.192" y="504.917018" transform="rotate(-0 480.192 504.917018)">ERI</text>
</g>
<g id="line2d_168">
<path d="M 787.476 506.16 L 791.008 506.16 L 794.54 506.16 L 798.072 506.16 L 801.604 506.16 L 805.136 506.16 " clip-path="url(#p28123b45c0)" style="fill: none; stroke: #00e0ff; stroke-width: 3; stroke-linecap: square"/>
</g>
<g id="text_134">
<text style="font-size: 8px; font-family: 'DejaVu Sans', 'Liberation Sans', sans-serif; text-anchor: middle; fill: #ffffff" x="798.072" y="504.917018" transform="rotate(-0 798.072 504.917018)">SLD</text>
</g>
<g id="line2d_169">
<path d="M 865.18 506.16 L 868.712 506.16 L 872.244 506.16 L 875.776 506.16 L 879.308 506.16 " clip-path="url(#p28123b45c0)" style="fill: none; stroke: #00e0ff; stroke-width: 3; stroke-linecap: square"/>
</g>
<g id="text_135">
<text style="font-size: 8px; font-family: 'DejaVu Sans', 'Liberation Sans', sans-serif; text-anchor: middle; fill: #ffffff" x="872.244" y="504.917018" transform="rotate(-0 872.244 504.917018)">ORS</text>
</g>
<g id="line2d_170">
<path d="M 918.16 506.16 L 921.692 506.16 L 925.224 506.16 L 928.756 506.16 L 932.288 506.16 L 935.82 506.16 L 939.352 506.16 L 942.884 506.16 L 946.416 506.16 L 949.948 506.16 L 953.48 506.16 " clip-path="url(#p28123b45c0)" style="fill: none; stroke: #00e0ff; stroke-width: 3; stroke-linecap: square"/>
</g>
<g id="text_136">
<text style="font-size: 8px; font-family: 'DejaVu Sans', 'Liberation Sans', sans-serif; text-anchor: middle; fill: #ffffff" x="935.82" y="504.917018" transform="rotate(-0 935.82 504.917018)">GEM</text>
</g>
<g id="line2d_171">
<path d="M 801.604 494.64 L 805.136 494.64 L 808.668 494.64 L 812.2 494.64 L 815.732 494.64 " clip-path="url(#p28123b45c0)" style="fill: none; stroke: #000ecd; stroke-width: 3; stroke-linecap: square"/>
</g>
<g id="text_137">
<text style="font-size: 8px; font-family: 'DejaVu Sans', 'Liberation Sans', sans-serif; text-anchor: middle; fill: #ffffff" x="808.668" y="492.396218" transform="rotate(-0 808.668 492.396218)">KUM</text>
</g>
<g id="line2d_172">
<path d="M 1003.68 606.6 L 1003.68 570.42 L 1003.68 534.24 L 1003.68 498.06 L 1003.68 461.88 " clip-path="url(#p28123b45c0)" style="fill: none; stroke-dasharray: 1.5,2.475; stroke-dashoffset: 0; stroke: #ffffff; stroke-opacity: 0.3; stroke-width: 1.5"/>
</g>
<g id="line2d_173">
<path d="M 1114.56 606.6 L 1114.56 570.42 L 1114.56 534.24 L 1114.56 498.06 L 1114.56 461.88 " clip-path="url(#p28123b45c0)" style="fill: none; stroke-dasharray: 1.5,2.475; stroke-dashoffset: 0; stroke: #ffffff; stroke-opacity: 0.3; stroke-width: 1.5"/>
</g>
<g id="line2d_174">
<path d="M 1214.64 606.6 L 1214.64 570.42 L 1214.64 534.24 L 1214.64 498.06 L 1214.64 461.88 " clip-path="url(#p28123b45c0)" style="fill: none; stroke-dasharray: 1.5,2.475; stroke-dashoffset: 0; stroke: #ffffff; stroke-opacity: 0.3; stroke-width: 1.5"/>
</g>
<g id="line2d_175">
<path d="M 53.28 606.6 L 53.28 570.42 L 53.28 534.24 L 53.28 498.06 L 53.28 461.88 " clip-path="url(#p28123b45c0)" style="fill: none; stroke-dasharray: 1.5,2.475; stroke-dashoffset: 0; stroke: #ffffff; stroke-opacity: 0.3; stroke-width: 1.5"/>
</g>
<g id="line2d_176">
<path d="M 156.96 606.6 L 156.96 570.42 L 156.96 534.24 L 156.96 498.06 L 156.96 461.88 " clip-path="url(#p28123b45c0)" style="fill: none; stroke-dasharray: 1.5,2.475; stroke-dashoffset: 0; stroke: #ffffff; stroke-opacity: 0.3; stroke-width: 1.5"/>
</g>
<g id="line2d_177">
<path d="M 262.8 606.6 L 262.8 570.42 L 262.8 534.24 L 262.8 498.06 L 262.8 461.88 " clip-path="url(#p28123b45c0)" style="fill: none; stroke-dasharray: 1.5,2.475; stroke-dashoffset: 0; stroke: #ffffff; stroke-opacity: 0.3; stroke-width: 1.5"/>
</g>
<g id="line2d_178">
<path d="M 363.6 606.6 L 363.6 570.42 L 363.6 534.24 L 363.6 498.06 L 363.6 461.88 " clip-path="url(#p28123b45c0)" style="fill: none; stroke-dasharray: 1.5,2.475; stroke-dashoffset: 0; stroke: #ffffff; stroke-opacity: 0.3; stroke-width: 1.5"/>
</g>
<g id="line2d_179">
<path d="M 468 606.6 L 468 570.42 L 468 534.24 L 468 498.06 L 468 461.88 " clip-path="url(#p28123b45c0)" style="fill: none; stroke-dasharray: 1.5,2.475; stroke-dashoffset: 0; stroke: #ffffff; stroke-opacity: 0.3; stroke-width: 1.5"/>
</g>
<g id="line2d_180">
<path d="M 573.84 606.6 L 573.84 570.42 L 573.84 534.24 L 573.84 498.06 L 573.84 461.88 " clip-path="url(#p28123b45c0)" style="fill: none; stroke-dasharray: 1.5,2.475; stroke-dashoffset: 0; stroke: #ffffff; stroke-opacity: 0.3; stroke-width: 1.5"/>
</g>
<g id="line2d_181">
<path d="M 676.8 606.6 L 676.8 570.42 L 676.8 534.24 L 676.8 498.06 L 676.8 461.88 " clip-path="url(#p28123b45c0)" style="fill: none; stroke-dasharray: 1.5,2.475; stroke-dashoffset: 0; stroke: #ffffff; stroke-opacity: 0.3; stroke-width: 1.5"/>
</g>
<g id="line2d_182">
<path d="M 785.52 606.6 L 785.52 570.42 L 785.52 534.24 L 785.52 498.06 L 785.52 461.88 " clip-path="url(#p28123b45c0)" style="fill: none; stroke-dasharray: 1.5,2.475; stroke-dashoffset: 0; stroke: #ffffff; stroke-opacity: 0.3; stroke-width: 1.5"/>
</g>
<g id="line2d_183">
<path d="M 892.08 606.6 L 892.08 570.42 L 892.08 534.24 L 892.08 498.06 L 892.08 461.88 " clip-path="url(#p28123b45c0)" style="fill: none; stroke-dasharray: 1.5,2.475; stroke-dashoffset: 0; stroke: #ffffff; stroke-opacity: 0.3; stroke-width: 1.5"/>
</g>
<g id="PathCollection_4">
<g clip-path="url(#p28123b45c0)">
<path d="M -3 0 L 3 0 M 0 3 L 0 -3" transform="translate(84.2548 600.48)" style="fill: #ffffff; stroke: #ffffff; stroke-width: 1.5"/>
</g>
</g>
<g id="PathCollection_5">
<g clip-path="url(#p28123b45c0)">
<path d="M -3 0 L 3 0 M 0 3 L 0 -3" transform="translate(176.44 600.48)" style="fill: #ffffff; stroke: #ffffff; stroke-width: 1.5"/>
</g>
</g>
<g id="PathCollection_6">
<g clip-path="url(#p28123b45c0)">
<path d="M -3 0 L 3 0 M 0 3 L 0 -3" transform="translate(370.7 600.48)" style="fill: #ffffff; stroke: #ffffff; stroke-width: 1.5"/>
</g>
</g>
<g id="PathCollection_7">
<g clip-path="url(#p28123b45c0)">
<path d="M -3 0 L 3 0 M 0 3 L 0 -3" transform="translate(511.98 600.48)" style="fill: #ffffff; stroke: #ffffff; stroke-width: 1.5"/>
</g>
</g>
<g id="PathCollection_8">
<g clip-path="url(#p28123b45c0)">
<path d="M -3 0 L 3 0 M 0 3 L 0 -3" transform="translate(602.3992 600.48)" style="fill: #ffffff; stroke: #ffffff; stroke-width: 1.5"/>
</g>
</g>
<g id="PathCollection_9">
<g clip-path="url(#p28123b45c0)">
<path d="M -3 0 L 3 0 M 0 3 L 0 -3" transform="translate(695.644 600.48)" style="fill: #ffffff; stroke: #ffffff; stroke-width: 1.5"/>
</g>
</g>
<g id="PathCollection_10">
<g clip-path="url(#p28123b45c0)">
<path d="M -3 0 L 3 0 M 0 3 L 0 -3" transform="translate(712.421 600.48)" style="fill: #ffffff; stroke: #ffffff; stroke-width: 1.5"/>
</g>
</g>
<g id="PathCollection_11">
<g clip-path="url(#p28123b45c0)">
<path d="M -3 0 L 3 0 M 0 3 L 0 -3" transform="translate(806.1956 600.48)" style="fill: #ffffff; stroke: #ffffff; stroke-width: 1.5"/>
</g>
</g>
<g id="PathCollection_12">
<g clip-path="url(#p28123b45c0)">
<path d="M -3 0 L 3 0 M 0 3 L 0 -3" transform="translate(935.1136 600.48)" style="fill: #ffffff; stroke: #ffffff; stroke-width: 1.5"/>
</g>
</g>
<g id="PathCollection_13">
<g clip-path="url(#p28123b45c0)">
<path d="M -3 0 L 3 0 M 0 3 L 0 -3" transform="translate(968.6676 600.48)" style="fill: #ffffff; stroke: #ffffff; stroke-width: 1.5"/>
</g>
</g>
<g id="PathCollection_14">
<g clip-path="url(#p28123b45c0)">
<path d="M -3 0 L 3 0 M 0 3 L 0 -3" transform="translate(1019.8816 600.48)" style="fill: #ffffff; stroke: #ffffff; stroke-width: 1.5"/>
</g>
</g>
<g id="PathCollection_15">
<g clip-path="url(#p28123b45c0)">
<path d="M -3 0 L 3 0 M 0 3 L 0 -3" transform="translate(1070.036 600.48)" style="fill: #ffffff; stroke: #ffffff; stroke-width: 1.5"/>
</g>
</g>
<g id="PathCollection_16">
<g clip-path="url(#p28123b45c0)">
<path d="M -3 0 L 3 0 M 0 3 L 0 -3" transform="translate(1105.356 600.48)" style="fill: #ffffff; stroke: #ffffff; stroke-width: 1.5"/>
</g>
</g>
<g id="PathCollection_17">
<g clip-path="url(#p28123b45c0)">
<path d="M -3 0 L 3 0 M 0 3 L 0 -3" transform="translate(1250.168 600.48)" style="fill: #ffffff; stroke: #ffffff; stroke-width: 1.5"/>
</g>
</g>
<g id="PathCollection_18">
<g clip-path="url(#p28123b45c0)">
<path d="M -3 0 L 3 0 M 0 3 L 0 -3" transform="translate(1274.892 600.48)" style="fill: #ffffff; stroke: #ffffff; stroke-width: 1.5"/>
</g>
</g>
<g id="PathCollection_19">
<g clip-path="url(#p28123b45c0)">
<path d="M -3 0 L 3 0 M 0 3 L 0 -3" transform="translate(126.992 588.96)" style="fill: #ffffff; stroke: #ffffff; stroke-width: 1.5"/>
</g>
</g>
<g id="PathCollection_20">
<g clip-path="url(#p28123b45c0)">
<path d="M -3 0 L 3 0 M 0 3 L 0 -3" transform="translate(187.036 588.96)" style="fill: #ffffff; stroke: #ffffff; stroke-width: 1.5"/>
</g>
</g>
<g id="PathCollection_21">
<g clip-path="url(#p28123b45c0)">
<path d="M -3 0 L 3 0 M 0 3 L 0 -3" transform="translate(235.4244 588.96)" style="fill: #ffffff; stroke: #ffffff; stroke-width: 1.5"/>
</g>
</g>
<g id="PathCollection_22">
<g clip-path="url(#p28123b45c0)">
<path d="M -3 0 L 3 0 M 0 3 L 0 -3" transform="translate(317.72 588.96)" style="fill: #ffffff; stroke: #ffffff; stroke-width: 1.5"/>
</g>
</g>
<g id="PathCollection_23">
<g clip-path="url(#p28123b45c0)">
<path d="M -3 0 L 3 0 M 0 3 L 0 -3" transform="translate(434.276 588.96)" style="fill: #ffffff; stroke: #ffffff; stroke-width: 1.5"/>
</g>
</g>
<g id="PathCollection_24">
<g clip-path="url(#p28123b45c0)">
<path d="M -3 0 L 3 0 M 0 3 L 0 -3" transform="translate(519.044 588.96)" style="fill: #ffffff; stroke: #ffffff; stroke-width: 1.5"/>
</g>
</g>
<g id="PathCollection_25">
<g clip-path="url(#p28123b45c0)">
<path d="M -3 0 L 3 0 M 0 3 L 0 -3" transform="translate(573.79 588.96)" style="fill: #ffffff; stroke: #ffffff; stroke-width: 1.5"/>
</g>
</g>
<g id="PathCollection_26">
<g clip-path="url(#p28123b45c0)">
<path d="M -3 0 L 3 0 M 0 3 L 0 -3" transform="translate(678.6904 588.96)" style="fill: #ffffff; stroke: #ffffff; stroke-width: 1.5"/>
</g>
</g>
<g id="PathCollection_27">
<g clip-path="url(#p28123b45c0)">
<path d="M -3 0 L 3 0 M 0 3 L 0 -3" transform="translate(727.432 588.96)" style="fill: #ffffff; stroke: #ffffff; stroke-width: 1.5"/>
</g>
</g>
<g id="PathCollection_28">
<g clip-path="url(#p28123b45c0)">
<path d="M -3 0 L 3 0 M 0 3 L 0 -3" transform="translate(832.6856 588.96)" style="fill: #ffffff; stroke: #ffffff; stroke-width: 1.5"/>
</g>
</g>
<g id="PathCollection_29">
<g clip-path="url(#p28123b45c0)">
<path d="M -3 0 L 3 0 M 0 3 L 0 -3" transform="translate(904.032 588.96)" style="fill: #ffffff; stroke: #ffffff; stroke-width: 1.5"/>
</g>
</g>
<g id="PathCollection_30">
<g clip-path="url(#p28123b45c0)">
<path d="M -3 0 L 3 0 M 0 3 L 0 -3" transform="translate(939.352 588.96)" style="fill: #ffffff; stroke: #ffffff; stroke-width: 1.5"/>
</g>
</g>
<g id="PathCollection_31">
<g clip-path="url(#p28123b45c0)">
<path d="M -3 0 L 3 0 M 0 3 L 0 -3" transform="translate(974.672 588.96)" style="fill: #ffffff; stroke: #ffffff; stroke-width: 1.5"/>
</g>
</g>
<g id="PathCollection_32">
<g clip-path="url(#p28123b45c0)">
<path d="M -3 0 L 3 0 M 0 3 L 0 -3" transform="translate(1012.8176 588.96)" style="fill: #ffffff; stroke: #ffffff; stroke-width: 1.5"/>
</g>
</g>
<g id="PathCollection_33">
<g clip-path="url(#p28123b45c0)">
<path d="M -3 0 L 3 0 M 0 3 L 0 -3" transform="translate(1059.44 588.96)" style="fill: #ffffff; stroke: #ffffff; stroke-width: 1.5"/>
</g>
</g>
<g id="PathCollection_34">
<g clip-path="url(#p28123b45c0)">
<path d="M -3 0 L 3 0 M 0 3 L 0 -3" transform="translate(1123.016 588.96)" style="fill: #ffffff; stroke: #ffffff; stroke-width: 1.5"/>
</g>
</g>
<g id="PathCollection_35">
<g clip-path="url(#p28123b45c0)">
<path d="M -3 0 L 3 0 M 0 3 L 0 -3" transform="translate(128.4048 577.44)" style="fill: #ffffff; stroke: #ffffff; stroke-width: 1.5"/>
</g>
</g>
<g id="PathCollection_36">
<g clip-path="url(#p28123b45c0)">
<path d="M -3 0 L 3 0 M 0 3 L 0 -3" transform="translate(275.336 577.44)" style="fill: #ffffff; stroke: #ffffff; stroke-width: 1.5"/>
</g>
</g>
<g id="PathCollection_37">
<g clip-path="url(#p28123b45c0)">
<path d="M -3 0 L 3 0 M 0 3 L 0 -3" transform="translate(395.424 577.44)" style="fill: #ffffff; stroke: #ffffff; stroke-width: 1.5"/>
</g>
</g>
<g id="PathCollection_38">
<g clip-path="url(#p28123b45c0)">
<path d="M -3 0 L 3 0 M 0 3 L 0 -3" transform="translate(494.32 577.44)" style="fill: #ffffff; stroke: #ffffff; stroke-width: 1.5"/>
</g>
</g>
<g id="PathCollection_39">
<g clip-path="url(#p28123b45c0)">
<path d="M -3 0 L 3 0 M 0 3 L 0 -3" transform="translate(536.704 577.44)" style="fill: #ffffff; stroke: #ffffff; stroke-width: 1.5"/>
</g>
</g>
<g id="PathCollection_40">
<g clip-path="url(#p28123b45c0)">
<path d="M -3 0 L 3 0 M 0 3 L 0 -3" transform="translate(776.88 577.44)" style="fill: #ffffff; stroke: #ffffff; stroke-width: 1.5"/>
</g>
</g>
<g id="PathCollection_41">
<g clip-path="url(#p28123b45c0)">
<path d="M -3 0 L 3 0 M 0 3 L 0 -3" transform="translate(879.308 577.44)" style="fill: #ffffff; stroke: #ffffff; stroke-width: 1.5"/>
</g>
</g>
<g id="PathCollection_42">
<g clip-path="url(#p28123b45c0)">
<path d="M -3 0 L 3 0 M 0 3 L 0 -3" transform="translate(942.1776 577.44)" style="fill: #ffffff; stroke: #ffffff; stroke-width: 1.5"/>
</g>
</g>
<g id="PathCollection_43">
<g clip-path="url(#p28123b45c0)">
<path d="M -3 0 L 3 0 M 0 3 L 0 -3" transform="translate(1059.44 577.44)" style="fill: #ffffff; stroke: #ffffff; stroke-width: 1.5"/>
</g>
</g>
<g id="PathCollection_44">
<g clip-path="url(#p28123b45c0)">
<path d="M -3 0 L 3 0 M 0 3 L 0 -3" transform="translate(1126.548 577.44)" style="fill: #ffffff; stroke: #ffffff; stroke-width: 1.5"/>
</g>
</g>
<g id="PathCollection_45">
<g clip-path="url(#p28123b45c0)">
<path d="M -3 0 L 3 0 M 0 3 L 0 -3" transform="translate(148.184 565.2)" style="fill: #ffffff; stroke: #ffffff; stroke-width: 1.5"/>
</g>
</g>
<g id="PathCollection_46">
<g clip-path="url(#p28123b45c0)">
<path d="M -3 0 L 3 0 M 0 3 L 0 -3" transform="translate(290.8768 565.2)" style="fill: #ffffff; stroke: #ffffff; stroke-width: 1.5"/>
</g>
</g>
<g id="PathCollection_47">
<g clip-path="url(#p28123b45c0)">
<path d="M -3 0 L 3 0 M 0 3 L 0 -3" transform="translate(381.296 565.2)" style="fill: #ffffff; stroke: #ffffff; stroke-width: 1.5"/>
</g>
</g>
<g id="PathCollection_48">
<g clip-path="url(#p28123b45c0)">
<path d="M -3 0 L 3 0 M 0 3 L 0 -3" transform="translate(462.532 565.2)" style="fill: #ffffff; stroke: #ffffff; stroke-width: 1.5"/>
</g>
</g>
<g id="PathCollection_49">
<g clip-path="url(#p28123b45c0)">
<path d="M -3 0 L 3 0 M 0 3 L 0 -3" transform="translate(589.684 565.2)" style="fill: #ffffff; stroke: #ffffff; stroke-width: 1.5"/>
</g>
</g>
<g id="PathCollection_50">
<g clip-path="url(#p28123b45c0)">
<path d="M -3 0 L 3 0 M 0 3 L 0 -3" transform="translate(693.1716 565.2)" style="fill: #ffffff; stroke: #ffffff; stroke-width: 1.5"/>
</g>
</g>
<g id="PathCollection_51">
<g clip-path="url(#p28123b45c0)">
<path d="M -3 0 L 3 0 M 0 3 L 0 -3" transform="translate(751.4496 565.2)" style="fill: #ffffff; stroke: #ffffff; stroke-width: 1.5"/>
</g>
</g>
<g id="PathCollection_52">
<g clip-path="url(#p28123b45c0)">
<path d="M -3 0 L 3 0 M 0 3 L 0 -3" transform="translate(858.116 565.2)" style="fill: #ffffff; stroke: #ffffff; stroke-width: 1.5"/>
</g>
</g>
<g id="PathCollection_53">
<g clip-path="url(#p28123b45c0)">
<path d="M -3 0 L 3 0 M 0 3 L 0 -3" transform="translate(904.032 565.2)" style="fill: #ffffff; stroke: #ffffff; stroke-width: 1.5"/>
</g>
</g>
<g id="PathCollection_54">
<g clip-path="url(#p28123b45c0)">
<path d="M -3 0 L 3 0 M 0 3 L 0 -3" transform="translate(957.012 565.2)" style="fill: #ffffff; stroke: #ffffff; stroke-width: 1.5"/>
</g>
</g>
<g id="PathCollection_55">
<g clip-path="url(#p28123b45c0)">
<path d="M -3 0 L 3 0 M 0 3 L 0 -3" transform="translate(1013.524 565.2)" style="fill: #ffffff; stroke: #ffffff; stroke-width: 1.5"/>
</g>
</g>
<g id="PathCollection_56">
<g clip-path="url(#p28123b45c0)">
<path d="M -3 0 L 3 0 M 0 3 L 0 -3" transform="translate(1115.952 565.2)" style="fill: #ffffff; stroke: #ffffff; stroke-width: 1.5"/>
</g>
</g>
<g id="PathCollection_57">
<g clip-path="url(#p28123b45c0)">
<path d="M -3 0 L 3 0 M 0 3 L 0 -3" transform="translate(259.0888 553.68)" style="fill: #ffffff; stroke: #ffffff; stroke-width: 1.5"/>
</g>
</g>
<g id="PathCollection_58">
<g clip-path="url(#p28123b45c0)">
<path d="M -3 0 L 3 0 M 0 3 L 0 -3" transform="translate(309.5964 553.68)" style="fill: #ffffff; stroke: #ffffff; stroke-width: 1.5"/>
</g>
</g>
<g id="PathCollection_59">
<g clip-path="url(#p28123b45c0)">
<path d="M -3 0 L 3 0 M 0 3 L 0 -3" transform="translate(345.976 553.68)" style="fill: #ffffff; stroke: #ffffff; stroke-width: 1.5"/>
</g>
</g>
<g id="PathCollection_60">
<g clip-path="url(#p28123b45c0)">
<path d="M -3 0 L 3 0 M 0 3 L 0 -3" transform="translate(388.36 553.68)" style="fill: #ffffff; stroke: #ffffff; stroke-width: 1.5"/>
</g>
</g>
<g id="PathCollection_61">
<g clip-path="url(#p28123b45c0)">
<path d="M -3 0 L 3 0 M 0 3 L 0 -3" transform="translate(413.7904 553.68)" style="fill: #ffffff; stroke: #ffffff; stroke-width: 1.5"/>
</g>
</g>
<g id="PathCollection_62">
<g clip-path="url(#p28123b45c0)">
<path d="M -3 0 L 3 0 M 0 3 L 0 -3" transform="translate(457.234 553.68)" style="fill: #ffffff; stroke: #ffffff; stroke-width: 1.5"/>
</g>
</g>
<g id="PathCollection_63">
<g clip-path="url(#p28123b45c0)">
<path d="M -3 0 L 3 0 M 0 3 L 0 -3" transform="translate(704.1208 553.68)" style="fill: #ffffff; stroke: #ffffff; stroke-width: 1.5"/>
</g>
</g>
<g id="PathCollection_64">
<g clip-path="url(#p28123b45c0)">
<path d="M -3 0 L 3 0 M 0 3 L 0 -3" transform="translate(773.348 553.68)" style="fill: #ffffff; stroke: #ffffff; stroke-width: 1.5"/>
</g>
</g>
<g id="PathCollection_65">
<g clip-path="url(#p28123b45c0)">
<path d="M -3 0 L 3 0 M 0 3 L 0 -3" transform="translate(801.604 553.68)" style="fill: #ffffff; stroke: #ffffff; stroke-width: 1.5"/>
</g>
</g>
<g id="PathCollection_66">
<g clip-path="url(#p28123b45c0)">
<path d="M -3 0 L 3 0 M 0 3 L 0 -3" transform="translate(851.052 553.68)" style="fill: #ffffff; stroke: #ffffff; stroke-width: 1.5"/>
</g>
</g>
<g id="PathCollection_67">
<g clip-path="url(#p28123b45c0)">
<path d="M -3 0 L 3 0 M 0 3 L 0 -3" transform="translate(907.564 553.68)" style="fill: #ffffff; stroke: #ffffff; stroke-width: 1.5"/>
</g>
</g>
<g id="PathCollection_68">
<g clip-path="url(#p28123b45c0)">
<path d="M -3 0 L 3 0 M 0 3 L 0 -3" transform="translate(1059.44 553.68)" style="fill: #ffffff; stroke: #ffffff; stroke-width: 1.5"/>
</g>
</g>
<g id="PathCollection_69">
<g clip-path="url(#p28123b45c0)">
<path d="M -3 0 L 3 0 M 0 3 L 0 -3" transform="translate(310.656 541.44)" style="fill: #ffffff; stroke: #ffffff; stroke-width: 1.5"/>
</g>
</g>
<g id="PathCollection_70">
<g clip-path="url(#p28123b45c0)">
<path d="M -3 0 L 3 0 M 0 3 L 0 -3" transform="translate(391.892 541.44)" style="fill: #ffffff; stroke: #ffffff; stroke-width: 1.5"/>
</g>
</g>
<g id="PathCollection_71">
<g clip-path="url(#p28123b45c0)">
<path d="M -3 0 L 3 0 M 0 3 L 0 -3" transform="translate(416.616 541.44)" style="fill: #ffffff; stroke: #ffffff; stroke-width: 1.5"/>
</g>
</g>
<g id="PathCollection_72">
<g clip-path="url(#p28123b45c0)">
<path d="M -3 0 L 3 0 M 0 3 L 0 -3" transform="translate(509.5076 541.44)" style="fill: #ffffff; stroke: #ffffff; stroke-width: 1.5"/>
</g>
</g>
<g id="PathCollection_73">
<g clip-path="url(#p28123b45c0)">
<path d="M -3 0 L 3 0 M 0 3 L 0 -3" transform="translate(790.3016 541.44)" style="fill: #ffffff; stroke: #ffffff; stroke-width: 1.5"/>
</g>
</g>
<g id="PathCollection_74">
<g clip-path="url(#p28123b45c0)">
<path d="M -3 0 L 3 0 M 0 3 L 0 -3" transform="translate(918.16 541.44)" style="fill: #ffffff; stroke: #ffffff; stroke-width: 1.5"/>
</g>
</g>
<g id="PathCollection_75">
<g clip-path="url(#p28123b45c0)">
<path d="M -3 0 L 3 0 M 0 3 L 0 -3" transform="translate(1066.504 541.44)" style="fill: #ffffff; stroke: #ffffff; stroke-width: 1.5"/>
</g>
</g>
<g id="PathCollection_76">
<g clip-path="url(#p28123b45c0)">
<path d="M -3 0 L 3 0 M 0 3 L 0 -3" transform="translate(317.72 529.92)" style="fill: #ffffff; stroke: #ffffff; stroke-width: 1.5"/>
</g>
</g>
<g id="PathCollection_77">
<g clip-path="url(#p28123b45c0)">
<path d="M -3 0 L 3 0 M 0 3 L 0 -3" transform="translate(457.234 529.92)" style="fill: #ffffff; stroke: #ffffff; stroke-width: 1.5"/>
</g>
</g>
<g id="PathCollection_78">
<g clip-path="url(#p28123b45c0)">
<path d="M -3 0 L 3 0 M 0 3 L 0 -3" transform="translate(750.7432 529.92)" style="fill: #ffffff; stroke: #ffffff; stroke-width: 1.5"/>
</g>
</g>
<g id="PathCollection_79">
<g clip-path="url(#p28123b45c0)">
<path d="M -3 0 L 3 0 M 0 3 L 0 -3" transform="translate(843.988 529.92)" style="fill: #ffffff; stroke: #ffffff; stroke-width: 1.5"/>
</g>
</g>
<g id="PathCollection_80">
<g clip-path="url(#p28123b45c0)">
<path d="M -3 0 L 3 0 M 0 3 L 0 -3" transform="translate(920.6324 529.92)" style="fill: #ffffff; stroke: #ffffff; stroke-width: 1.5"/>
</g>
</g>
<g id="PathCollection_81">
<g clip-path="url(#p28123b45c0)">
<path d="M -3 0 L 3 0 M 0 3 L 0 -3" transform="translate(1080.632 529.92)" style="fill: #ffffff; stroke: #ffffff; stroke-width: 1.5"/>
</g>
</g>
<g id="PathCollection_82">
<g clip-path="url(#p28123b45c0)">
<path d="M -3 0 L 3 0 M 0 3 L 0 -3" transform="translate(434.276 518.4)" style="fill: #ffffff; stroke: #ffffff; stroke-width: 1.5"/>
</g>
</g>
<g id="PathCollection_83">
<g clip-path="url(#p28123b45c0)">
<path d="M -3 0 L 3 0 M 0 3 L 0 -3" transform="translate(526.108 518.4)" style="fill: #ffffff; stroke: #ffffff; stroke-width: 1.5"/>
</g>
</g>
<g id="PathCollection_84">
<g clip-path="url(#p28123b45c0)">
<path d="M -3 0 L 3 0 M 0 3 L 0 -3" transform="translate(858.116 518.4)" style="fill: #ffffff; stroke: #ffffff; stroke-width: 1.5"/>
</g>
</g>
<g id="PathCollection_85">
<g clip-path="url(#p28123b45c0)">
<path d="M -3 0 L 3 0 M 0 3 L 0 -3" transform="translate(918.16 518.4)" style="fill: #ffffff; stroke: #ffffff; stroke-width: 1.5"/>
</g>
</g>
<g id="PathCollection_86">
<g clip-path="url(#p28123b45c0)">
<path d="M -3 0 L 3 0 M 0 3 L 0 -3" transform="translate(497.852 506.16)" style="fill: #ffffff; stroke: #ffffff; stroke-width: 1.5"/>
</g>
</g>
<g id="PathCollection_87">
<g clip-path="url(#p28123b45c0)">
<path d="M -3 0 L 3 0 M 0 3 L 0 -3" transform="translate(796.306 506.16)" style="fill: #ffffff; stroke: #ffffff; stroke-width: 1.5"/>
</g>
</g>
<g id="PathCollection_88">
<g clip-path="url(#p28123b45c0)">
<path d="M -3 0 L 3 0 M 0 3 L 0 -3" transform="translate(871.8908 506.16)" style="fill: #ffffff; stroke: #ffffff; stroke-width: 1.5"/>
</g>
</g>
<g id="PathCollection_89">
<g clip-path="url(#p28123b45c0)">
<path d="M -3 0 L 3 0 M 0 3 L 0 -3" transform="translate(939.352 506.16)" style="fill: #ffffff; stroke: #ffffff; stroke-width: 1.5"/>
</g>
</g>
<g id="PathCollection_90">
<g clip-path="url(#p28123b45c0)">
<path d="M -3 0 L 3 0 M 0 3 L 0 -3" transform="translate(808.668 494.64)" style="fill: #ffffff; stroke: #ffffff; stroke-width: 1.5"/>
</g>
</g>
<g id="line2d_184">
<path d="M 14.04 606.6 L 14.04 610.1 " style="fill: none; stroke: #ffffff; stroke-width: 0.8"/>
</g>
<g id="line2d_185">
<path d="M 191.16 606.6 L 191.16 610.1 " style="fill: none; stroke: #ffffff; stroke-width: 0.8"/>
</g>
<g id="line2d_186">
<path d="M 367.56 606.6 L 367.56 610.1 " style="fill: none; stroke: #ffffff; stroke-width: 0.8"/>
</g>
<g id="line2d_187">
<path d="M 543.96 606.6 L 543.96 610.1 " style="fill: none; stroke: #ffffff; stroke-width: 0.8"/>
</g>
<g id="line2d_188">
<path d="M 721.08 606.6 L 721.08 610.1 " style="fill: none; stroke: #ffffff; stroke-width: 0.8"/>
</g>
<g id="line2d_189">
<path d="M 897.48 606.6 L 897.48 610.1 " style="fill: none; stroke: #ffffff; stroke-width: 0.8"/>
</g>
<g id="line2d_190">
<path d="M 1073.88 606.6 L 1073.88 610.1 " style="fill: none; stroke: #ffffff; stroke-width: 0.8"/>
</g>
<g id="line2d_191">
<path d="M 1250.28 606.6 L 1250.28 610.1 " style="fill: none; stroke: #ffffff; stroke-width: 0.8"/>
</g>
</g>
</g>
<defs>
<clipPath id="pd2f023da11">
<rect x="227.520" y="19.440" width="844.560" height="422.640"/>
</clipPath>
<clipPath id="p28123b45c0">
<rect x="13.968" y="461.88" width="1271.52" height="144.72"/>
</clipPath>
</defs>
</svg>

</body>
</html>
